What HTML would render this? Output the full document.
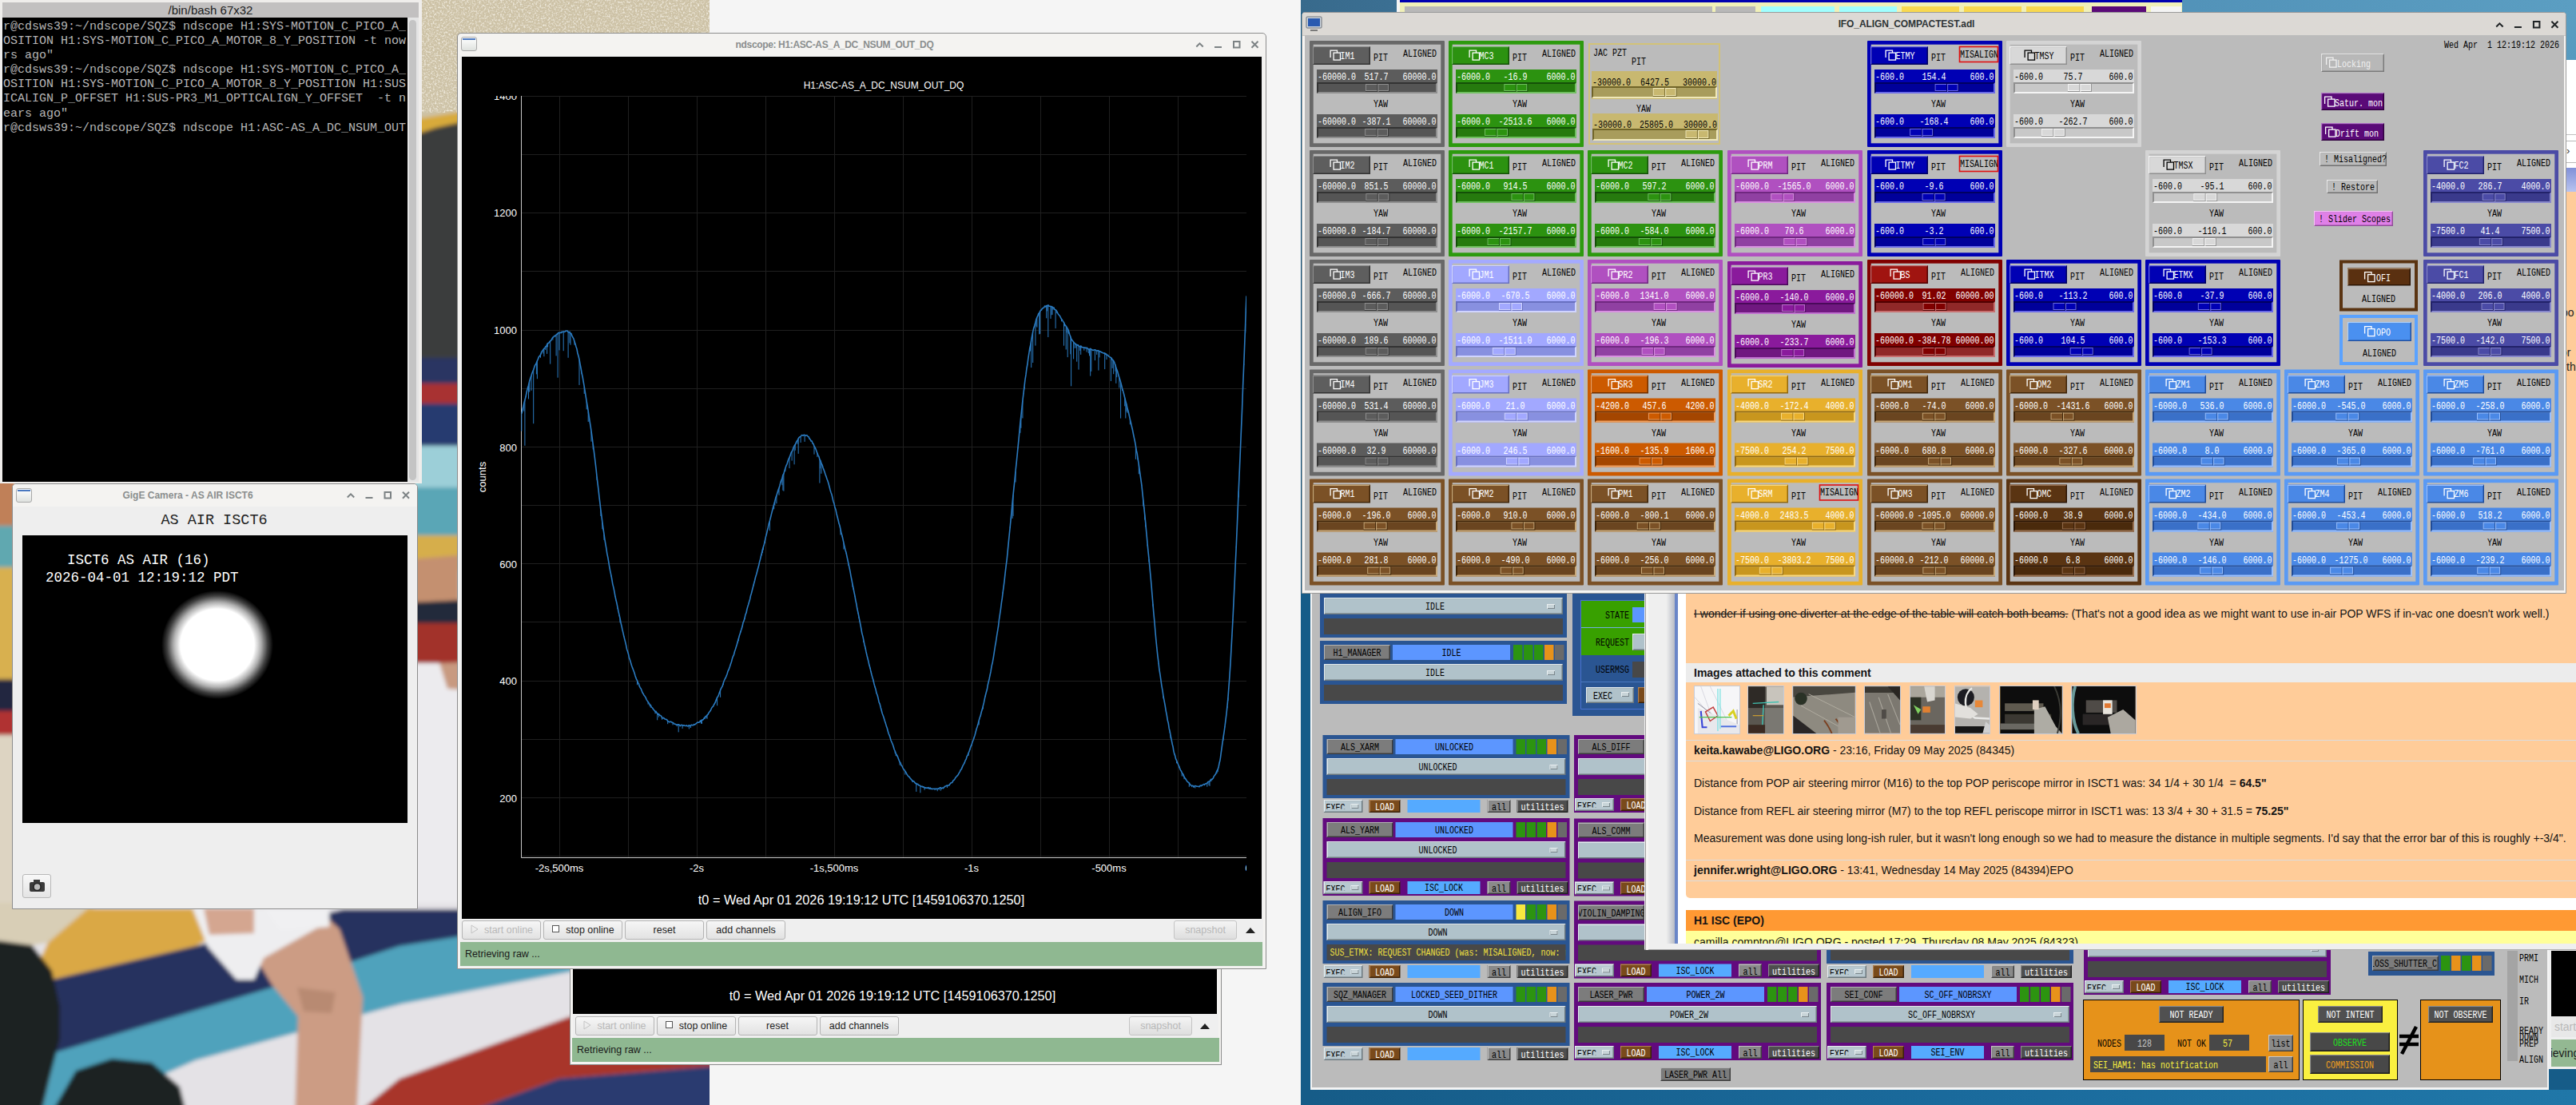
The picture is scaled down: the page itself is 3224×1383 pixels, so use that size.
<!DOCTYPE html><html><head><meta charset="utf-8"><style>html,body{margin:0;padding:0;overflow:hidden}body{width:3224px;height:1383px;position:relative;background:#f5f5f5;font-family:"Liberation Sans",sans-serif}svg{display:block}</style></head><body><div style="position:absolute;left:1628px;top:0;width:1596px;height:1383px;background:#165c88"></div><div style="position:absolute;left:1628px;top:0;width:1596px;height:16px;background:linear-gradient(90deg,#386a8c,#4a88b0 40%,#5b9ec2)"></div><div style="position:absolute;left:3190px;top:16px;width:34px;height:200px;background:linear-gradient(#5b9ec2,#4a90b8)"></div><div style="position:absolute;left:1640px;top:1364px;width:1584px;height:19px;background:linear-gradient(90deg,#165c88,#1a6a9c 50%,#2077a8)"></div><svg style="position:absolute;left:0;top:0" width="888" height="1383" viewBox="0 0 888 1383"><defs><filter id="pb" x="-5%" y="-5%" width="110%" height="110%"><feGaussianBlur stdDeviation="2.5"/></filter><filter id="noise" x="0" y="0" width="100%" height="100%"><feTurbulence type="fractalNoise" baseFrequency="0.45" numOctaves="2" seed="3"/><feColorMatrix type="matrix" values="0 0 0 0 0.95  0 0 0 0 0.92  0 0 0 0 0.85  0 0 0 2.2 -1.0"/></filter></defs><g filter="url(#pb)"><path d="M-20,-20 L900,-20 L900,170 L-20,170 Z" fill="#cdc2a6"/><path d="M515,150 L600,136 L600,150 L540,162 L515,172 Z" fill="#d8aa3a"/><path d="M515,170 L545,160 L600,148 L600,450 L515,448 Z" fill="#3b3e3c"/><path d="M515,448 L600,448 L600,482 L515,482 Z" fill="#2a3462"/><path d="M515,480 L600,480 L600,506 L515,506 Z" fill="#a83232"/><path d="M515,505 L600,505 L600,560 L515,560 Z" fill="#283a70"/><path d="M515,558 L600,558 L600,612 L515,612 Z" fill="#9ccfd8"/><path d="M515,610 L600,610 L600,672 L515,672 Z" fill="#5aa6b6"/><path d="M515,670 L600,670 L600,715 L515,715 Z" fill="#d6ae4c"/><path d="M515,700 L575,695 L575,752 L515,756 Z" fill="#c49070"/><path d="M515,754 L600,750 L600,782 L515,782 Z" fill="#222a3a"/><path d="M515,780 L600,780 L600,832 L515,832 Z" fill="#a2302a"/><path d="M515,830 L600,830 L600,1165 L515,1165 Z" fill="#ecebee"/><path d="M550,830 L600,828 L600,865 L560,862 Z" fill="#c89a80"/><path d="M515,1188 L600,1188 L600,1205 L515,1205 Z" fill="#2a3866"/><path d="M515,1203 L600,1203 L600,1220 L515,1220 Z" fill="#5aaac0"/><path d="M-20,600 L20,600 L20,660 L-20,660 Z" fill="#c08058"/><path d="M-20,658 L20,658 L20,712 L-20,712 Z" fill="#60a8b0"/><path d="M-20,710 L20,710 L20,852 L-20,852 Z" fill="#d8b050"/><path d="M-20,850 L20,850 L20,892 L-20,892 Z" fill="#202840"/><path d="M-20,890 L20,890 L20,922 L-20,922 Z" fill="#b03030"/><path d="M-20,920 L20,920 L20,1140 L-20,1140 Z" fill="#ddd4c2"/><path d="M-20,1130 L900,1130 L900,1400 L-20,1400 Z" fill="#e4e2e6"/><path d="M-20,1130 L120,1130 L105,1160 L70,1178 L30,1185 L-20,1180 Z" fill="#d8ceb6"/><path d="M60,1180 L110,1137 L330,1137 L245,1184 L35,1233 Z" fill="#daa844"/><path d="M35,1233 L245,1184 L430,1138 L720,1138 L720,1170 L560,1200 L500,1257 L350,1296 L70,1317 L40,1300 Z" fill="#27325e"/><path d="M70,1317 L350,1233 L500,1184 L720,1149 L720,1215 L500,1257 L245,1327 L80,1400 L50,1400 Z" fill="#4fa2bc"/><path d="M439,1400 L500,1350 L714,1272 L900,1240 L900,1334 L700,1350 L563,1400 Z" fill="#a8342c"/><path d="M563,1400 L700,1350 L900,1334 L900,1400 L563,1400 Z" fill="#2a3a70"/><path d="M-20,1175 L40,1183 L65,1215 L75,1260 L75,1300 L62,1350 L50,1400 L-20,1400 Z" fill="#1c2420"/><path d="M60,1400 L95,1340 L140,1325 L190,1330 L225,1360 L235,1400 Z" fill="#1c2420"/><path d="M322,1202 L411,1150 L425,1163 L454,1248 L446,1400 L369,1400 L373,1272 L340,1232 Z" fill="#cc9c84"/><path d="M372,1236 L420,1242 L415,1268 L380,1266 Z" fill="#b88a72"/><path d="M241,1137 L410,1137 L412,1153 L330,1199 L318,1226 L296,1226 L260,1185 Z" fill="#eeeef0"/><path d="M255,1137 L318,1137 L318,1168 L262,1170 Z" fill="#d4a690"/><path d="M330,1137 L412,1137 L412,1160 L350,1165 Z" fill="#f0f0f2"/></g><rect x="520" y="0" width="368" height="41" filter="url(#noise)"/><rect x="520" y="41" width="55" height="100" filter="url(#noise)"/></svg><div style="position:absolute;left:888px;top:0;width:740px;height:41px;background:#f5f5f5"></div><div style="position:absolute;left:888px;top:1333px;width:740px;height:50px;background:#f5f5f5"></div><div style="position:absolute;left:1585px;top:0;width:43px;height:1383px;background:#f5f5f5"></div><div style="position:absolute;left:1748px;top:0;width:4px;height:15px;background:#f4f4f4"></div><div style="position:absolute;left:1752px;top:0;width:979px;height:15px;background:#f0f0b8"></div><div style="position:absolute;left:1752px;top:0;width:979px;height:2.5px;background:#0000b0"></div><div style="position:absolute;left:1758px;top:8px;width:385px;height:7px;background:#b8b8b8"></div><div style="position:absolute;left:2147px;top:8px;width:50px;height:7px;background:#b8b8b8"></div><div style="position:absolute;left:2204px;top:8px;width:92px;height:7px;background:#a0ffff"></div><div style="position:absolute;left:2302px;top:8px;width:72px;height:7px;background:#a0ffff"></div><div style="position:absolute;left:2380px;top:8px;width:72px;height:7px;background:#f8d850"></div><div style="position:absolute;left:2458px;top:8px;width:72px;height:7px;background:#f8d850"></div><div style="position:absolute;left:2536px;top:8px;width:72px;height:7px;background:#f8d850"></div><div style="position:absolute;left:2618px;top:8px;width:68px;height:7px;background:#5a0a78"></div><div style="position:absolute;left:2692px;top:8px;width:38px;height:7px;background:#f4f4f4"></div><div style="position:absolute;left:3212px;top:75px;width:12px;height:670px;background:#ffffff"></div><div style="position:absolute;left:3212px;top:168px;width:12px;height:1px;background:#c0c0c0"></div><div style="position:absolute;left:3212px;top:210px;width:12px;height:30px;background:linear-gradient(#8090d8,#b8c4f0)"></div><div style="position:absolute;left:3212px;top:240px;width:12px;height:505px;background:#ffcc99;overflow:hidden;font:14px 'Liberation Sans',sans-serif;color:#222"><div style="position:absolute;left:-6px;top:143px">po</div><div style="position:absolute;left:-7px;top:193px">or</div><div style="position:absolute;left:-3px;top:211px">ith</div></div><div style="position:absolute;left:3212px;top:176px;width:12px;height:26px;border-top:1px solid #b8b8b8;border-bottom:1px solid #b8b8b8;background:#fff;font:13px 'Liberation Sans',sans-serif;color:#333;line-height:24px;overflow:hidden">&#8250;</div><div style="position:absolute;left:3190px;top:1188px;width:34px;height:150px;background:#efefef"></div><div style="position:absolute;left:3193px;top:1190px;width:31px;height:82px;background:#000"></div><div style="position:absolute;left:3193px;top:1272px;width:31px;height:26px;background:#e8e8e8;font:14px 'Liberation Sans',sans-serif;color:#b8b8b8;line-height:26px;white-space:nowrap;overflow:hidden">&nbsp;start</div><div style="position:absolute;left:3193px;top:1301px;width:31px;height:34px;background:#93b892;font:14px 'Liberation Sans',sans-serif;color:#1a1a1a;line-height:34px;white-space:nowrap;overflow:hidden;text-indent:-6px">rieving</div><div style="position:absolute;left:1640px;top:740px;width:1550px;height:624px;background:#f4f4f4"></div><svg style="position:absolute;left:1642px;top:740px" width="1546" height="621" viewBox="1642 740 1546 621"><rect x="1642" y="740" width="1546" height="621" fill="#bbbbbb"/><rect x="1652" y="719" width="309" height="79" fill="#2a5592"/><rect x="1657" y="748" width="299" height="21" fill="#6c787e"/><path d="M1657,769 L1657,748 L1956,748 L1954.5,749.5 L1658.5,749.5 L1658.5,767.5 Z" fill="#e4ecef"/><rect x="1658.5" y="749.5" width="296.0" height="18.0" fill="#b0c2ca"/><text x="1796.0" y="763.0" font-family="Liberation Mono" font-size="12.5" fill="#000" textLength="24.0" lengthAdjust="spacingAndGlyphs" text-anchor="middle">IDLE</text><rect x="1936" y="756" width="10" height="6" fill="#e8eef0"/><rect x="1937" y="757" width="9" height="5" fill="#7a868c"/><rect x="1937" y="757" width="8" height="4" fill="#c8d4d8"/><rect x="1657" y="774" width="299" height="20" fill="#484848"/><rect x="1652" y="802" width="309" height="79" fill="#2a5592"/><rect x="1657" y="807" width="83" height="19" fill="#3c3c3c"/><path d="M1657,826 L1657,807 L1740,807 L1738.5,808.5 L1658.5,808.5 L1658.5,824.5 Z" fill="#b4b4b4"/><rect x="1658.5" y="808.5" width="80.0" height="16.0" fill="#7c7c7c"/><svg x="1658" y="808" width="81" height="17"><text x="40.5" y="13.0" font-family="Liberation Mono" font-size="12.5" fill="#000" textLength="60.0" lengthAdjust="spacingAndGlyphs" text-anchor="middle">H1_MANAGER</text></svg><rect x="1743" y="807" width="147" height="19" fill="#5c96ff"/><text x="1816.5" y="821.0" font-family="Liberation Mono" font-size="12.5" fill="#000" textLength="24.0" lengthAdjust="spacingAndGlyphs" text-anchor="middle">IDLE</text><rect x="1894" y="807" width="11.5" height="19" fill="#2c9410"/><rect x="1907" y="807" width="11.5" height="19" fill="#2c9410"/><rect x="1920" y="807" width="11.5" height="19" fill="#2c9410"/><rect x="1933" y="807" width="11.5" height="19" fill="#e8921a"/><rect x="1946" y="807" width="11.5" height="19" fill="#6a6a6a"/><rect x="1657" y="831" width="299" height="21" fill="#6c787e"/><path d="M1657,852 L1657,831 L1956,831 L1954.5,832.5 L1658.5,832.5 L1658.5,850.5 Z" fill="#e4ecef"/><rect x="1658.5" y="832.5" width="296.0" height="18.0" fill="#b0c2ca"/><text x="1796.0" y="846.0" font-family="Liberation Mono" font-size="12.5" fill="#000" textLength="24.0" lengthAdjust="spacingAndGlyphs" text-anchor="middle">IDLE</text><rect x="1936" y="839" width="10" height="6" fill="#e8eef0"/><rect x="1937" y="840" width="9" height="5" fill="#7a868c"/><rect x="1937" y="840" width="8" height="4" fill="#c8d4d8"/><rect x="1657" y="857" width="299" height="20" fill="#484848"/><rect x="1655.5" y="920" width="309" height="79" fill="#2a5592"/><rect x="1660.5" y="925" width="83" height="19" fill="#3c3c3c"/><path d="M1660.5,944 L1660.5,925 L1743.5,925 L1742.0,926.5 L1662.0,926.5 L1662.0,942.5 Z" fill="#b4b4b4"/><rect x="1662.0" y="926.5" width="80.0" height="16.0" fill="#7c7c7c"/><svg x="1661.5" y="926" width="81" height="17"><text x="40.5" y="13.0" font-family="Liberation Mono" font-size="12.5" fill="#000" textLength="48.0" lengthAdjust="spacingAndGlyphs" text-anchor="middle">ALS_XARM</text></svg><rect x="1746.5" y="925" width="147" height="19" fill="#5c96ff"/><text x="1820.0" y="939.0" font-family="Liberation Mono" font-size="12.5" fill="#000" textLength="48.0" lengthAdjust="spacingAndGlyphs" text-anchor="middle">UNLOCKED</text><rect x="1897.5" y="925" width="11.5" height="19" fill="#2c9410"/><rect x="1910.5" y="925" width="11.5" height="19" fill="#2c9410"/><rect x="1923.5" y="925" width="11.5" height="19" fill="#2c9410"/><rect x="1936.5" y="925" width="11.5" height="19" fill="#e8921a"/><rect x="1949.5" y="925" width="11.5" height="19" fill="#6a6a6a"/><rect x="1660.5" y="949" width="299" height="21" fill="#6c787e"/><path d="M1660.5,970 L1660.5,949 L1959.5,949 L1958.0,950.5 L1662.0,950.5 L1662.0,968.5 Z" fill="#e4ecef"/><rect x="1662.0" y="950.5" width="296.0" height="18.0" fill="#b0c2ca"/><text x="1799.5" y="964.0" font-family="Liberation Mono" font-size="12.5" fill="#000" textLength="48.0" lengthAdjust="spacingAndGlyphs" text-anchor="middle">UNLOCKED</text><rect x="1939.5" y="957" width="10" height="6" fill="#e8eef0"/><rect x="1940.5" y="958" width="9" height="5" fill="#7a868c"/><rect x="1940.5" y="958" width="8" height="4" fill="#c8d4d8"/><rect x="1660.5" y="975" width="299" height="20" fill="#484848"/><rect x="1656.5" y="1001" width="49" height="16" fill="#6c787e"/><path d="M1656.5,1017 L1656.5,1001 L1705.5,1001 L1704.0,1002.5 L1658.0,1002.5 L1658.0,1015.5 Z" fill="#e8eef0"/><rect x="1658.0" y="1002.5" width="46.0" height="13.0" fill="#b8c8d0"/><svg x="1658.5" y="1001" width="30" height="11.5"><text x="1.0" y="13.5" font-family="Liberation Mono" font-size="12.5" fill="#000" textLength="24.0" lengthAdjust="spacingAndGlyphs">EXEC</text></svg><rect x="1690.5" y="1006" width="10" height="6" fill="#e8eef0"/><rect x="1691.5" y="1007" width="9" height="5" fill="#7a868c"/><rect x="1691.5" y="1007" width="8" height="4" fill="#c8d4d8"/><rect x="1713.5" y="1001" width="39" height="16" fill="#3a2008"/><path d="M1713.5,1017 L1713.5,1001 L1752.5,1001 L1751.0,1002.5 L1715.0,1002.5 L1715.0,1015.5 Z" fill="#b08050"/><rect x="1715.0" y="1002.5" width="36.0" height="13.0" fill="#7a4a1a"/><text x="1733.0" y="1014.0" font-family="Liberation Mono" font-size="12.5" fill="#fff" textLength="24.0" lengthAdjust="spacingAndGlyphs" text-anchor="middle">LOAD</text><rect x="1761.5" y="1001" width="91" height="16" fill="#55aaff"/><rect x="1861.5" y="1001" width="29" height="16" fill="#404040"/><path d="M1861.5,1017 L1861.5,1001 L1890.5,1001 L1889.0,1002.5 L1863.0,1002.5 L1863.0,1015.5 Z" fill="#c0c0c0"/><rect x="1863.0" y="1002.5" width="26.0" height="13.0" fill="#8a8a8a"/><text x="1876.0" y="1014.0" font-family="Liberation Mono" font-size="12.5" fill="#000" textLength="18.0" lengthAdjust="spacingAndGlyphs" text-anchor="middle">all</text><rect x="1898.5" y="1001" width="64" height="16" fill="#202020"/><path d="M1898.5,1017 L1898.5,1001 L1962.5,1001 L1961.0,1002.5 L1900.0,1002.5 L1900.0,1015.5 Z" fill="#8a8a8a"/><rect x="1900.0" y="1002.5" width="61.0" height="13.0" fill="#4e4e4e"/><text x="1930.5" y="1014.0" font-family="Liberation Mono" font-size="12.5" fill="#fff" textLength="54.0" lengthAdjust="spacingAndGlyphs" text-anchor="middle">utilities</text><rect x="1655.5" y="1024" width="309" height="97" fill="#620a7e"/><rect x="1660.5" y="1029" width="83" height="19" fill="#3c3c3c"/><path d="M1660.5,1048 L1660.5,1029 L1743.5,1029 L1742.0,1030.5 L1662.0,1030.5 L1662.0,1046.5 Z" fill="#b4b4b4"/><rect x="1662.0" y="1030.5" width="80.0" height="16.0" fill="#7c7c7c"/><svg x="1661.5" y="1030" width="81" height="17"><text x="40.5" y="13.0" font-family="Liberation Mono" font-size="12.5" fill="#000" textLength="48.0" lengthAdjust="spacingAndGlyphs" text-anchor="middle">ALS_YARM</text></svg><rect x="1746.5" y="1029" width="147" height="19" fill="#5c96ff"/><text x="1820.0" y="1043.0" font-family="Liberation Mono" font-size="12.5" fill="#000" textLength="48.0" lengthAdjust="spacingAndGlyphs" text-anchor="middle">UNLOCKED</text><rect x="1897.5" y="1029" width="11.5" height="19" fill="#2c9410"/><rect x="1910.5" y="1029" width="11.5" height="19" fill="#2c9410"/><rect x="1923.5" y="1029" width="11.5" height="19" fill="#2c9410"/><rect x="1936.5" y="1029" width="11.5" height="19" fill="#e8921a"/><rect x="1949.5" y="1029" width="11.5" height="19" fill="#6a6a6a"/><rect x="1660.5" y="1053" width="299" height="21" fill="#6c787e"/><path d="M1660.5,1074 L1660.5,1053 L1959.5,1053 L1958.0,1054.5 L1662.0,1054.5 L1662.0,1072.5 Z" fill="#e4ecef"/><rect x="1662.0" y="1054.5" width="296.0" height="18.0" fill="#b0c2ca"/><text x="1799.5" y="1068.0" font-family="Liberation Mono" font-size="12.5" fill="#000" textLength="48.0" lengthAdjust="spacingAndGlyphs" text-anchor="middle">UNLOCKED</text><rect x="1939.5" y="1061" width="10" height="6" fill="#e8eef0"/><rect x="1940.5" y="1062" width="9" height="5" fill="#7a868c"/><rect x="1940.5" y="1062" width="8" height="4" fill="#c8d4d8"/><rect x="1660.5" y="1079" width="299" height="20" fill="#484848"/><rect x="1656.5" y="1103" width="49" height="16" fill="#6c787e"/><path d="M1656.5,1119 L1656.5,1103 L1705.5,1103 L1704.0,1104.5 L1658.0,1104.5 L1658.0,1117.5 Z" fill="#e8eef0"/><rect x="1658.0" y="1104.5" width="46.0" height="13.0" fill="#b8c8d0"/><svg x="1658.5" y="1103" width="30" height="11.5"><text x="1.0" y="13.5" font-family="Liberation Mono" font-size="12.5" fill="#000" textLength="24.0" lengthAdjust="spacingAndGlyphs">EXEC</text></svg><rect x="1690.5" y="1108" width="10" height="6" fill="#e8eef0"/><rect x="1691.5" y="1109" width="9" height="5" fill="#7a868c"/><rect x="1691.5" y="1109" width="8" height="4" fill="#c8d4d8"/><rect x="1713.5" y="1103" width="39" height="16" fill="#3a2008"/><path d="M1713.5,1119 L1713.5,1103 L1752.5,1103 L1751.0,1104.5 L1715.0,1104.5 L1715.0,1117.5 Z" fill="#b08050"/><rect x="1715.0" y="1104.5" width="36.0" height="13.0" fill="#7a4a1a"/><text x="1733.0" y="1116.0" font-family="Liberation Mono" font-size="12.5" fill="#fff" textLength="24.0" lengthAdjust="spacingAndGlyphs" text-anchor="middle">LOAD</text><rect x="1761.5" y="1103" width="91" height="16" fill="#55aaff"/><text x="1807.0" y="1115.0" font-family="Liberation Mono" font-size="12.5" fill="#000" textLength="48.0" lengthAdjust="spacingAndGlyphs" text-anchor="middle">ISC_LOCK</text><rect x="1861.5" y="1103" width="29" height="16" fill="#404040"/><path d="M1861.5,1119 L1861.5,1103 L1890.5,1103 L1889.0,1104.5 L1863.0,1104.5 L1863.0,1117.5 Z" fill="#c0c0c0"/><rect x="1863.0" y="1104.5" width="26.0" height="13.0" fill="#8a8a8a"/><text x="1876.0" y="1116.0" font-family="Liberation Mono" font-size="12.5" fill="#000" textLength="18.0" lengthAdjust="spacingAndGlyphs" text-anchor="middle">all</text><rect x="1898.5" y="1103" width="64" height="16" fill="#202020"/><path d="M1898.5,1119 L1898.5,1103 L1962.5,1103 L1961.0,1104.5 L1900.0,1104.5 L1900.0,1117.5 Z" fill="#8a8a8a"/><rect x="1900.0" y="1104.5" width="61.0" height="13.0" fill="#4e4e4e"/><text x="1930.5" y="1116.0" font-family="Liberation Mono" font-size="12.5" fill="#fff" textLength="54.0" lengthAdjust="spacingAndGlyphs" text-anchor="middle">utilities</text><rect x="1655.5" y="1127" width="309" height="79" fill="#2a5592"/><rect x="1660.5" y="1132" width="83" height="19" fill="#3c3c3c"/><path d="M1660.5,1151 L1660.5,1132 L1743.5,1132 L1742.0,1133.5 L1662.0,1133.5 L1662.0,1149.5 Z" fill="#b4b4b4"/><rect x="1662.0" y="1133.5" width="80.0" height="16.0" fill="#7c7c7c"/><svg x="1661.5" y="1133" width="81" height="17"><text x="40.5" y="13.0" font-family="Liberation Mono" font-size="12.5" fill="#000" textLength="54.0" lengthAdjust="spacingAndGlyphs" text-anchor="middle">ALIGN_IFO</text></svg><rect x="1746.5" y="1132" width="147" height="19" fill="#5c96ff"/><text x="1820.0" y="1146.0" font-family="Liberation Mono" font-size="12.5" fill="#000" textLength="24.0" lengthAdjust="spacingAndGlyphs" text-anchor="middle">DOWN</text><rect x="1897.5" y="1132" width="11.5" height="19" fill="#f8e840"/><rect x="1910.5" y="1132" width="11.5" height="19" fill="#2c9410"/><rect x="1923.5" y="1132" width="11.5" height="19" fill="#2c9410"/><rect x="1936.5" y="1132" width="11.5" height="19" fill="#e8921a"/><rect x="1949.5" y="1132" width="11.5" height="19" fill="#6a6a6a"/><rect x="1660.5" y="1156" width="299" height="21" fill="#6c787e"/><path d="M1660.5,1177 L1660.5,1156 L1959.5,1156 L1958.0,1157.5 L1662.0,1157.5 L1662.0,1175.5 Z" fill="#e4ecef"/><rect x="1662.0" y="1157.5" width="296.0" height="18.0" fill="#b0c2ca"/><text x="1799.5" y="1171.0" font-family="Liberation Mono" font-size="12.5" fill="#000" textLength="24.0" lengthAdjust="spacingAndGlyphs" text-anchor="middle">DOWN</text><rect x="1939.5" y="1164" width="10" height="6" fill="#e8eef0"/><rect x="1940.5" y="1165" width="9" height="5" fill="#7a868c"/><rect x="1940.5" y="1165" width="8" height="4" fill="#c8d4d8"/><rect x="1660.5" y="1182" width="299" height="20" fill="#484848"/><svg x="1660.5" y="1182" width="299" height="20"><text x="4.0" y="14.0" font-family="Liberation Mono" font-size="12.5" fill="#f0e040" textLength="300.0" lengthAdjust="spacingAndGlyphs">SUS_ETMX: REQUEST CHANGED (was: MISALIGNED, now: r</text></svg><rect x="1656.5" y="1208" width="49" height="16" fill="#6c787e"/><path d="M1656.5,1224 L1656.5,1208 L1705.5,1208 L1704.0,1209.5 L1658.0,1209.5 L1658.0,1222.5 Z" fill="#e8eef0"/><rect x="1658.0" y="1209.5" width="46.0" height="13.0" fill="#b8c8d0"/><svg x="1658.5" y="1208" width="30" height="11.5"><text x="1.0" y="13.5" font-family="Liberation Mono" font-size="12.5" fill="#000" textLength="24.0" lengthAdjust="spacingAndGlyphs">EXEC</text></svg><rect x="1690.5" y="1213" width="10" height="6" fill="#e8eef0"/><rect x="1691.5" y="1214" width="9" height="5" fill="#7a868c"/><rect x="1691.5" y="1214" width="8" height="4" fill="#c8d4d8"/><rect x="1713.5" y="1208" width="39" height="16" fill="#3a2008"/><path d="M1713.5,1224 L1713.5,1208 L1752.5,1208 L1751.0,1209.5 L1715.0,1209.5 L1715.0,1222.5 Z" fill="#b08050"/><rect x="1715.0" y="1209.5" width="36.0" height="13.0" fill="#7a4a1a"/><text x="1733.0" y="1221.0" font-family="Liberation Mono" font-size="12.5" fill="#fff" textLength="24.0" lengthAdjust="spacingAndGlyphs" text-anchor="middle">LOAD</text><rect x="1761.5" y="1208" width="91" height="16" fill="#55aaff"/><rect x="1861.5" y="1208" width="29" height="16" fill="#404040"/><path d="M1861.5,1224 L1861.5,1208 L1890.5,1208 L1889.0,1209.5 L1863.0,1209.5 L1863.0,1222.5 Z" fill="#c0c0c0"/><rect x="1863.0" y="1209.5" width="26.0" height="13.0" fill="#8a8a8a"/><text x="1876.0" y="1221.0" font-family="Liberation Mono" font-size="12.5" fill="#000" textLength="18.0" lengthAdjust="spacingAndGlyphs" text-anchor="middle">all</text><rect x="1898.5" y="1208" width="64" height="16" fill="#202020"/><path d="M1898.5,1224 L1898.5,1208 L1962.5,1208 L1961.0,1209.5 L1900.0,1209.5 L1900.0,1222.5 Z" fill="#8a8a8a"/><rect x="1900.0" y="1209.5" width="61.0" height="13.0" fill="#4e4e4e"/><text x="1930.5" y="1221.0" font-family="Liberation Mono" font-size="12.5" fill="#fff" textLength="54.0" lengthAdjust="spacingAndGlyphs" text-anchor="middle">utilities</text><rect x="1655.5" y="1230" width="309" height="79" fill="#2a5592"/><rect x="1660.5" y="1235" width="83" height="19" fill="#3c3c3c"/><path d="M1660.5,1254 L1660.5,1235 L1743.5,1235 L1742.0,1236.5 L1662.0,1236.5 L1662.0,1252.5 Z" fill="#b4b4b4"/><rect x="1662.0" y="1236.5" width="80.0" height="16.0" fill="#7c7c7c"/><svg x="1661.5" y="1236" width="81" height="17"><text x="40.5" y="13.0" font-family="Liberation Mono" font-size="12.5" fill="#000" textLength="66.0" lengthAdjust="spacingAndGlyphs" text-anchor="middle">SQZ_MANAGER</text></svg><rect x="1746.5" y="1235" width="147" height="19" fill="#5c96ff"/><text x="1820.0" y="1249.0" font-family="Liberation Mono" font-size="12.5" fill="#000" textLength="108.0" lengthAdjust="spacingAndGlyphs" text-anchor="middle">LOCKED_SEED_DITHER</text><rect x="1897.5" y="1235" width="11.5" height="19" fill="#2c9410"/><rect x="1910.5" y="1235" width="11.5" height="19" fill="#2c9410"/><rect x="1923.5" y="1235" width="11.5" height="19" fill="#2c9410"/><rect x="1936.5" y="1235" width="11.5" height="19" fill="#e8921a"/><rect x="1949.5" y="1235" width="11.5" height="19" fill="#6a6a6a"/><rect x="1660.5" y="1259" width="299" height="21" fill="#6c787e"/><path d="M1660.5,1280 L1660.5,1259 L1959.5,1259 L1958.0,1260.5 L1662.0,1260.5 L1662.0,1278.5 Z" fill="#e4ecef"/><rect x="1662.0" y="1260.5" width="296.0" height="18.0" fill="#b0c2ca"/><text x="1799.5" y="1274.0" font-family="Liberation Mono" font-size="12.5" fill="#000" textLength="24.0" lengthAdjust="spacingAndGlyphs" text-anchor="middle">DOWN</text><rect x="1939.5" y="1267" width="10" height="6" fill="#e8eef0"/><rect x="1940.5" y="1268" width="9" height="5" fill="#7a868c"/><rect x="1940.5" y="1268" width="8" height="4" fill="#c8d4d8"/><rect x="1660.5" y="1285" width="299" height="20" fill="#484848"/><rect x="1656.5" y="1311" width="49" height="16" fill="#6c787e"/><path d="M1656.5,1327 L1656.5,1311 L1705.5,1311 L1704.0,1312.5 L1658.0,1312.5 L1658.0,1325.5 Z" fill="#e8eef0"/><rect x="1658.0" y="1312.5" width="46.0" height="13.0" fill="#b8c8d0"/><svg x="1658.5" y="1311" width="30" height="11.5"><text x="1.0" y="13.5" font-family="Liberation Mono" font-size="12.5" fill="#000" textLength="24.0" lengthAdjust="spacingAndGlyphs">EXEC</text></svg><rect x="1690.5" y="1316" width="10" height="6" fill="#e8eef0"/><rect x="1691.5" y="1317" width="9" height="5" fill="#7a868c"/><rect x="1691.5" y="1317" width="8" height="4" fill="#c8d4d8"/><rect x="1713.5" y="1311" width="39" height="16" fill="#3a2008"/><path d="M1713.5,1327 L1713.5,1311 L1752.5,1311 L1751.0,1312.5 L1715.0,1312.5 L1715.0,1325.5 Z" fill="#b08050"/><rect x="1715.0" y="1312.5" width="36.0" height="13.0" fill="#7a4a1a"/><text x="1733.0" y="1324.0" font-family="Liberation Mono" font-size="12.5" fill="#fff" textLength="24.0" lengthAdjust="spacingAndGlyphs" text-anchor="middle">LOAD</text><rect x="1761.5" y="1311" width="91" height="16" fill="#55aaff"/><rect x="1861.5" y="1311" width="29" height="16" fill="#404040"/><path d="M1861.5,1327 L1861.5,1311 L1890.5,1311 L1889.0,1312.5 L1863.0,1312.5 L1863.0,1325.5 Z" fill="#c0c0c0"/><rect x="1863.0" y="1312.5" width="26.0" height="13.0" fill="#8a8a8a"/><text x="1876.0" y="1324.0" font-family="Liberation Mono" font-size="12.5" fill="#000" textLength="18.0" lengthAdjust="spacingAndGlyphs" text-anchor="middle">all</text><rect x="1898.5" y="1311" width="64" height="16" fill="#202020"/><path d="M1898.5,1327 L1898.5,1311 L1962.5,1311 L1961.0,1312.5 L1900.0,1312.5 L1900.0,1325.5 Z" fill="#8a8a8a"/><rect x="1900.0" y="1312.5" width="61.0" height="13.0" fill="#4e4e4e"/><text x="1930.5" y="1324.0" font-family="Liberation Mono" font-size="12.5" fill="#fff" textLength="54.0" lengthAdjust="spacingAndGlyphs" text-anchor="middle">utilities</text><rect x="1968" y="742" width="95" height="154" fill="#2a5592"/><rect x="1978" y="752" width="85" height="68" fill="#38a000"/><path d="M1978,785.5 L2063,785.5" stroke="#70b0e0" stroke-width="1"/><text x="2039.0" y="774.0" font-family="Liberation Mono" font-size="12.5" fill="#000" textLength="30.0" lengthAdjust="spacingAndGlyphs" text-anchor="end">STATE</text><rect x="2043" y="760" width="20" height="19" fill="#5c96ff"/><text x="2039.0" y="808.0" font-family="Liberation Mono" font-size="12.5" fill="#000" textLength="42.0" lengthAdjust="spacingAndGlyphs" text-anchor="end">REQUEST</text><rect x="2043" y="793" width="30" height="21" fill="#6c787e"/><path d="M2043,814 L2043,793 L2073,793 L2071.5,794.5 L2044.5,794.5 L2044.5,812.5 Z" fill="#e4ecef"/><rect x="2044.5" y="794.5" width="27.0" height="18.0" fill="#b0c2ca"/><path d="M1978.5,751 L1978.5,887.5 L2063,887.5 M1978,751.5 L2063,751.5" stroke="#4a72d0" stroke-width="1" fill="none"/><text x="2039.0" y="842.0" font-family="Liberation Mono" font-size="12.5" fill="#000" textLength="42.0" lengthAdjust="spacingAndGlyphs" text-anchor="end">USERMSG</text><rect x="2043" y="828" width="20" height="20" fill="#484848"/><path d="M1978,853.5 L2063,853.5" stroke="#4a7ac0" stroke-width="1"/><rect x="1985" y="860" width="60" height="20" fill="#6c787e"/><path d="M1985,880 L1985,860 L2045,860 L2043.5,861.5 L1986.5,861.5 L1986.5,878.5 Z" fill="#e4ecef"/><rect x="1986.5" y="861.5" width="57.0" height="17.0" fill="#b0c2ca"/><text x="1994.0" y="875.0" font-family="Liberation Mono" font-size="12.5" fill="#000" textLength="24.0" lengthAdjust="spacingAndGlyphs">EXEC</text><rect x="2029" y="866" width="10" height="6" fill="#e8eef0"/><rect x="2030" y="867" width="9" height="5" fill="#7a868c"/><rect x="2030" y="867" width="8" height="4" fill="#c8d4d8"/><rect x="2050" y="860" width="20" height="20" fill="#3a2008"/><path d="M2050,880 L2050,860 L2070,860 L2068.5,861.5 L2051.5,861.5 L2051.5,878.5 Z" fill="#b08050"/><rect x="2051.5" y="861.5" width="17.0" height="17.0" fill="#7a4a1a"/><rect x="1970" y="920" width="309" height="97" fill="#620a7e"/><rect x="1975" y="925" width="83" height="19" fill="#3c3c3c"/><path d="M1975,944 L1975,925 L2058,925 L2056.5,926.5 L1976.5,926.5 L1976.5,942.5 Z" fill="#b4b4b4"/><rect x="1976.5" y="926.5" width="80.0" height="16.0" fill="#7c7c7c"/><svg x="1976" y="926" width="81" height="17"><text x="40.5" y="13.0" font-family="Liberation Mono" font-size="12.5" fill="#000" textLength="48.0" lengthAdjust="spacingAndGlyphs" text-anchor="middle">ALS_DIFF</text></svg><rect x="2061" y="925" width="147" height="19" fill="#5c96ff"/><rect x="2212" y="925" width="11.5" height="19" fill="#2c9410"/><rect x="2225" y="925" width="11.5" height="19" fill="#2c9410"/><rect x="2238" y="925" width="11.5" height="19" fill="#2c9410"/><rect x="2251" y="925" width="11.5" height="19" fill="#e8921a"/><rect x="2264" y="925" width="11.5" height="19" fill="#6a6a6a"/><rect x="1975" y="949" width="299" height="21" fill="#6c787e"/><path d="M1975,970 L1975,949 L2274,949 L2272.5,950.5 L1976.5,950.5 L1976.5,968.5 Z" fill="#e4ecef"/><rect x="1976.5" y="950.5" width="296.0" height="18.0" fill="#b0c2ca"/><rect x="2254" y="957" width="10" height="6" fill="#e8eef0"/><rect x="2255" y="958" width="9" height="5" fill="#7a868c"/><rect x="2255" y="958" width="8" height="4" fill="#c8d4d8"/><rect x="1975" y="975" width="299" height="20" fill="#484848"/><rect x="1971" y="999" width="49" height="16" fill="#6c787e"/><path d="M1971,1015 L1971,999 L2020,999 L2018.5,1000.5 L1972.5,1000.5 L1972.5,1013.5 Z" fill="#e8eef0"/><rect x="1972.5" y="1000.5" width="46.0" height="13.0" fill="#b8c8d0"/><svg x="1973" y="999" width="30" height="11.5"><text x="1.0" y="13.5" font-family="Liberation Mono" font-size="12.5" fill="#000" textLength="24.0" lengthAdjust="spacingAndGlyphs">EXEC</text></svg><rect x="2005" y="1004" width="10" height="6" fill="#e8eef0"/><rect x="2006" y="1005" width="9" height="5" fill="#7a868c"/><rect x="2006" y="1005" width="8" height="4" fill="#c8d4d8"/><rect x="2028" y="999" width="39" height="16" fill="#3a2008"/><path d="M2028,1015 L2028,999 L2067,999 L2065.5,1000.5 L2029.5,1000.5 L2029.5,1013.5 Z" fill="#b08050"/><rect x="2029.5" y="1000.5" width="36.0" height="13.0" fill="#7a4a1a"/><text x="2047.5" y="1012.0" font-family="Liberation Mono" font-size="12.5" fill="#fff" textLength="24.0" lengthAdjust="spacingAndGlyphs" text-anchor="middle">LOAD</text><rect x="2076" y="999" width="91" height="16" fill="#55aaff"/><text x="2121.5" y="1011.0" font-family="Liberation Mono" font-size="12.5" fill="#000" textLength="48.0" lengthAdjust="spacingAndGlyphs" text-anchor="middle">ISC_LOCK</text><rect x="2176" y="999" width="29" height="16" fill="#404040"/><path d="M2176,1015 L2176,999 L2205,999 L2203.5,1000.5 L2177.5,1000.5 L2177.5,1013.5 Z" fill="#c0c0c0"/><rect x="2177.5" y="1000.5" width="26.0" height="13.0" fill="#8a8a8a"/><text x="2190.5" y="1012.0" font-family="Liberation Mono" font-size="12.5" fill="#000" textLength="18.0" lengthAdjust="spacingAndGlyphs" text-anchor="middle">all</text><rect x="2213" y="999" width="64" height="16" fill="#202020"/><path d="M2213,1015 L2213,999 L2277,999 L2275.5,1000.5 L2214.5,1000.5 L2214.5,1013.5 Z" fill="#8a8a8a"/><rect x="2214.5" y="1000.5" width="61.0" height="13.0" fill="#4e4e4e"/><text x="2245.0" y="1012.0" font-family="Liberation Mono" font-size="12.5" fill="#fff" textLength="54.0" lengthAdjust="spacingAndGlyphs" text-anchor="middle">utilities</text><rect x="1970" y="1024.5" width="309" height="97" fill="#620a7e"/><rect x="1975" y="1029.5" width="83" height="19" fill="#3c3c3c"/><path d="M1975,1048.5 L1975,1029.5 L2058,1029.5 L2056.5,1031.0 L1976.5,1031.0 L1976.5,1047.0 Z" fill="#b4b4b4"/><rect x="1976.5" y="1031.0" width="80.0" height="16.0" fill="#7c7c7c"/><svg x="1976" y="1030.5" width="81" height="17"><text x="40.5" y="13.0" font-family="Liberation Mono" font-size="12.5" fill="#000" textLength="48.0" lengthAdjust="spacingAndGlyphs" text-anchor="middle">ALS_COMM</text></svg><rect x="2061" y="1029.5" width="147" height="19" fill="#5c96ff"/><rect x="2212" y="1029.5" width="11.5" height="19" fill="#2c9410"/><rect x="2225" y="1029.5" width="11.5" height="19" fill="#2c9410"/><rect x="2238" y="1029.5" width="11.5" height="19" fill="#2c9410"/><rect x="2251" y="1029.5" width="11.5" height="19" fill="#e8921a"/><rect x="2264" y="1029.5" width="11.5" height="19" fill="#6a6a6a"/><rect x="1975" y="1053.5" width="299" height="21" fill="#6c787e"/><path d="M1975,1074.5 L1975,1053.5 L2274,1053.5 L2272.5,1055.0 L1976.5,1055.0 L1976.5,1073.0 Z" fill="#e4ecef"/><rect x="1976.5" y="1055.0" width="296.0" height="18.0" fill="#b0c2ca"/><rect x="2254" y="1061.5" width="10" height="6" fill="#e8eef0"/><rect x="2255" y="1062.5" width="9" height="5" fill="#7a868c"/><rect x="2255" y="1062.5" width="8" height="4" fill="#c8d4d8"/><rect x="1975" y="1079.5" width="299" height="20" fill="#484848"/><rect x="1971" y="1103.5" width="49" height="16" fill="#6c787e"/><path d="M1971,1119.5 L1971,1103.5 L2020,1103.5 L2018.5,1105.0 L1972.5,1105.0 L1972.5,1118.0 Z" fill="#e8eef0"/><rect x="1972.5" y="1105.0" width="46.0" height="13.0" fill="#b8c8d0"/><svg x="1973" y="1103.5" width="30" height="11.5"><text x="1.0" y="13.5" font-family="Liberation Mono" font-size="12.5" fill="#000" textLength="24.0" lengthAdjust="spacingAndGlyphs">EXEC</text></svg><rect x="2005" y="1108.5" width="10" height="6" fill="#e8eef0"/><rect x="2006" y="1109.5" width="9" height="5" fill="#7a868c"/><rect x="2006" y="1109.5" width="8" height="4" fill="#c8d4d8"/><rect x="2028" y="1103.5" width="39" height="16" fill="#3a2008"/><path d="M2028,1119.5 L2028,1103.5 L2067,1103.5 L2065.5,1105.0 L2029.5,1105.0 L2029.5,1118.0 Z" fill="#b08050"/><rect x="2029.5" y="1105.0" width="36.0" height="13.0" fill="#7a4a1a"/><text x="2047.5" y="1116.5" font-family="Liberation Mono" font-size="12.5" fill="#fff" textLength="24.0" lengthAdjust="spacingAndGlyphs" text-anchor="middle">LOAD</text><rect x="2076" y="1103.5" width="91" height="16" fill="#55aaff"/><text x="2121.5" y="1115.5" font-family="Liberation Mono" font-size="12.5" fill="#000" textLength="48.0" lengthAdjust="spacingAndGlyphs" text-anchor="middle">ISC_LOCK</text><rect x="2176" y="1103.5" width="29" height="16" fill="#404040"/><path d="M2176,1119.5 L2176,1103.5 L2205,1103.5 L2203.5,1105.0 L2177.5,1105.0 L2177.5,1118.0 Z" fill="#c0c0c0"/><rect x="2177.5" y="1105.0" width="26.0" height="13.0" fill="#8a8a8a"/><text x="2190.5" y="1116.5" font-family="Liberation Mono" font-size="12.5" fill="#000" textLength="18.0" lengthAdjust="spacingAndGlyphs" text-anchor="middle">all</text><rect x="2213" y="1103.5" width="64" height="16" fill="#202020"/><path d="M2213,1119.5 L2213,1103.5 L2277,1103.5 L2275.5,1105.0 L2214.5,1105.0 L2214.5,1118.0 Z" fill="#8a8a8a"/><rect x="2214.5" y="1105.0" width="61.0" height="13.0" fill="#4e4e4e"/><text x="2245.0" y="1116.5" font-family="Liberation Mono" font-size="12.5" fill="#fff" textLength="54.0" lengthAdjust="spacingAndGlyphs" text-anchor="middle">utilities</text><rect x="1970" y="1127.5" width="309" height="97" fill="#620a7e"/><rect x="1975" y="1132.5" width="83" height="19" fill="#3c3c3c"/><path d="M1975,1151.5 L1975,1132.5 L2058,1132.5 L2056.5,1134.0 L1976.5,1134.0 L1976.5,1150.0 Z" fill="#b4b4b4"/><rect x="1976.5" y="1134.0" width="80.0" height="16.0" fill="#7c7c7c"/><svg x="1976" y="1133.5" width="81" height="17"><text x="40.5" y="13.0" font-family="Liberation Mono" font-size="12.5" fill="#000" textLength="84.0" lengthAdjust="spacingAndGlyphs" text-anchor="middle">VIOLIN_DAMPING</text></svg><rect x="2061" y="1132.5" width="147" height="19" fill="#5c96ff"/><rect x="2212" y="1132.5" width="11.5" height="19" fill="#2c9410"/><rect x="2225" y="1132.5" width="11.5" height="19" fill="#2c9410"/><rect x="2238" y="1132.5" width="11.5" height="19" fill="#2c9410"/><rect x="2251" y="1132.5" width="11.5" height="19" fill="#e8921a"/><rect x="2264" y="1132.5" width="11.5" height="19" fill="#6a6a6a"/><rect x="1975" y="1156.5" width="299" height="21" fill="#6c787e"/><path d="M1975,1177.5 L1975,1156.5 L2274,1156.5 L2272.5,1158.0 L1976.5,1158.0 L1976.5,1176.0 Z" fill="#e4ecef"/><rect x="1976.5" y="1158.0" width="296.0" height="18.0" fill="#b0c2ca"/><rect x="2254" y="1164.5" width="10" height="6" fill="#e8eef0"/><rect x="2255" y="1165.5" width="9" height="5" fill="#7a868c"/><rect x="2255" y="1165.5" width="8" height="4" fill="#c8d4d8"/><rect x="1975" y="1182.5" width="299" height="20" fill="#484848"/><rect x="1971" y="1206.5" width="49" height="16" fill="#6c787e"/><path d="M1971,1222.5 L1971,1206.5 L2020,1206.5 L2018.5,1208.0 L1972.5,1208.0 L1972.5,1221.0 Z" fill="#e8eef0"/><rect x="1972.5" y="1208.0" width="46.0" height="13.0" fill="#b8c8d0"/><svg x="1973" y="1206.5" width="30" height="11.5"><text x="1.0" y="13.5" font-family="Liberation Mono" font-size="12.5" fill="#000" textLength="24.0" lengthAdjust="spacingAndGlyphs">EXEC</text></svg><rect x="2005" y="1211.5" width="10" height="6" fill="#e8eef0"/><rect x="2006" y="1212.5" width="9" height="5" fill="#7a868c"/><rect x="2006" y="1212.5" width="8" height="4" fill="#c8d4d8"/><rect x="2028" y="1206.5" width="39" height="16" fill="#3a2008"/><path d="M2028,1222.5 L2028,1206.5 L2067,1206.5 L2065.5,1208.0 L2029.5,1208.0 L2029.5,1221.0 Z" fill="#b08050"/><rect x="2029.5" y="1208.0" width="36.0" height="13.0" fill="#7a4a1a"/><text x="2047.5" y="1219.5" font-family="Liberation Mono" font-size="12.5" fill="#fff" textLength="24.0" lengthAdjust="spacingAndGlyphs" text-anchor="middle">LOAD</text><rect x="2076" y="1206.5" width="91" height="16" fill="#55aaff"/><text x="2121.5" y="1218.5" font-family="Liberation Mono" font-size="12.5" fill="#000" textLength="48.0" lengthAdjust="spacingAndGlyphs" text-anchor="middle">ISC_LOCK</text><rect x="2176" y="1206.5" width="29" height="16" fill="#404040"/><path d="M2176,1222.5 L2176,1206.5 L2205,1206.5 L2203.5,1208.0 L2177.5,1208.0 L2177.5,1221.0 Z" fill="#c0c0c0"/><rect x="2177.5" y="1208.0" width="26.0" height="13.0" fill="#8a8a8a"/><text x="2190.5" y="1219.5" font-family="Liberation Mono" font-size="12.5" fill="#000" textLength="18.0" lengthAdjust="spacingAndGlyphs" text-anchor="middle">all</text><rect x="2213" y="1206.5" width="64" height="16" fill="#202020"/><path d="M2213,1222.5 L2213,1206.5 L2277,1206.5 L2275.5,1208.0 L2214.5,1208.0 L2214.5,1221.0 Z" fill="#8a8a8a"/><rect x="2214.5" y="1208.0" width="61.0" height="13.0" fill="#4e4e4e"/><text x="2245.0" y="1219.5" font-family="Liberation Mono" font-size="12.5" fill="#fff" textLength="54.0" lengthAdjust="spacingAndGlyphs" text-anchor="middle">utilities</text><rect x="1970" y="1230" width="309" height="97" fill="#620a7e"/><rect x="1975" y="1235" width="83" height="19" fill="#3c3c3c"/><path d="M1975,1254 L1975,1235 L2058,1235 L2056.5,1236.5 L1976.5,1236.5 L1976.5,1252.5 Z" fill="#b4b4b4"/><rect x="1976.5" y="1236.5" width="80.0" height="16.0" fill="#7c7c7c"/><svg x="1976" y="1236" width="81" height="17"><text x="40.5" y="13.0" font-family="Liberation Mono" font-size="12.5" fill="#000" textLength="54.0" lengthAdjust="spacingAndGlyphs" text-anchor="middle">LASER_PWR</text></svg><rect x="2061" y="1235" width="147" height="19" fill="#5c96ff"/><text x="2134.5" y="1249.0" font-family="Liberation Mono" font-size="12.5" fill="#000" textLength="48.0" lengthAdjust="spacingAndGlyphs" text-anchor="middle">POWER_2W</text><rect x="2212" y="1235" width="11.5" height="19" fill="#2c9410"/><rect x="2225" y="1235" width="11.5" height="19" fill="#2c9410"/><rect x="2238" y="1235" width="11.5" height="19" fill="#2c9410"/><rect x="2251" y="1235" width="11.5" height="19" fill="#e8921a"/><rect x="2264" y="1235" width="11.5" height="19" fill="#6a6a6a"/><rect x="1975" y="1259" width="299" height="21" fill="#6c787e"/><path d="M1975,1280 L1975,1259 L2274,1259 L2272.5,1260.5 L1976.5,1260.5 L1976.5,1278.5 Z" fill="#e4ecef"/><rect x="1976.5" y="1260.5" width="296.0" height="18.0" fill="#b0c2ca"/><text x="2114.0" y="1274.0" font-family="Liberation Mono" font-size="12.5" fill="#000" textLength="48.0" lengthAdjust="spacingAndGlyphs" text-anchor="middle">POWER_2W</text><rect x="2254" y="1267" width="10" height="6" fill="#e8eef0"/><rect x="2255" y="1268" width="9" height="5" fill="#7a868c"/><rect x="2255" y="1268" width="8" height="4" fill="#c8d4d8"/><rect x="1975" y="1285" width="299" height="20" fill="#484848"/><rect x="1971" y="1309" width="49" height="16" fill="#6c787e"/><path d="M1971,1325 L1971,1309 L2020,1309 L2018.5,1310.5 L1972.5,1310.5 L1972.5,1323.5 Z" fill="#e8eef0"/><rect x="1972.5" y="1310.5" width="46.0" height="13.0" fill="#b8c8d0"/><svg x="1973" y="1309" width="30" height="11.5"><text x="1.0" y="13.5" font-family="Liberation Mono" font-size="12.5" fill="#000" textLength="24.0" lengthAdjust="spacingAndGlyphs">EXEC</text></svg><rect x="2005" y="1314" width="10" height="6" fill="#e8eef0"/><rect x="2006" y="1315" width="9" height="5" fill="#7a868c"/><rect x="2006" y="1315" width="8" height="4" fill="#c8d4d8"/><rect x="2028" y="1309" width="39" height="16" fill="#3a2008"/><path d="M2028,1325 L2028,1309 L2067,1309 L2065.5,1310.5 L2029.5,1310.5 L2029.5,1323.5 Z" fill="#b08050"/><rect x="2029.5" y="1310.5" width="36.0" height="13.0" fill="#7a4a1a"/><text x="2047.5" y="1322.0" font-family="Liberation Mono" font-size="12.5" fill="#fff" textLength="24.0" lengthAdjust="spacingAndGlyphs" text-anchor="middle">LOAD</text><rect x="2076" y="1309" width="91" height="16" fill="#55aaff"/><text x="2121.5" y="1321.0" font-family="Liberation Mono" font-size="12.5" fill="#000" textLength="48.0" lengthAdjust="spacingAndGlyphs" text-anchor="middle">ISC_LOCK</text><rect x="2176" y="1309" width="29" height="16" fill="#404040"/><path d="M2176,1325 L2176,1309 L2205,1309 L2203.5,1310.5 L2177.5,1310.5 L2177.5,1323.5 Z" fill="#c0c0c0"/><rect x="2177.5" y="1310.5" width="26.0" height="13.0" fill="#8a8a8a"/><text x="2190.5" y="1322.0" font-family="Liberation Mono" font-size="12.5" fill="#000" textLength="18.0" lengthAdjust="spacingAndGlyphs" text-anchor="middle">all</text><rect x="2213" y="1309" width="64" height="16" fill="#202020"/><path d="M2213,1325 L2213,1309 L2277,1309 L2275.5,1310.5 L2214.5,1310.5 L2214.5,1323.5 Z" fill="#8a8a8a"/><rect x="2214.5" y="1310.5" width="61.0" height="13.0" fill="#4e4e4e"/><text x="2245.0" y="1322.0" font-family="Liberation Mono" font-size="12.5" fill="#fff" textLength="54.0" lengthAdjust="spacingAndGlyphs" text-anchor="middle">utilities</text><rect x="2078" y="1336" width="88" height="17" fill="#3c3c3c"/><path d="M2078,1353 L2078,1336 L2166,1336 L2164.5,1337.5 L2079.5,1337.5 L2079.5,1351.5 Z" fill="#b4b4b4"/><rect x="2079.5" y="1337.5" width="85.0" height="14.0" fill="#7c7c7c"/><text x="2122.0" y="1349.0" font-family="Liberation Mono" font-size="12.5" fill="#000" textLength="78.0" lengthAdjust="spacingAndGlyphs" text-anchor="middle">LASER_PWR All</text><rect x="2286" y="1127" width="309" height="79" fill="#2a5592"/><rect x="2291" y="1132" width="83" height="19" fill="#3c3c3c"/><path d="M2291,1151 L2291,1132 L2374,1132 L2372.5,1133.5 L2292.5,1133.5 L2292.5,1149.5 Z" fill="#b4b4b4"/><rect x="2292.5" y="1133.5" width="80.0" height="16.0" fill="#7c7c7c"/><svg x="2292" y="1133" width="81" height="17"></svg><rect x="2377" y="1132" width="147" height="19" fill="#5c96ff"/><rect x="2528" y="1132" width="11.5" height="19" fill="#2c9410"/><rect x="2541" y="1132" width="11.5" height="19" fill="#2c9410"/><rect x="2554" y="1132" width="11.5" height="19" fill="#2c9410"/><rect x="2567" y="1132" width="11.5" height="19" fill="#e8921a"/><rect x="2580" y="1132" width="11.5" height="19" fill="#6a6a6a"/><rect x="2291" y="1156" width="299" height="21" fill="#6c787e"/><path d="M2291,1177 L2291,1156 L2590,1156 L2588.5,1157.5 L2292.5,1157.5 L2292.5,1175.5 Z" fill="#e4ecef"/><rect x="2292.5" y="1157.5" width="296.0" height="18.0" fill="#b0c2ca"/><rect x="2570" y="1164" width="10" height="6" fill="#e8eef0"/><rect x="2571" y="1165" width="9" height="5" fill="#7a868c"/><rect x="2571" y="1165" width="8" height="4" fill="#c8d4d8"/><rect x="2291" y="1182" width="299" height="20" fill="#484848"/><rect x="2287" y="1208" width="49" height="16" fill="#6c787e"/><path d="M2287,1224 L2287,1208 L2336,1208 L2334.5,1209.5 L2288.5,1209.5 L2288.5,1222.5 Z" fill="#e8eef0"/><rect x="2288.5" y="1209.5" width="46.0" height="13.0" fill="#b8c8d0"/><svg x="2289" y="1208" width="30" height="11.5"><text x="1.0" y="13.5" font-family="Liberation Mono" font-size="12.5" fill="#000" textLength="24.0" lengthAdjust="spacingAndGlyphs">EXEC</text></svg><rect x="2321" y="1213" width="10" height="6" fill="#e8eef0"/><rect x="2322" y="1214" width="9" height="5" fill="#7a868c"/><rect x="2322" y="1214" width="8" height="4" fill="#c8d4d8"/><rect x="2344" y="1208" width="39" height="16" fill="#3a2008"/><path d="M2344,1224 L2344,1208 L2383,1208 L2381.5,1209.5 L2345.5,1209.5 L2345.5,1222.5 Z" fill="#b08050"/><rect x="2345.5" y="1209.5" width="36.0" height="13.0" fill="#7a4a1a"/><text x="2363.5" y="1221.0" font-family="Liberation Mono" font-size="12.5" fill="#fff" textLength="24.0" lengthAdjust="spacingAndGlyphs" text-anchor="middle">LOAD</text><rect x="2392" y="1208" width="91" height="16" fill="#55aaff"/><rect x="2492" y="1208" width="29" height="16" fill="#404040"/><path d="M2492,1224 L2492,1208 L2521,1208 L2519.5,1209.5 L2493.5,1209.5 L2493.5,1222.5 Z" fill="#c0c0c0"/><rect x="2493.5" y="1209.5" width="26.0" height="13.0" fill="#8a8a8a"/><text x="2506.5" y="1221.0" font-family="Liberation Mono" font-size="12.5" fill="#000" textLength="18.0" lengthAdjust="spacingAndGlyphs" text-anchor="middle">all</text><rect x="2529" y="1208" width="64" height="16" fill="#202020"/><path d="M2529,1224 L2529,1208 L2593,1208 L2591.5,1209.5 L2530.5,1209.5 L2530.5,1222.5 Z" fill="#8a8a8a"/><rect x="2530.5" y="1209.5" width="61.0" height="13.0" fill="#4e4e4e"/><text x="2561.0" y="1221.0" font-family="Liberation Mono" font-size="12.5" fill="#fff" textLength="54.0" lengthAdjust="spacingAndGlyphs" text-anchor="middle">utilities</text><rect x="2286" y="1230" width="309" height="97" fill="#620a7e"/><rect x="2291" y="1235" width="83" height="19" fill="#3c3c3c"/><path d="M2291,1254 L2291,1235 L2374,1235 L2372.5,1236.5 L2292.5,1236.5 L2292.5,1252.5 Z" fill="#b4b4b4"/><rect x="2292.5" y="1236.5" width="80.0" height="16.0" fill="#7c7c7c"/><svg x="2292" y="1236" width="81" height="17"><text x="40.5" y="13.0" font-family="Liberation Mono" font-size="12.5" fill="#000" textLength="48.0" lengthAdjust="spacingAndGlyphs" text-anchor="middle">SEI_CONF</text></svg><rect x="2377" y="1235" width="147" height="19" fill="#5c96ff"/><text x="2450.5" y="1249.0" font-family="Liberation Mono" font-size="12.5" fill="#000" textLength="84.0" lengthAdjust="spacingAndGlyphs" text-anchor="middle">SC_OFF_NOBRSXY</text><rect x="2528" y="1235" width="11.5" height="19" fill="#2c9410"/><rect x="2541" y="1235" width="11.5" height="19" fill="#2c9410"/><rect x="2554" y="1235" width="11.5" height="19" fill="#2c9410"/><rect x="2567" y="1235" width="11.5" height="19" fill="#e8921a"/><rect x="2580" y="1235" width="11.5" height="19" fill="#6a6a6a"/><rect x="2291" y="1259" width="299" height="21" fill="#6c787e"/><path d="M2291,1280 L2291,1259 L2590,1259 L2588.5,1260.5 L2292.5,1260.5 L2292.5,1278.5 Z" fill="#e4ecef"/><rect x="2292.5" y="1260.5" width="296.0" height="18.0" fill="#b0c2ca"/><text x="2430.0" y="1274.0" font-family="Liberation Mono" font-size="12.5" fill="#000" textLength="84.0" lengthAdjust="spacingAndGlyphs" text-anchor="middle">SC_OFF_NOBRSXY</text><rect x="2570" y="1267" width="10" height="6" fill="#e8eef0"/><rect x="2571" y="1268" width="9" height="5" fill="#7a868c"/><rect x="2571" y="1268" width="8" height="4" fill="#c8d4d8"/><rect x="2291" y="1285" width="299" height="20" fill="#484848"/><rect x="2287" y="1309" width="49" height="16" fill="#6c787e"/><path d="M2287,1325 L2287,1309 L2336,1309 L2334.5,1310.5 L2288.5,1310.5 L2288.5,1323.5 Z" fill="#e8eef0"/><rect x="2288.5" y="1310.5" width="46.0" height="13.0" fill="#b8c8d0"/><svg x="2289" y="1309" width="30" height="11.5"><text x="1.0" y="13.5" font-family="Liberation Mono" font-size="12.5" fill="#000" textLength="24.0" lengthAdjust="spacingAndGlyphs">EXEC</text></svg><rect x="2321" y="1314" width="10" height="6" fill="#e8eef0"/><rect x="2322" y="1315" width="9" height="5" fill="#7a868c"/><rect x="2322" y="1315" width="8" height="4" fill="#c8d4d8"/><rect x="2344" y="1309" width="39" height="16" fill="#3a2008"/><path d="M2344,1325 L2344,1309 L2383,1309 L2381.5,1310.5 L2345.5,1310.5 L2345.5,1323.5 Z" fill="#b08050"/><rect x="2345.5" y="1310.5" width="36.0" height="13.0" fill="#7a4a1a"/><text x="2363.5" y="1322.0" font-family="Liberation Mono" font-size="12.5" fill="#fff" textLength="24.0" lengthAdjust="spacingAndGlyphs" text-anchor="middle">LOAD</text><rect x="2392" y="1309" width="91" height="16" fill="#55aaff"/><text x="2437.5" y="1321.0" font-family="Liberation Mono" font-size="12.5" fill="#000" textLength="42.0" lengthAdjust="spacingAndGlyphs" text-anchor="middle">SEI_ENV</text><rect x="2492" y="1309" width="29" height="16" fill="#404040"/><path d="M2492,1325 L2492,1309 L2521,1309 L2519.5,1310.5 L2493.5,1310.5 L2493.5,1323.5 Z" fill="#c0c0c0"/><rect x="2493.5" y="1310.5" width="26.0" height="13.0" fill="#8a8a8a"/><text x="2506.5" y="1322.0" font-family="Liberation Mono" font-size="12.5" fill="#000" textLength="18.0" lengthAdjust="spacingAndGlyphs" text-anchor="middle">all</text><rect x="2529" y="1309" width="64" height="16" fill="#202020"/><path d="M2529,1325 L2529,1309 L2593,1309 L2591.5,1310.5 L2530.5,1310.5 L2530.5,1323.5 Z" fill="#8a8a8a"/><rect x="2530.5" y="1310.5" width="61.0" height="13.0" fill="#4e4e4e"/><text x="2561.0" y="1322.0" font-family="Liberation Mono" font-size="12.5" fill="#fff" textLength="54.0" lengthAdjust="spacingAndGlyphs" text-anchor="middle">utilities</text><rect x="2608" y="1148" width="309" height="97" fill="#620a7e"/><rect x="2613" y="1153" width="83" height="19" fill="#3c3c3c"/><path d="M2613,1172 L2613,1153 L2696,1153 L2694.5,1154.5 L2614.5,1154.5 L2614.5,1170.5 Z" fill="#b4b4b4"/><rect x="2614.5" y="1154.5" width="80.0" height="16.0" fill="#7c7c7c"/><svg x="2614" y="1154" width="81" height="17"></svg><rect x="2699" y="1153" width="147" height="19" fill="#5c96ff"/><rect x="2850" y="1153" width="11.5" height="19" fill="#2c9410"/><rect x="2863" y="1153" width="11.5" height="19" fill="#2c9410"/><rect x="2876" y="1153" width="11.5" height="19" fill="#2c9410"/><rect x="2889" y="1153" width="11.5" height="19" fill="#e8921a"/><rect x="2902" y="1153" width="11.5" height="19" fill="#6a6a6a"/><rect x="2613" y="1177" width="299" height="21" fill="#6c787e"/><path d="M2613,1198 L2613,1177 L2912,1177 L2910.5,1178.5 L2614.5,1178.5 L2614.5,1196.5 Z" fill="#e4ecef"/><rect x="2614.5" y="1178.5" width="296.0" height="18.0" fill="#b0c2ca"/><rect x="2892" y="1185" width="10" height="6" fill="#e8eef0"/><rect x="2893" y="1186" width="9" height="5" fill="#7a868c"/><rect x="2893" y="1186" width="8" height="4" fill="#c8d4d8"/><rect x="2613" y="1203" width="299" height="20" fill="#484848"/><rect x="2609" y="1227" width="49" height="16" fill="#6c787e"/><path d="M2609,1243 L2609,1227 L2658,1227 L2656.5,1228.5 L2610.5,1228.5 L2610.5,1241.5 Z" fill="#e8eef0"/><rect x="2610.5" y="1228.5" width="46.0" height="13.0" fill="#b8c8d0"/><svg x="2611" y="1227" width="30" height="11.5"><text x="1.0" y="13.5" font-family="Liberation Mono" font-size="12.5" fill="#000" textLength="24.0" lengthAdjust="spacingAndGlyphs">EXEC</text></svg><rect x="2643" y="1232" width="10" height="6" fill="#e8eef0"/><rect x="2644" y="1233" width="9" height="5" fill="#7a868c"/><rect x="2644" y="1233" width="8" height="4" fill="#c8d4d8"/><rect x="2666" y="1227" width="39" height="16" fill="#3a2008"/><path d="M2666,1243 L2666,1227 L2705,1227 L2703.5,1228.5 L2667.5,1228.5 L2667.5,1241.5 Z" fill="#b08050"/><rect x="2667.5" y="1228.5" width="36.0" height="13.0" fill="#7a4a1a"/><text x="2685.5" y="1240.0" font-family="Liberation Mono" font-size="12.5" fill="#fff" textLength="24.0" lengthAdjust="spacingAndGlyphs" text-anchor="middle">LOAD</text><rect x="2714" y="1227" width="91" height="16" fill="#55aaff"/><text x="2759.5" y="1239.0" font-family="Liberation Mono" font-size="12.5" fill="#000" textLength="48.0" lengthAdjust="spacingAndGlyphs" text-anchor="middle">ISC_LOCK</text><rect x="2814" y="1227" width="29" height="16" fill="#404040"/><path d="M2814,1243 L2814,1227 L2843,1227 L2841.5,1228.5 L2815.5,1228.5 L2815.5,1241.5 Z" fill="#c0c0c0"/><rect x="2815.5" y="1228.5" width="26.0" height="13.0" fill="#8a8a8a"/><text x="2828.5" y="1240.0" font-family="Liberation Mono" font-size="12.5" fill="#000" textLength="18.0" lengthAdjust="spacingAndGlyphs" text-anchor="middle">all</text><rect x="2851" y="1227" width="64" height="16" fill="#202020"/><path d="M2851,1243 L2851,1227 L2915,1227 L2913.5,1228.5 L2852.5,1228.5 L2852.5,1241.5 Z" fill="#8a8a8a"/><rect x="2852.5" y="1228.5" width="61.0" height="13.0" fill="#4e4e4e"/><text x="2883.0" y="1240.0" font-family="Liberation Mono" font-size="12.5" fill="#fff" textLength="54.0" lengthAdjust="spacingAndGlyphs" text-anchor="middle">utilities</text><rect x="2607.5" y="1251.5" width="270" height="100" fill="#e6921a" stroke="#000" stroke-width="1"/><rect x="2702" y="1259" width="81" height="21" fill="#202020"/><path d="M2702,1280 L2702,1259 L2783,1259 L2781.5,1260.5 L2703.5,1260.5 L2703.5,1278.5 Z" fill="#909090"/><rect x="2703.5" y="1260.5" width="78.0" height="18.0" fill="#505050"/><text x="2742.5" y="1274.0" font-family="Liberation Mono" font-size="12.5" fill="#fff" textLength="54.0" lengthAdjust="spacingAndGlyphs" text-anchor="middle">NOT READY</text><text x="2625.0" y="1310.0" font-family="Liberation Mono" font-size="12.5" fill="#000" textLength="30.0" lengthAdjust="spacingAndGlyphs">NODES</text><rect x="2659" y="1295" width="50" height="20" fill="#484848"/><text x="2684.0" y="1310.0" font-family="Liberation Mono" font-size="12.5" fill="#c8c8c8" textLength="18.0" lengthAdjust="spacingAndGlyphs" text-anchor="middle">128</text><text x="2725.0" y="1310.0" font-family="Liberation Mono" font-size="12.5" fill="#000" textLength="36.0" lengthAdjust="spacingAndGlyphs">NOT OK</text><rect x="2765" y="1295" width="50" height="20" fill="#484848"/><text x="2788.0" y="1310.0" font-family="Liberation Mono" font-size="12.5" fill="#f8f040" textLength="12.0" lengthAdjust="spacingAndGlyphs" text-anchor="middle">57</text><rect x="2839" y="1295" width="31" height="21" fill="#404040"/><path d="M2839,1316 L2839,1295 L2870,1295 L2868.5,1296.5 L2840.5,1296.5 L2840.5,1314.5 Z" fill="#c8c8c8"/><rect x="2840.5" y="1296.5" width="28.0" height="18.0" fill="#8a8a8a"/><text x="2854.5" y="1310.0" font-family="Liberation Mono" font-size="12.5" fill="#000" textLength="24.0" lengthAdjust="spacingAndGlyphs" text-anchor="middle">list</text><rect x="2616" y="1322" width="220" height="20" fill="#484848"/><text x="2620.0" y="1337.0" font-family="Liberation Mono" font-size="12.5" fill="#f8f040" textLength="156.0" lengthAdjust="spacingAndGlyphs">SEI_HAM1: has notification</text><rect x="2839" y="1322" width="31" height="20" fill="#404040"/><path d="M2839,1342 L2839,1322 L2870,1322 L2868.5,1323.5 L2840.5,1323.5 L2840.5,1340.5 Z" fill="#c8c8c8"/><rect x="2840.5" y="1323.5" width="28.0" height="17.0" fill="#8a8a8a"/><text x="2854.5" y="1337.0" font-family="Liberation Mono" font-size="12.5" fill="#000" textLength="18.0" lengthAdjust="spacingAndGlyphs" text-anchor="middle">all</text><rect x="2882.5" y="1251.5" width="118" height="100" fill="#faf040" stroke="#000" stroke-width="1"/><rect x="2901" y="1259" width="81" height="21" fill="#202020"/><path d="M2901,1280 L2901,1259 L2982,1259 L2980.5,1260.5 L2902.5,1260.5 L2902.5,1278.5 Z" fill="#909090"/><rect x="2902.5" y="1260.5" width="78.0" height="18.0" fill="#505050"/><text x="2941.5" y="1274.0" font-family="Liberation Mono" font-size="12.5" fill="#fff" textLength="60.0" lengthAdjust="spacingAndGlyphs" text-anchor="middle">NOT INTENT</text><rect x="2891" y="1292" width="100" height="24" fill="#1a1a1a"/><path d="M2891,1316 L2891,1292 L2991,1292 L2989.5,1293.5 L2892.5,1293.5 L2892.5,1314.5 Z" fill="#909090"/><rect x="2892.5" y="1293.5" width="97.0" height="21.0" fill="#484848"/><text x="2941.0" y="1309.0" font-family="Liberation Mono" font-size="12.5" fill="#20e020" textLength="42.0" lengthAdjust="spacingAndGlyphs" text-anchor="middle">OBSERVE</text><rect x="2891" y="1320" width="100" height="24" fill="#1a1a1a"/><path d="M2891,1344 L2891,1320 L2991,1320 L2989.5,1321.5 L2892.5,1321.5 L2892.5,1342.5 Z" fill="#909090"/><rect x="2892.5" y="1321.5" width="97.0" height="21.0" fill="#484848"/><text x="2941.0" y="1337.0" font-family="Liberation Mono" font-size="12.5" fill="#f0a020" textLength="60.0" lengthAdjust="spacingAndGlyphs" text-anchor="middle">COMMISSION</text><path d="M3003,1297 L3027,1297 M3003,1307 L3027,1307 M3006,1319 L3024,1285" stroke="#000" stroke-width="4.5"/><rect x="3029.5" y="1251.5" width="100" height="100" fill="#e6921a" stroke="#000" stroke-width="1"/><rect x="3039" y="1259" width="81" height="21" fill="#202020"/><path d="M3039,1280 L3039,1259 L3120,1259 L3118.5,1260.5 L3040.5,1260.5 L3040.5,1278.5 Z" fill="#909090"/><rect x="3040.5" y="1260.5" width="78.0" height="18.0" fill="#505050"/><text x="3079.5" y="1274.0" font-family="Liberation Mono" font-size="12.5" fill="#fff" textLength="66.0" lengthAdjust="spacingAndGlyphs" text-anchor="middle">NOT OBSERVE</text><rect x="2964" y="1191" width="158" height="30" fill="#2a5592"/><rect x="2969" y="1196" width="83" height="19" fill="#3c3c3c"/><path d="M2969,1215 L2969,1196 L3052,1196 L3050.5,1197.5 L2970.5,1197.5 L2970.5,1213.5 Z" fill="#b4b4b4"/><rect x="2970.5" y="1197.5" width="80.0" height="16.0" fill="#7c7c7c"/><svg x="2970" y="1197" width="81" height="17"><text x="-4.0" y="13.0" font-family="Liberation Mono" font-size="12.5" fill="#000" textLength="84.0" lengthAdjust="spacingAndGlyphs">LOSS_SHUTTER_C</text></svg><rect x="3055" y="1196" width="11.5" height="19" fill="#2c9410"/><rect x="3068" y="1196" width="11.5" height="19" fill="#e8921a"/><rect x="3081" y="1196" width="11.5" height="19" fill="#2c9410"/><rect x="3094" y="1196" width="11.5" height="19" fill="#e8921a"/><rect x="3107" y="1196" width="11.5" height="19" fill="#6a6a6a"/><rect x="3138" y="1190" width="13" height="138" fill="#a4a4a4"/><text x="3153.0" y="1203.0" font-family="Liberation Mono" font-size="12.5" fill="#000" textLength="24.0" lengthAdjust="spacingAndGlyphs">PRMI</text><text x="3153.0" y="1230.0" font-family="Liberation Mono" font-size="12.5" fill="#000" textLength="24.0" lengthAdjust="spacingAndGlyphs">MICH</text><text x="3153.0" y="1257.0" font-family="Liberation Mono" font-size="12.5" fill="#000" textLength="12.0" lengthAdjust="spacingAndGlyphs">IR</text><text x="3153.0" y="1294.0" font-family="Liberation Mono" font-size="12.5" fill="#000" textLength="30.0" lengthAdjust="spacingAndGlyphs">READY</text><text x="3153.0" y="1302.0" font-family="Liberation Mono" font-size="12.5" fill="#000" textLength="24.0" lengthAdjust="spacingAndGlyphs">DOWN</text><text x="3153.0" y="1310.0" font-family="Liberation Mono" font-size="12.5" fill="#000" textLength="24.0" lengthAdjust="spacingAndGlyphs">PREP</text><text x="3153.0" y="1330.0" font-family="Liberation Mono" font-size="12.5" fill="#000" textLength="30.0" lengthAdjust="spacingAndGlyphs">ALIGN</text></svg><div style="position:absolute;left:2058px;top:742px;width:1166px;height:447px;background:#efefef;border-bottom:1px solid #b0b0b0;box-sizing:border-box"></div><div style="position:absolute;left:2059px;top:742px;width:4px;height:447px;background:#f8f6f4;border-left:1px solid #a0a0a0;box-sizing:border-box"></div><div style="position:absolute;left:2086px;top:742px;width:10px;height:439px;background:linear-gradient(90deg,#ececec,#b8bcc6)"></div><div style="position:absolute;left:2096px;top:742px;width:4px;height:439px;background:#6a86c8"></div><div style="position:absolute;left:2100px;top:742px;width:1124px;height:439px;background:#fff"></div><div style="position:absolute;left:2110px;top:742px;width:1114px;height:382px;background:#ffcc99;border-bottom-left-radius:5px"></div><div style="position:absolute;left:2120px;top:758.5px;white-space:nowrap;font-family:'Liberation Sans',sans-serif;font-size:14px;line-height:18px;color:#141414;"><span style="text-decoration:line-through">I wonder if using one diverter at the edge of the table will catch both beams.</span> (That's not a good idea as we might want to use in-air POP WFS if in-vac one doesn't work well.)</div><div style="position:absolute;left:2110px;top:830px;width:1114px;height:24px;background:#ececec"></div><div style="position:absolute;left:2120px;top:832.5px;white-space:nowrap;font-family:'Liberation Sans',sans-serif;font-size:14px;line-height:18px;color:#141414;"><b>Images attached to this comment</b></div><svg style="position:absolute;left:2120px;top:857.5px;border:1px solid #c8ccd8;box-sizing:border-box" width="58" height="61" viewBox="0 0 58 61"><g filter="url(#thb)"><rect width="58" height="61" fill="#f6f6f8"/><path d="M0,14 L40,60 M8,0 L30,61 M20,0 L50,61" stroke="#d8d8e0" stroke-width="1"/><path d="M4,22 L55,61 L55,30" fill="none" stroke="#9090a0" stroke-width="1"/><path d="M4,28 L58,50 L58,61 L4,61 Z" fill="#e8e8ec"/><path d="M8,32 L10,53 L16,53" stroke="#3a46d8" stroke-width="2.2" fill="none"/><path d="M14,33 L24,27 L30,38 L20,45 Z" stroke="#c04040" stroke-width="1.5" fill="none"/><path d="M30,3 L30,58 M33,3 L33,55" stroke="#70e0e0" stroke-width="1.2"/><path d="M6,40 L48,40" stroke="#50c050" stroke-width="1.2"/><path d="M44,38 L50,32 L54,42" stroke="#d8d020" stroke-width="3" fill="none"/><path d="M34,52 L54,52" stroke="#5070e0" stroke-width="2"/></g></svg><svg style="position:absolute;left:2187px;top:857.5px;border:1px solid #c8ccd8;box-sizing:border-box" width="46" height="61" viewBox="0 0 46 61"><g filter="url(#thb)"><rect width="46" height="61" fill="#5a5650"/><rect x="0" y="0" width="22" height="28" fill="#2e2a26"/><rect x="24" y="0" width="22" height="24" fill="#c8c4bc"/><rect x="22" y="28" width="24" height="33" fill="#7a7872"/><path d="M6,22 L40,20 M20,24 L18,61" stroke="#40c0b0" stroke-width="1.5"/><path d="M6,38 L20,38" stroke="#d0a030" stroke-width="1.2"/><rect x="0" y="50" width="22" height="11" fill="#3a2a20"/></g></svg><svg style="position:absolute;left:2243px;top:857.5px;border:1px solid #c8ccd8;box-sizing:border-box" width="80" height="61" viewBox="0 0 80 61"><g filter="url(#thb)"><rect width="80" height="61" fill="#8e8a80"/><path d="M0,0 L80,0 L80,8 L0,14 Z" fill="#4a4640"/><circle cx="10" cy="16" r="8" fill="#2a3028"/><path d="M0,38 L30,61 L0,61 Z" fill="#2a2826"/><path d="M40,44 C45,50 50,61 50,61 M55,42 C62,50 65,61 65,61" stroke="#7a4020" stroke-width="2" fill="none"/><path d="M20,10 L80,40 M10,25 L70,58" stroke="#b0aca0" stroke-width="1"/><rect x="58" y="40" width="22" height="21" fill="#a09a90"/></g></svg><svg style="position:absolute;left:2333px;top:857.5px;border:1px solid #c8ccd8;box-sizing:border-box" width="46" height="61" viewBox="0 0 46 61"><g filter="url(#thb)"><rect width="46" height="61" fill="#7c7870"/><rect x="0" y="0" width="46" height="8" fill="#3a3832"/><path d="M30,0 L46,0 L46,18 Z" fill="#2a2824"/><path d="M6,20 L20,61 M18,14 L34,61 M30,10 L46,50" stroke="#a8a49a" stroke-width="1.2"/><rect x="22" y="30" width="6" height="12" fill="#504c46"/></g></svg><svg style="position:absolute;left:2390px;top:857.5px;border:1px solid #c8ccd8;box-sizing:border-box" width="45" height="61" viewBox="0 0 45 61"><g filter="url(#thb)"><rect width="45" height="61" fill="#6a665e"/><rect x="0" y="0" width="45" height="14" fill="#aaa69c"/><path d="M18,0 L32,0 L32,18 L22,20 Z" fill="#d8d6d0"/><rect x="0" y="14" width="14" height="30" fill="#2e3228"/><path d="M4,24 L14,30 L10,36 Z" fill="#80d060"/><rect x="16" y="26" width="10" height="8" fill="#e08030"/><rect x="0" y="50" width="45" height="11" fill="#4a3a30"/></g></svg><svg style="position:absolute;left:2446px;top:857.5px;border:1px solid #c8ccd8;box-sizing:border-box" width="45" height="61" viewBox="0 0 45 61"><g filter="url(#thb)"><rect width="45" height="61" fill="#b4b2ae"/><circle cx="14" cy="14" r="11" fill="#1e1e20"/><path d="M22,2 C10,10 10,34 26,41 L45,42" stroke="#e8e8e6" stroke-width="2.5" fill="none"/><path d="M0,22 L20,28 L30,36 L20,42 L0,40 Z" fill="#e2e0dc"/><rect x="26" y="18" width="10" height="9" fill="#e88838"/><rect x="0" y="52" width="45" height="9" fill="#121212"/><path d="M36,61 L40,46 L45,50 L45,61 Z" fill="#d0d0d0"/></g></svg><svg style="position:absolute;left:2502px;top:857.5px;border:1px solid #c8ccd8;box-sizing:border-box" width="80" height="61" viewBox="0 0 80 61"><g filter="url(#thb)"><rect width="80" height="61" fill="#0c0c0a"/><rect x="6" y="22" width="50" height="10" fill="#5e5a50"/><rect x="6" y="36" width="60" height="12" fill="#3a3832"/><rect x="0" y="48" width="48" height="8" fill="#6a6862"/><path d="M44,30 L58,26 L72,52 L80,61 L44,61 Z" fill="#aeaca4"/><rect x="42" y="18" width="8" height="12" fill="#e0d0c0"/><path d="M70,0 C80,20 80,40 74,61" stroke="#3a3a36" stroke-width="2" fill="none"/></g></svg><svg style="position:absolute;left:2592px;top:857.5px;border:1px solid #c8ccd8;box-sizing:border-box" width="82" height="61" viewBox="0 0 82 61"><g filter="url(#thb)"><rect width="82" height="61" fill="#101010"/><path d="M4,0 C-2,20 0,45 8,61" stroke="#6a9a9a" stroke-width="4" fill="none"/><rect x="18" y="18" width="40" height="16" fill="#504c46"/><rect x="14" y="36" width="44" height="14" fill="#2a2826"/><rect x="40" y="18" width="12" height="18" fill="#e8e4dc"/><rect x="42" y="22" width="8" height="6" fill="#e07830"/><path d="M46,40 L66,30 L82,44 L82,61 L50,61 Z" fill="#aca8a0"/></g></svg><svg width="0" height="0" style="position:absolute"><defs><filter id="thb"><feGaussianBlur stdDeviation="0.7"/></filter></defs></svg><div style="position:absolute;left:2110px;top:926px;width:1114px;height:1px;background:#dcdcdc"></div><div style="position:absolute;left:2110px;top:952px;width:1114px;height:1px;background:#dcdcdc"></div><div style="position:absolute;left:2110px;top:1076px;width:1114px;height:1px;background:#dcdcdc"></div><div style="position:absolute;left:2110px;top:1102px;width:1114px;height:1px;background:#dcdcdc"></div><div style="position:absolute;left:2120px;top:930px;white-space:nowrap;font-family:'Liberation Sans',sans-serif;font-size:14px;line-height:18px;color:#141414;"><b>keita.kawabe@LIGO.ORG</b> - 23:16, Friday 09 May 2025 (84345)</div><div style="position:absolute;left:2120px;top:970.5px;white-space:nowrap;font-family:'Liberation Sans',sans-serif;font-size:14px;line-height:18px;color:#141414;">Distance from POP air steering mirror (M16) to the top POP periscope mirror in ISCT1 was: 34 1/4 + 30 1/4 &nbsp;= <b>64.5"</b></div><div style="position:absolute;left:2120px;top:1005.5px;white-space:nowrap;font-family:'Liberation Sans',sans-serif;font-size:14px;line-height:18px;color:#141414;">Distance from REFL air steering mirror (M7) to the top REFL periscope mirror in ISCT1 was: 13 3/4 + 30 + 31.5 = <b>75.25"</b></div><div style="position:absolute;left:2120px;top:1040px;white-space:nowrap;font-family:'Liberation Sans',sans-serif;font-size:14px;line-height:18px;color:#141414;">Measurement was done using long-ish ruler, but it wasn't long enough so we had to measure the distance in multiple segments. I'd say that the error bar of this is roughly +-3/4".</div><div style="position:absolute;left:2120px;top:1079.5px;white-space:nowrap;font-family:'Liberation Sans',sans-serif;font-size:14px;line-height:18px;color:#141414;"><b>jennifer.wright@LIGO.ORG</b> - 13:41, Wednesday 14 May 2025 (84394)EPO</div><div style="position:absolute;left:2110px;top:1139px;width:1114px;height:26px;background:#ff9933"></div><div style="position:absolute;left:2120px;top:1142.5px;white-space:nowrap;font-family:'Liberation Sans',sans-serif;font-size:14px;line-height:18px;color:#141414;"><b>H1 ISC (EPO)</b></div><div style="position:absolute;left:2110px;top:1165px;width:1114px;height:16px;background:#ffff99;overflow:hidden"><div style="position:absolute;left:10px;top:4.5px;white-space:nowrap;font-family:'Liberation Sans',sans-serif;font-size:14px;line-height:18px;color:#141414">camilla.compton@LIGO.ORG - posted 17:29, Thursday 08 May 2025 (84323)</div></div><div style="position:absolute;left:1629px;top:15px;width:1583px;height:728px;background:#f6f5f3;border:1px solid #9a9a9a;border-radius:4px 4px 0 0;box-sizing:border-box;overflow:hidden"><div style="height:28px;background:#dcd9d5;border-bottom:1px solid #c8c6c2"></div></div><div style="position:absolute;left:1629px;top:15px;width:1583px;text-align:center;font:bold 12px 'Liberation Sans',sans-serif;color:#2e3436;line-height:30px;letter-spacing:-0.1px"><span style="position:relative;left:-34.5px">IFO_ALIGN_COMPACTEST.adl</span></div><svg style="position:absolute;left:1634px;top:20px" width="22" height="22"><rect x="1" y="1" width="19" height="14" rx="1" fill="#cfd6dc" stroke="#6a7078"/><rect x="3" y="3" width="15" height="10" fill="#2a5ab0"/><path d="M6,18 L15,18" stroke="#7a7a7a" stroke-width="2"/></svg><svg style="position:absolute;left:3100px;top:20px" width="110" height="22" viewBox="3100 20 110 22"><path d="M3124.2000000000003,33.5 L3128.4,29.3 L3132.6,33.5" stroke="#1e2224" stroke-width="2" fill="none"/><path d="M3146.9,34.0 L3155.9,34.0" stroke="#1e2224" stroke-width="2" fill="none"/><rect x="3170.9" y="27.0" width="7.5" height="7.5" stroke="#1e2224" stroke-width="2" fill="none"/><path d="M3193.4,26.7 L3201.4,34.7 M3201.4,26.7 L3193.4,34.7" stroke="#1e2224" stroke-width="2" fill="none"/></svg><svg style="position:absolute;left:1633px;top:44px" width="1576" height="695" viewBox="1633 44 1576 695"><rect x="1633" y="44" width="1576" height="695" fill="#bbbbbb"/><g transform="translate(1639,51)"><rect x="0" y="0" width="169" height="133" fill="#686868" rx="1"/><rect x="4.7" y="4.7" width="159.6" height="123.6" fill="#bbbbbb"/><rect x="4" y="7" width="72" height="23" fill="#333333"/><path d="M4,30 L4,7 L76,7 L74.5,8.5 L5.5,8.5 L5.5,28.5 Z" fill="#8e8e8e"/><rect x="5.5" y="8.5" width="69.0" height="20.0" fill="#5e5e5e"/><path d="M26.1,21.0 V12.1 H34.5 V15.0" stroke="#ffffff" stroke-width="1.3" fill="none"/><rect x="30.1" y="15.1" width="8.4" height="9" stroke="#ffffff" stroke-width="1.3" fill="none"/><text x="38.5" y="22.5" font-family="Liberation Mono" font-size="12.5" fill="#ffffff" textLength="18.0" lengthAdjust="spacingAndGlyphs">IM1</text><text x="80.0" y="25.0" font-family="Liberation Mono" font-size="12.5" fill="#000" textLength="18.0" lengthAdjust="spacingAndGlyphs">PIT</text><text x="159.0" y="20.0" font-family="Liberation Mono" font-size="12.5" fill="#000" textLength="42.0" lengthAdjust="spacingAndGlyphs" text-anchor="end">ALIGNED</text><rect x="9" y="36" width="151" height="30" fill="#5c5c5c"/><text x="10.0" y="49.0" font-family="Liberation Mono" font-size="12.5" fill="#ffffff" textLength="48.0" lengthAdjust="spacingAndGlyphs">-60000.0</text><text x="83.5" y="49.0" font-family="Liberation Mono" font-size="12.5" fill="#ffffff" textLength="30.0" lengthAdjust="spacingAndGlyphs" text-anchor="middle">517.7</text><text x="158.5" y="49.0" font-family="Liberation Mono" font-size="12.5" fill="#ffffff" textLength="42.0" lengthAdjust="spacingAndGlyphs" text-anchor="end">60000.0</text><rect x="9" y="52" width="151" height="14" fill="#8e8e8e"/><path d="M9,66 L9,52 L160,52 L158,54 L11,54 L11,64 Z" fill="#333333"/><rect x="11" y="54" width="147" height="10" fill="#555555"/><rect x="70.0" y="54" width="30" height="10" fill="#333333"/><rect x="70.0" y="54" width="29" height="9" fill="#8e8e8e"/><rect x="71.0" y="55" width="27" height="7" fill="#5c5c5c"/><rect x="84.5" y="54" width="1" height="10" fill="#333333"/><rect x="85.5" y="54" width="1" height="10" fill="#8e8e8e"/><text x="89.0" y="83.0" font-family="Liberation Mono" font-size="12.5" fill="#000" textLength="18.0" lengthAdjust="spacingAndGlyphs" text-anchor="middle">YAW</text><rect x="9" y="92" width="151" height="30" fill="#5c5c5c"/><text x="10.0" y="105.0" font-family="Liberation Mono" font-size="12.5" fill="#ffffff" textLength="48.0" lengthAdjust="spacingAndGlyphs">-60000.0</text><text x="83.5" y="105.0" font-family="Liberation Mono" font-size="12.5" fill="#ffffff" textLength="36.0" lengthAdjust="spacingAndGlyphs" text-anchor="middle">-387.1</text><text x="158.5" y="105.0" font-family="Liberation Mono" font-size="12.5" fill="#ffffff" textLength="42.0" lengthAdjust="spacingAndGlyphs" text-anchor="end">60000.0</text><rect x="9" y="108" width="151" height="14" fill="#8e8e8e"/><path d="M9,122 L9,108 L160,108 L158,110 L11,110 L11,120 Z" fill="#333333"/><rect x="11" y="110" width="147" height="10" fill="#555555"/><rect x="69.1" y="110" width="30" height="10" fill="#333333"/><rect x="69.1" y="110" width="29" height="9" fill="#8e8e8e"/><rect x="70.1" y="111" width="27" height="7" fill="#5c5c5c"/><rect x="83.6" y="110" width="1" height="10" fill="#333333"/><rect x="84.6" y="110" width="1" height="10" fill="#8e8e8e"/></g><g transform="translate(1813,51)"><rect x="0" y="0" width="169" height="133" fill="#2d9a0e" rx="1"/><rect x="4.7" y="4.7" width="159.6" height="123.6" fill="#bbbbbb"/><rect x="4" y="7" width="72" height="23" fill="#145008"/><path d="M4,30 L4,7 L76,7 L74.5,8.5 L5.5,8.5 L5.5,28.5 Z" fill="#70c060"/><rect x="5.5" y="8.5" width="69.0" height="20.0" fill="#2c9210"/><path d="M26.1,21.0 V12.1 H34.5 V15.0" stroke="#ffffff" stroke-width="1.3" fill="none"/><rect x="30.1" y="15.1" width="8.4" height="9" stroke="#ffffff" stroke-width="1.3" fill="none"/><text x="38.5" y="22.5" font-family="Liberation Mono" font-size="12.5" fill="#ffffff" textLength="18.0" lengthAdjust="spacingAndGlyphs">MC3</text><text x="80.0" y="25.0" font-family="Liberation Mono" font-size="12.5" fill="#000" textLength="18.0" lengthAdjust="spacingAndGlyphs">PIT</text><text x="159.0" y="20.0" font-family="Liberation Mono" font-size="12.5" fill="#000" textLength="42.0" lengthAdjust="spacingAndGlyphs" text-anchor="end">ALIGNED</text><rect x="9" y="36" width="151" height="30" fill="#2c9210"/><text x="10.0" y="49.0" font-family="Liberation Mono" font-size="12.5" fill="#ffffff" textLength="42.0" lengthAdjust="spacingAndGlyphs">-6000.0</text><text x="83.5" y="49.0" font-family="Liberation Mono" font-size="12.5" fill="#ffffff" textLength="30.0" lengthAdjust="spacingAndGlyphs" text-anchor="middle">-16.9</text><text x="158.5" y="49.0" font-family="Liberation Mono" font-size="12.5" fill="#ffffff" textLength="36.0" lengthAdjust="spacingAndGlyphs" text-anchor="end">6000.0</text><rect x="9" y="52" width="151" height="14" fill="#70c060"/><path d="M9,66 L9,52 L160,52 L158,54 L11,54 L11,64 Z" fill="#145008"/><rect x="11" y="54" width="147" height="10" fill="#267a0e"/><rect x="69.3" y="54" width="30" height="10" fill="#145008"/><rect x="69.3" y="54" width="29" height="9" fill="#70c060"/><rect x="70.3" y="55" width="27" height="7" fill="#2c9210"/><rect x="83.8" y="54" width="1" height="10" fill="#145008"/><rect x="84.8" y="54" width="1" height="10" fill="#70c060"/><text x="89.0" y="83.0" font-family="Liberation Mono" font-size="12.5" fill="#000" textLength="18.0" lengthAdjust="spacingAndGlyphs" text-anchor="middle">YAW</text><rect x="9" y="92" width="151" height="30" fill="#2c9210"/><text x="10.0" y="105.0" font-family="Liberation Mono" font-size="12.5" fill="#ffffff" textLength="42.0" lengthAdjust="spacingAndGlyphs">-6000.0</text><text x="83.5" y="105.0" font-family="Liberation Mono" font-size="12.5" fill="#ffffff" textLength="42.0" lengthAdjust="spacingAndGlyphs" text-anchor="middle">-2513.6</text><text x="158.5" y="105.0" font-family="Liberation Mono" font-size="12.5" fill="#ffffff" textLength="36.0" lengthAdjust="spacingAndGlyphs" text-anchor="end">6000.0</text><rect x="9" y="108" width="151" height="14" fill="#70c060"/><path d="M9,122 L9,108 L160,108 L158,110 L11,110 L11,120 Z" fill="#145008"/><rect x="11" y="110" width="147" height="10" fill="#267a0e"/><rect x="45.0" y="110" width="30" height="10" fill="#145008"/><rect x="45.0" y="110" width="29" height="9" fill="#70c060"/><rect x="46.0" y="111" width="27" height="7" fill="#2c9210"/><rect x="59.5" y="110" width="1" height="10" fill="#145008"/><rect x="60.5" y="110" width="1" height="10" fill="#70c060"/></g><g transform="translate(2337,51)"><rect x="0" y="0" width="169" height="133" fill="#0000b4" rx="1"/><rect x="4.7" y="4.7" width="159.6" height="123.6" fill="#bbbbbb"/><rect x="4" y="7" width="72" height="23" fill="#000060"/><path d="M4,30 L4,7 L76,7 L74.5,8.5 L5.5,8.5 L5.5,28.5 Z" fill="#6a6ae8"/><rect x="5.5" y="8.5" width="69.0" height="20.0" fill="#0000b4"/><path d="M23.1,21.0 V12.1 H31.5 V15.0" stroke="#ffffff" stroke-width="1.3" fill="none"/><rect x="27.1" y="15.1" width="8.4" height="9" stroke="#ffffff" stroke-width="1.3" fill="none"/><text x="35.5" y="22.5" font-family="Liberation Mono" font-size="12.5" fill="#ffffff" textLength="24.0" lengthAdjust="spacingAndGlyphs">ETMY</text><text x="80.0" y="25.0" font-family="Liberation Mono" font-size="12.5" fill="#000" textLength="18.0" lengthAdjust="spacingAndGlyphs">PIT</text><rect x="115.5" y="7.5" width="48" height="19" fill="none" stroke="#e01010" stroke-width="1.6"/><svg x="116" y="8" width="47" height="18"><text x="0" y="12.5" font-family="Liberation Mono" font-size="12.5" textLength="48" lengthAdjust="spacingAndGlyphs">MISALIGN</text></svg><rect x="9" y="36" width="151" height="30" fill="#0000b4"/><text x="10.0" y="49.0" font-family="Liberation Mono" font-size="12.5" fill="#ffffff" textLength="36.0" lengthAdjust="spacingAndGlyphs">-600.0</text><text x="83.5" y="49.0" font-family="Liberation Mono" font-size="12.5" fill="#ffffff" textLength="30.0" lengthAdjust="spacingAndGlyphs" text-anchor="middle">154.4</text><text x="158.5" y="49.0" font-family="Liberation Mono" font-size="12.5" fill="#ffffff" textLength="30.0" lengthAdjust="spacingAndGlyphs" text-anchor="end">600.0</text><rect x="9" y="52" width="151" height="14" fill="#6a6ae8"/><path d="M9,66 L9,52 L160,52 L158,54 L11,54 L11,64 Z" fill="#000060"/><rect x="11" y="54" width="147" height="10" fill="#00009a"/><rect x="84.6" y="54" width="30" height="10" fill="#000060"/><rect x="84.6" y="54" width="29" height="9" fill="#6a6ae8"/><rect x="85.6" y="55" width="27" height="7" fill="#0000b4"/><rect x="99.1" y="54" width="1" height="10" fill="#000060"/><rect x="100.1" y="54" width="1" height="10" fill="#6a6ae8"/><text x="89.0" y="83.0" font-family="Liberation Mono" font-size="12.5" fill="#000" textLength="18.0" lengthAdjust="spacingAndGlyphs" text-anchor="middle">YAW</text><rect x="9" y="92" width="151" height="30" fill="#0000b4"/><text x="10.0" y="105.0" font-family="Liberation Mono" font-size="12.5" fill="#ffffff" textLength="36.0" lengthAdjust="spacingAndGlyphs">-600.0</text><text x="83.5" y="105.0" font-family="Liberation Mono" font-size="12.5" fill="#ffffff" textLength="36.0" lengthAdjust="spacingAndGlyphs" text-anchor="middle">-168.4</text><text x="158.5" y="105.0" font-family="Liberation Mono" font-size="12.5" fill="#ffffff" textLength="30.0" lengthAdjust="spacingAndGlyphs" text-anchor="end">600.0</text><rect x="9" y="108" width="151" height="14" fill="#6a6ae8"/><path d="M9,122 L9,108 L160,108 L158,110 L11,110 L11,120 Z" fill="#000060"/><rect x="11" y="110" width="147" height="10" fill="#00009a"/><rect x="53.1" y="110" width="30" height="10" fill="#000060"/><rect x="53.1" y="110" width="29" height="9" fill="#6a6ae8"/><rect x="54.1" y="111" width="27" height="7" fill="#0000b4"/><rect x="67.6" y="110" width="1" height="10" fill="#000060"/><rect x="68.6" y="110" width="1" height="10" fill="#6a6ae8"/></g><g transform="translate(2511,51)"><rect x="0" y="0" width="169" height="133" fill="#d4d4d4" rx="1"/><rect x="4.7" y="4.7" width="159.6" height="123.6" fill="#bbbbbb"/><rect x="4" y="7" width="72" height="23" fill="#909090"/><path d="M4,30 L4,7 L76,7 L74.5,8.5 L5.5,8.5 L5.5,28.5 Z" fill="#f4f4f4"/><rect x="5.5" y="8.5" width="69.0" height="20.0" fill="#d8d8d8"/><path d="M23.1,21.0 V12.1 H31.5 V15.0" stroke="#000000" stroke-width="1.3" fill="none"/><rect x="27.1" y="15.1" width="8.4" height="9" stroke="#000000" stroke-width="1.3" fill="none"/><text x="35.5" y="22.5" font-family="Liberation Mono" font-size="12.5" fill="#000000" textLength="24.0" lengthAdjust="spacingAndGlyphs">TMSY</text><text x="80.0" y="25.0" font-family="Liberation Mono" font-size="12.5" fill="#000" textLength="18.0" lengthAdjust="spacingAndGlyphs">PIT</text><text x="159.0" y="20.0" font-family="Liberation Mono" font-size="12.5" fill="#000" textLength="42.0" lengthAdjust="spacingAndGlyphs" text-anchor="end">ALIGNED</text><rect x="9" y="36" width="151" height="30" fill="#d8d8d8"/><text x="10.0" y="49.0" font-family="Liberation Mono" font-size="12.5" fill="#000000" textLength="36.0" lengthAdjust="spacingAndGlyphs">-600.0</text><text x="83.5" y="49.0" font-family="Liberation Mono" font-size="12.5" fill="#000000" textLength="24.0" lengthAdjust="spacingAndGlyphs" text-anchor="middle">75.7</text><text x="158.5" y="49.0" font-family="Liberation Mono" font-size="12.5" fill="#000000" textLength="30.0" lengthAdjust="spacingAndGlyphs" text-anchor="end">600.0</text><rect x="9" y="52" width="151" height="14" fill="#f4f4f4"/><path d="M9,66 L9,52 L160,52 L158,54 L11,54 L11,64 Z" fill="#909090"/><rect x="11" y="54" width="147" height="10" fill="#c8c8c8"/><rect x="76.9" y="54" width="30" height="10" fill="#909090"/><rect x="76.9" y="54" width="29" height="9" fill="#f4f4f4"/><rect x="77.9" y="55" width="27" height="7" fill="#d8d8d8"/><rect x="91.4" y="54" width="1" height="10" fill="#909090"/><rect x="92.4" y="54" width="1" height="10" fill="#f4f4f4"/><text x="89.0" y="83.0" font-family="Liberation Mono" font-size="12.5" fill="#000" textLength="18.0" lengthAdjust="spacingAndGlyphs" text-anchor="middle">YAW</text><rect x="9" y="92" width="151" height="30" fill="#d8d8d8"/><text x="10.0" y="105.0" font-family="Liberation Mono" font-size="12.5" fill="#000000" textLength="36.0" lengthAdjust="spacingAndGlyphs">-600.0</text><text x="83.5" y="105.0" font-family="Liberation Mono" font-size="12.5" fill="#000000" textLength="36.0" lengthAdjust="spacingAndGlyphs" text-anchor="middle">-262.7</text><text x="158.5" y="105.0" font-family="Liberation Mono" font-size="12.5" fill="#000000" textLength="30.0" lengthAdjust="spacingAndGlyphs" text-anchor="end">600.0</text><rect x="9" y="108" width="151" height="14" fill="#f4f4f4"/><path d="M9,122 L9,108 L160,108 L158,110 L11,110 L11,120 Z" fill="#909090"/><rect x="11" y="110" width="147" height="10" fill="#c8c8c8"/><rect x="43.9" y="110" width="30" height="10" fill="#909090"/><rect x="43.9" y="110" width="29" height="9" fill="#f4f4f4"/><rect x="44.9" y="111" width="27" height="7" fill="#d8d8d8"/><rect x="58.4" y="110" width="1" height="10" fill="#909090"/><rect x="59.4" y="110" width="1" height="10" fill="#f4f4f4"/></g><g transform="translate(1639,188)"><rect x="0" y="0" width="169" height="133" fill="#686868" rx="1"/><rect x="4.7" y="4.7" width="159.6" height="123.6" fill="#bbbbbb"/><rect x="4" y="7" width="72" height="23" fill="#333333"/><path d="M4,30 L4,7 L76,7 L74.5,8.5 L5.5,8.5 L5.5,28.5 Z" fill="#8e8e8e"/><rect x="5.5" y="8.5" width="69.0" height="20.0" fill="#5e5e5e"/><path d="M26.1,21.0 V12.1 H34.5 V15.0" stroke="#ffffff" stroke-width="1.3" fill="none"/><rect x="30.1" y="15.1" width="8.4" height="9" stroke="#ffffff" stroke-width="1.3" fill="none"/><text x="38.5" y="22.5" font-family="Liberation Mono" font-size="12.5" fill="#ffffff" textLength="18.0" lengthAdjust="spacingAndGlyphs">IM2</text><text x="80.0" y="25.0" font-family="Liberation Mono" font-size="12.5" fill="#000" textLength="18.0" lengthAdjust="spacingAndGlyphs">PIT</text><text x="159.0" y="20.0" font-family="Liberation Mono" font-size="12.5" fill="#000" textLength="42.0" lengthAdjust="spacingAndGlyphs" text-anchor="end">ALIGNED</text><rect x="9" y="36" width="151" height="30" fill="#5c5c5c"/><text x="10.0" y="49.0" font-family="Liberation Mono" font-size="12.5" fill="#ffffff" textLength="48.0" lengthAdjust="spacingAndGlyphs">-60000.0</text><text x="83.5" y="49.0" font-family="Liberation Mono" font-size="12.5" fill="#ffffff" textLength="30.0" lengthAdjust="spacingAndGlyphs" text-anchor="middle">851.5</text><text x="158.5" y="49.0" font-family="Liberation Mono" font-size="12.5" fill="#ffffff" textLength="42.0" lengthAdjust="spacingAndGlyphs" text-anchor="end">60000.0</text><rect x="9" y="52" width="151" height="14" fill="#8e8e8e"/><path d="M9,66 L9,52 L160,52 L158,54 L11,54 L11,64 Z" fill="#333333"/><rect x="11" y="54" width="147" height="10" fill="#555555"/><rect x="70.3" y="54" width="30" height="10" fill="#333333"/><rect x="70.3" y="54" width="29" height="9" fill="#8e8e8e"/><rect x="71.3" y="55" width="27" height="7" fill="#5c5c5c"/><rect x="84.8" y="54" width="1" height="10" fill="#333333"/><rect x="85.8" y="54" width="1" height="10" fill="#8e8e8e"/><text x="89.0" y="83.0" font-family="Liberation Mono" font-size="12.5" fill="#000" textLength="18.0" lengthAdjust="spacingAndGlyphs" text-anchor="middle">YAW</text><rect x="9" y="92" width="151" height="30" fill="#5c5c5c"/><text x="10.0" y="105.0" font-family="Liberation Mono" font-size="12.5" fill="#ffffff" textLength="48.0" lengthAdjust="spacingAndGlyphs">-60000.0</text><text x="83.5" y="105.0" font-family="Liberation Mono" font-size="12.5" fill="#ffffff" textLength="36.0" lengthAdjust="spacingAndGlyphs" text-anchor="middle">-184.7</text><text x="158.5" y="105.0" font-family="Liberation Mono" font-size="12.5" fill="#ffffff" textLength="42.0" lengthAdjust="spacingAndGlyphs" text-anchor="end">60000.0</text><rect x="9" y="108" width="151" height="14" fill="#8e8e8e"/><path d="M9,122 L9,108 L160,108 L158,110 L11,110 L11,120 Z" fill="#333333"/><rect x="11" y="110" width="147" height="10" fill="#555555"/><rect x="69.3" y="110" width="30" height="10" fill="#333333"/><rect x="69.3" y="110" width="29" height="9" fill="#8e8e8e"/><rect x="70.3" y="111" width="27" height="7" fill="#5c5c5c"/><rect x="83.8" y="110" width="1" height="10" fill="#333333"/><rect x="84.8" y="110" width="1" height="10" fill="#8e8e8e"/></g><g transform="translate(1813,188)"><rect x="0" y="0" width="169" height="133" fill="#2d9a0e" rx="1"/><rect x="4.7" y="4.7" width="159.6" height="123.6" fill="#bbbbbb"/><rect x="4" y="7" width="72" height="23" fill="#145008"/><path d="M4,30 L4,7 L76,7 L74.5,8.5 L5.5,8.5 L5.5,28.5 Z" fill="#70c060"/><rect x="5.5" y="8.5" width="69.0" height="20.0" fill="#2c9210"/><path d="M26.1,21.0 V12.1 H34.5 V15.0" stroke="#ffffff" stroke-width="1.3" fill="none"/><rect x="30.1" y="15.1" width="8.4" height="9" stroke="#ffffff" stroke-width="1.3" fill="none"/><text x="38.5" y="22.5" font-family="Liberation Mono" font-size="12.5" fill="#ffffff" textLength="18.0" lengthAdjust="spacingAndGlyphs">MC1</text><text x="80.0" y="25.0" font-family="Liberation Mono" font-size="12.5" fill="#000" textLength="18.0" lengthAdjust="spacingAndGlyphs">PIT</text><text x="159.0" y="20.0" font-family="Liberation Mono" font-size="12.5" fill="#000" textLength="42.0" lengthAdjust="spacingAndGlyphs" text-anchor="end">ALIGNED</text><rect x="9" y="36" width="151" height="30" fill="#2c9210"/><text x="10.0" y="49.0" font-family="Liberation Mono" font-size="12.5" fill="#ffffff" textLength="42.0" lengthAdjust="spacingAndGlyphs">-6000.0</text><text x="83.5" y="49.0" font-family="Liberation Mono" font-size="12.5" fill="#ffffff" textLength="30.0" lengthAdjust="spacingAndGlyphs" text-anchor="middle">914.5</text><text x="158.5" y="49.0" font-family="Liberation Mono" font-size="12.5" fill="#ffffff" textLength="36.0" lengthAdjust="spacingAndGlyphs" text-anchor="end">6000.0</text><rect x="9" y="52" width="151" height="14" fill="#70c060"/><path d="M9,66 L9,52 L160,52 L158,54 L11,54 L11,64 Z" fill="#145008"/><rect x="11" y="54" width="147" height="10" fill="#267a0e"/><rect x="78.4" y="54" width="30" height="10" fill="#145008"/><rect x="78.4" y="54" width="29" height="9" fill="#70c060"/><rect x="79.4" y="55" width="27" height="7" fill="#2c9210"/><rect x="92.9" y="54" width="1" height="10" fill="#145008"/><rect x="93.9" y="54" width="1" height="10" fill="#70c060"/><text x="89.0" y="83.0" font-family="Liberation Mono" font-size="12.5" fill="#000" textLength="18.0" lengthAdjust="spacingAndGlyphs" text-anchor="middle">YAW</text><rect x="9" y="92" width="151" height="30" fill="#2c9210"/><text x="10.0" y="105.0" font-family="Liberation Mono" font-size="12.5" fill="#ffffff" textLength="42.0" lengthAdjust="spacingAndGlyphs">-6000.0</text><text x="83.5" y="105.0" font-family="Liberation Mono" font-size="12.5" fill="#ffffff" textLength="42.0" lengthAdjust="spacingAndGlyphs" text-anchor="middle">-2157.7</text><text x="158.5" y="105.0" font-family="Liberation Mono" font-size="12.5" fill="#ffffff" textLength="36.0" lengthAdjust="spacingAndGlyphs" text-anchor="end">6000.0</text><rect x="9" y="108" width="151" height="14" fill="#70c060"/><path d="M9,122 L9,108 L160,108 L158,110 L11,110 L11,120 Z" fill="#145008"/><rect x="11" y="110" width="147" height="10" fill="#267a0e"/><rect x="48.5" y="110" width="30" height="10" fill="#145008"/><rect x="48.5" y="110" width="29" height="9" fill="#70c060"/><rect x="49.5" y="111" width="27" height="7" fill="#2c9210"/><rect x="63.0" y="110" width="1" height="10" fill="#145008"/><rect x="64.0" y="110" width="1" height="10" fill="#70c060"/></g><g transform="translate(1987,188)"><rect x="0" y="0" width="169" height="133" fill="#2d9a0e" rx="1"/><rect x="4.7" y="4.7" width="159.6" height="123.6" fill="#bbbbbb"/><rect x="4" y="7" width="72" height="23" fill="#145008"/><path d="M4,30 L4,7 L76,7 L74.5,8.5 L5.5,8.5 L5.5,28.5 Z" fill="#70c060"/><rect x="5.5" y="8.5" width="69.0" height="20.0" fill="#2c9210"/><path d="M26.1,21.0 V12.1 H34.5 V15.0" stroke="#ffffff" stroke-width="1.3" fill="none"/><rect x="30.1" y="15.1" width="8.4" height="9" stroke="#ffffff" stroke-width="1.3" fill="none"/><text x="38.5" y="22.5" font-family="Liberation Mono" font-size="12.5" fill="#ffffff" textLength="18.0" lengthAdjust="spacingAndGlyphs">MC2</text><text x="80.0" y="25.0" font-family="Liberation Mono" font-size="12.5" fill="#000" textLength="18.0" lengthAdjust="spacingAndGlyphs">PIT</text><text x="159.0" y="20.0" font-family="Liberation Mono" font-size="12.5" fill="#000" textLength="42.0" lengthAdjust="spacingAndGlyphs" text-anchor="end">ALIGNED</text><rect x="9" y="36" width="151" height="30" fill="#2c9210"/><text x="10.0" y="49.0" font-family="Liberation Mono" font-size="12.5" fill="#ffffff" textLength="42.0" lengthAdjust="spacingAndGlyphs">-6000.0</text><text x="83.5" y="49.0" font-family="Liberation Mono" font-size="12.5" fill="#ffffff" textLength="30.0" lengthAdjust="spacingAndGlyphs" text-anchor="middle">597.2</text><text x="158.5" y="49.0" font-family="Liberation Mono" font-size="12.5" fill="#ffffff" textLength="36.0" lengthAdjust="spacingAndGlyphs" text-anchor="end">6000.0</text><rect x="9" y="52" width="151" height="14" fill="#70c060"/><path d="M9,66 L9,52 L160,52 L158,54 L11,54 L11,64 Z" fill="#145008"/><rect x="11" y="54" width="147" height="10" fill="#267a0e"/><rect x="75.3" y="54" width="30" height="10" fill="#145008"/><rect x="75.3" y="54" width="29" height="9" fill="#70c060"/><rect x="76.3" y="55" width="27" height="7" fill="#2c9210"/><rect x="89.8" y="54" width="1" height="10" fill="#145008"/><rect x="90.8" y="54" width="1" height="10" fill="#70c060"/><text x="89.0" y="83.0" font-family="Liberation Mono" font-size="12.5" fill="#000" textLength="18.0" lengthAdjust="spacingAndGlyphs" text-anchor="middle">YAW</text><rect x="9" y="92" width="151" height="30" fill="#2c9210"/><text x="10.0" y="105.0" font-family="Liberation Mono" font-size="12.5" fill="#ffffff" textLength="42.0" lengthAdjust="spacingAndGlyphs">-6000.0</text><text x="83.5" y="105.0" font-family="Liberation Mono" font-size="12.5" fill="#ffffff" textLength="36.0" lengthAdjust="spacingAndGlyphs" text-anchor="middle">-584.0</text><text x="158.5" y="105.0" font-family="Liberation Mono" font-size="12.5" fill="#ffffff" textLength="36.0" lengthAdjust="spacingAndGlyphs" text-anchor="end">6000.0</text><rect x="9" y="108" width="151" height="14" fill="#70c060"/><path d="M9,122 L9,108 L160,108 L158,110 L11,110 L11,120 Z" fill="#145008"/><rect x="11" y="110" width="147" height="10" fill="#267a0e"/><rect x="63.8" y="110" width="30" height="10" fill="#145008"/><rect x="63.8" y="110" width="29" height="9" fill="#70c060"/><rect x="64.8" y="111" width="27" height="7" fill="#2c9210"/><rect x="78.3" y="110" width="1" height="10" fill="#145008"/><rect x="79.3" y="110" width="1" height="10" fill="#70c060"/></g><g transform="translate(2162,188)"><rect x="0" y="0" width="169" height="133" fill="#b050c0" rx="1"/><rect x="4.7" y="4.7" width="159.6" height="123.6" fill="#bbbbbb"/><rect x="4" y="7" width="72" height="23" fill="#702880"/><path d="M4,30 L4,7 L76,7 L74.5,8.5 L5.5,8.5 L5.5,28.5 Z" fill="#d890e0"/><rect x="5.5" y="8.5" width="69.0" height="20.0" fill="#b050c0"/><path d="M26.1,21.0 V12.1 H34.5 V15.0" stroke="#ffffff" stroke-width="1.3" fill="none"/><rect x="30.1" y="15.1" width="8.4" height="9" stroke="#ffffff" stroke-width="1.3" fill="none"/><text x="38.5" y="22.5" font-family="Liberation Mono" font-size="12.5" fill="#ffffff" textLength="18.0" lengthAdjust="spacingAndGlyphs">PRM</text><text x="80.0" y="25.0" font-family="Liberation Mono" font-size="12.5" fill="#000" textLength="18.0" lengthAdjust="spacingAndGlyphs">PIT</text><text x="159.0" y="20.0" font-family="Liberation Mono" font-size="12.5" fill="#000" textLength="42.0" lengthAdjust="spacingAndGlyphs" text-anchor="end">ALIGNED</text><rect x="9" y="36" width="151" height="30" fill="#b050c0"/><text x="10.0" y="49.0" font-family="Liberation Mono" font-size="12.5" fill="#ffffff" textLength="42.0" lengthAdjust="spacingAndGlyphs">-6000.0</text><text x="83.5" y="49.0" font-family="Liberation Mono" font-size="12.5" fill="#ffffff" textLength="42.0" lengthAdjust="spacingAndGlyphs" text-anchor="middle">-1565.0</text><text x="158.5" y="49.0" font-family="Liberation Mono" font-size="12.5" fill="#ffffff" textLength="36.0" lengthAdjust="spacingAndGlyphs" text-anchor="end">6000.0</text><rect x="9" y="52" width="151" height="14" fill="#d890e0"/><path d="M9,66 L9,52 L160,52 L158,54 L11,54 L11,64 Z" fill="#702880"/><rect x="11" y="54" width="147" height="10" fill="#9040a2"/><rect x="54.2" y="54" width="30" height="10" fill="#702880"/><rect x="54.2" y="54" width="29" height="9" fill="#d890e0"/><rect x="55.2" y="55" width="27" height="7" fill="#b050c0"/><rect x="68.7" y="54" width="1" height="10" fill="#702880"/><rect x="69.7" y="54" width="1" height="10" fill="#d890e0"/><text x="89.0" y="83.0" font-family="Liberation Mono" font-size="12.5" fill="#000" textLength="18.0" lengthAdjust="spacingAndGlyphs" text-anchor="middle">YAW</text><rect x="9" y="92" width="151" height="30" fill="#b050c0"/><text x="10.0" y="105.0" font-family="Liberation Mono" font-size="12.5" fill="#ffffff" textLength="42.0" lengthAdjust="spacingAndGlyphs">-6000.0</text><text x="83.5" y="105.0" font-family="Liberation Mono" font-size="12.5" fill="#ffffff" textLength="24.0" lengthAdjust="spacingAndGlyphs" text-anchor="middle">70.6</text><text x="158.5" y="105.0" font-family="Liberation Mono" font-size="12.5" fill="#ffffff" textLength="36.0" lengthAdjust="spacingAndGlyphs" text-anchor="end">6000.0</text><rect x="9" y="108" width="151" height="14" fill="#d890e0"/><path d="M9,122 L9,108 L160,108 L158,110 L11,110 L11,120 Z" fill="#702880"/><rect x="11" y="110" width="147" height="10" fill="#9040a2"/><rect x="70.2" y="110" width="30" height="10" fill="#702880"/><rect x="70.2" y="110" width="29" height="9" fill="#d890e0"/><rect x="71.2" y="111" width="27" height="7" fill="#b050c0"/><rect x="84.7" y="110" width="1" height="10" fill="#702880"/><rect x="85.7" y="110" width="1" height="10" fill="#d890e0"/></g><g transform="translate(2337,188)"><rect x="0" y="0" width="169" height="133" fill="#0000b4" rx="1"/><rect x="4.7" y="4.7" width="159.6" height="123.6" fill="#bbbbbb"/><rect x="4" y="7" width="72" height="23" fill="#000060"/><path d="M4,30 L4,7 L76,7 L74.5,8.5 L5.5,8.5 L5.5,28.5 Z" fill="#6a6ae8"/><rect x="5.5" y="8.5" width="69.0" height="20.0" fill="#0000b4"/><path d="M23.1,21.0 V12.1 H31.5 V15.0" stroke="#ffffff" stroke-width="1.3" fill="none"/><rect x="27.1" y="15.1" width="8.4" height="9" stroke="#ffffff" stroke-width="1.3" fill="none"/><text x="35.5" y="22.5" font-family="Liberation Mono" font-size="12.5" fill="#ffffff" textLength="24.0" lengthAdjust="spacingAndGlyphs">ITMY</text><text x="80.0" y="25.0" font-family="Liberation Mono" font-size="12.5" fill="#000" textLength="18.0" lengthAdjust="spacingAndGlyphs">PIT</text><rect x="115.5" y="7.5" width="48" height="19" fill="none" stroke="#e01010" stroke-width="1.6"/><svg x="116" y="8" width="47" height="18"><text x="0" y="12.5" font-family="Liberation Mono" font-size="12.5" textLength="48" lengthAdjust="spacingAndGlyphs">MISALIGN</text></svg><rect x="9" y="36" width="151" height="30" fill="#0000b4"/><text x="10.0" y="49.0" font-family="Liberation Mono" font-size="12.5" fill="#ffffff" textLength="36.0" lengthAdjust="spacingAndGlyphs">-600.0</text><text x="83.5" y="49.0" font-family="Liberation Mono" font-size="12.5" fill="#ffffff" textLength="24.0" lengthAdjust="spacingAndGlyphs" text-anchor="middle">-9.6</text><text x="158.5" y="49.0" font-family="Liberation Mono" font-size="12.5" fill="#ffffff" textLength="30.0" lengthAdjust="spacingAndGlyphs" text-anchor="end">600.0</text><rect x="9" y="52" width="151" height="14" fill="#6a6ae8"/><path d="M9,66 L9,52 L160,52 L158,54 L11,54 L11,64 Z" fill="#000060"/><rect x="11" y="54" width="147" height="10" fill="#00009a"/><rect x="68.6" y="54" width="30" height="10" fill="#000060"/><rect x="68.6" y="54" width="29" height="9" fill="#6a6ae8"/><rect x="69.6" y="55" width="27" height="7" fill="#0000b4"/><rect x="83.1" y="54" width="1" height="10" fill="#000060"/><rect x="84.1" y="54" width="1" height="10" fill="#6a6ae8"/><text x="89.0" y="83.0" font-family="Liberation Mono" font-size="12.5" fill="#000" textLength="18.0" lengthAdjust="spacingAndGlyphs" text-anchor="middle">YAW</text><rect x="9" y="92" width="151" height="30" fill="#0000b4"/><text x="10.0" y="105.0" font-family="Liberation Mono" font-size="12.5" fill="#ffffff" textLength="36.0" lengthAdjust="spacingAndGlyphs">-600.0</text><text x="83.5" y="105.0" font-family="Liberation Mono" font-size="12.5" fill="#ffffff" textLength="24.0" lengthAdjust="spacingAndGlyphs" text-anchor="middle">-3.2</text><text x="158.5" y="105.0" font-family="Liberation Mono" font-size="12.5" fill="#ffffff" textLength="30.0" lengthAdjust="spacingAndGlyphs" text-anchor="end">600.0</text><rect x="9" y="108" width="151" height="14" fill="#6a6ae8"/><path d="M9,122 L9,108 L160,108 L158,110 L11,110 L11,120 Z" fill="#000060"/><rect x="11" y="110" width="147" height="10" fill="#00009a"/><rect x="69.2" y="110" width="30" height="10" fill="#000060"/><rect x="69.2" y="110" width="29" height="9" fill="#6a6ae8"/><rect x="70.2" y="111" width="27" height="7" fill="#0000b4"/><rect x="83.7" y="110" width="1" height="10" fill="#000060"/><rect x="84.7" y="110" width="1" height="10" fill="#6a6ae8"/></g><g transform="translate(2685,188)"><rect x="0" y="0" width="169" height="133" fill="#d4d4d4" rx="1"/><rect x="4.7" y="4.7" width="159.6" height="123.6" fill="#bbbbbb"/><rect x="4" y="7" width="72" height="23" fill="#909090"/><path d="M4,30 L4,7 L76,7 L74.5,8.5 L5.5,8.5 L5.5,28.5 Z" fill="#f4f4f4"/><rect x="5.5" y="8.5" width="69.0" height="20.0" fill="#d8d8d8"/><path d="M23.1,21.0 V12.1 H31.5 V15.0" stroke="#000000" stroke-width="1.3" fill="none"/><rect x="27.1" y="15.1" width="8.4" height="9" stroke="#000000" stroke-width="1.3" fill="none"/><text x="35.5" y="22.5" font-family="Liberation Mono" font-size="12.5" fill="#000000" textLength="24.0" lengthAdjust="spacingAndGlyphs">TMSX</text><text x="80.0" y="25.0" font-family="Liberation Mono" font-size="12.5" fill="#000" textLength="18.0" lengthAdjust="spacingAndGlyphs">PIT</text><text x="159.0" y="20.0" font-family="Liberation Mono" font-size="12.5" fill="#000" textLength="42.0" lengthAdjust="spacingAndGlyphs" text-anchor="end">ALIGNED</text><rect x="9" y="36" width="151" height="30" fill="#d8d8d8"/><text x="10.0" y="49.0" font-family="Liberation Mono" font-size="12.5" fill="#000000" textLength="36.0" lengthAdjust="spacingAndGlyphs">-600.0</text><text x="83.5" y="49.0" font-family="Liberation Mono" font-size="12.5" fill="#000000" textLength="30.0" lengthAdjust="spacingAndGlyphs" text-anchor="middle">-95.1</text><text x="158.5" y="49.0" font-family="Liberation Mono" font-size="12.5" fill="#000000" textLength="30.0" lengthAdjust="spacingAndGlyphs" text-anchor="end">600.0</text><rect x="9" y="52" width="151" height="14" fill="#f4f4f4"/><path d="M9,66 L9,52 L160,52 L158,54 L11,54 L11,64 Z" fill="#909090"/><rect x="11" y="54" width="147" height="10" fill="#c8c8c8"/><rect x="60.2" y="54" width="30" height="10" fill="#909090"/><rect x="60.2" y="54" width="29" height="9" fill="#f4f4f4"/><rect x="61.2" y="55" width="27" height="7" fill="#d8d8d8"/><rect x="74.7" y="54" width="1" height="10" fill="#909090"/><rect x="75.7" y="54" width="1" height="10" fill="#f4f4f4"/><text x="89.0" y="83.0" font-family="Liberation Mono" font-size="12.5" fill="#000" textLength="18.0" lengthAdjust="spacingAndGlyphs" text-anchor="middle">YAW</text><rect x="9" y="92" width="151" height="30" fill="#d8d8d8"/><text x="10.0" y="105.0" font-family="Liberation Mono" font-size="12.5" fill="#000000" textLength="36.0" lengthAdjust="spacingAndGlyphs">-600.0</text><text x="83.5" y="105.0" font-family="Liberation Mono" font-size="12.5" fill="#000000" textLength="36.0" lengthAdjust="spacingAndGlyphs" text-anchor="middle">-110.1</text><text x="158.5" y="105.0" font-family="Liberation Mono" font-size="12.5" fill="#000000" textLength="30.0" lengthAdjust="spacingAndGlyphs" text-anchor="end">600.0</text><rect x="9" y="108" width="151" height="14" fill="#f4f4f4"/><path d="M9,122 L9,108 L160,108 L158,110 L11,110 L11,120 Z" fill="#909090"/><rect x="11" y="110" width="147" height="10" fill="#c8c8c8"/><rect x="58.8" y="110" width="30" height="10" fill="#909090"/><rect x="58.8" y="110" width="29" height="9" fill="#f4f4f4"/><rect x="59.8" y="111" width="27" height="7" fill="#d8d8d8"/><rect x="73.3" y="110" width="1" height="10" fill="#909090"/><rect x="74.3" y="110" width="1" height="10" fill="#f4f4f4"/></g><g transform="translate(3033,188)"><rect x="0" y="0" width="169" height="133" fill="#4b4ba6" rx="1"/><rect x="4.7" y="4.7" width="159.6" height="123.6" fill="#bbbbbb"/><rect x="4" y="7" width="72" height="23" fill="#22226a"/><path d="M4,30 L4,7 L76,7 L74.5,8.5 L5.5,8.5 L5.5,28.5 Z" fill="#8888cc"/><rect x="5.5" y="8.5" width="69.0" height="20.0" fill="#4b4ba6"/><path d="M26.1,21.0 V12.1 H34.5 V15.0" stroke="#ffffff" stroke-width="1.3" fill="none"/><rect x="30.1" y="15.1" width="8.4" height="9" stroke="#ffffff" stroke-width="1.3" fill="none"/><text x="38.5" y="22.5" font-family="Liberation Mono" font-size="12.5" fill="#ffffff" textLength="18.0" lengthAdjust="spacingAndGlyphs">FC2</text><text x="80.0" y="25.0" font-family="Liberation Mono" font-size="12.5" fill="#000" textLength="18.0" lengthAdjust="spacingAndGlyphs">PIT</text><text x="159.0" y="20.0" font-family="Liberation Mono" font-size="12.5" fill="#000" textLength="42.0" lengthAdjust="spacingAndGlyphs" text-anchor="end">ALIGNED</text><rect x="9" y="36" width="151" height="30" fill="#4b4ba6"/><text x="10.0" y="49.0" font-family="Liberation Mono" font-size="12.5" fill="#ffffff" textLength="42.0" lengthAdjust="spacingAndGlyphs">-4000.0</text><text x="83.5" y="49.0" font-family="Liberation Mono" font-size="12.5" fill="#ffffff" textLength="30.0" lengthAdjust="spacingAndGlyphs" text-anchor="middle">286.7</text><text x="158.5" y="49.0" font-family="Liberation Mono" font-size="12.5" fill="#ffffff" textLength="36.0" lengthAdjust="spacingAndGlyphs" text-anchor="end">4000.0</text><rect x="9" y="52" width="151" height="14" fill="#8888cc"/><path d="M9,66 L9,52 L160,52 L158,54 L11,54 L11,64 Z" fill="#22226a"/><rect x="11" y="54" width="147" height="10" fill="#3a3a8c"/><rect x="73.7" y="54" width="30" height="10" fill="#22226a"/><rect x="73.7" y="54" width="29" height="9" fill="#8888cc"/><rect x="74.7" y="55" width="27" height="7" fill="#4b4ba6"/><rect x="88.2" y="54" width="1" height="10" fill="#22226a"/><rect x="89.2" y="54" width="1" height="10" fill="#8888cc"/><text x="89.0" y="83.0" font-family="Liberation Mono" font-size="12.5" fill="#000" textLength="18.0" lengthAdjust="spacingAndGlyphs" text-anchor="middle">YAW</text><rect x="9" y="92" width="151" height="30" fill="#4b4ba6"/><text x="10.0" y="105.0" font-family="Liberation Mono" font-size="12.5" fill="#ffffff" textLength="42.0" lengthAdjust="spacingAndGlyphs">-7500.0</text><text x="83.5" y="105.0" font-family="Liberation Mono" font-size="12.5" fill="#ffffff" textLength="24.0" lengthAdjust="spacingAndGlyphs" text-anchor="middle">41.4</text><text x="158.5" y="105.0" font-family="Liberation Mono" font-size="12.5" fill="#ffffff" textLength="36.0" lengthAdjust="spacingAndGlyphs" text-anchor="end">7500.0</text><rect x="9" y="108" width="151" height="14" fill="#8888cc"/><path d="M9,122 L9,108 L160,108 L158,110 L11,110 L11,120 Z" fill="#22226a"/><rect x="11" y="110" width="147" height="10" fill="#3a3a8c"/><rect x="69.8" y="110" width="30" height="10" fill="#22226a"/><rect x="69.8" y="110" width="29" height="9" fill="#8888cc"/><rect x="70.8" y="111" width="27" height="7" fill="#4b4ba6"/><rect x="84.3" y="110" width="1" height="10" fill="#22226a"/><rect x="85.3" y="110" width="1" height="10" fill="#8888cc"/></g><g transform="translate(1639,325)"><rect x="0" y="0" width="169" height="133" fill="#686868" rx="1"/><rect x="4.7" y="4.7" width="159.6" height="123.6" fill="#bbbbbb"/><rect x="4" y="7" width="72" height="23" fill="#333333"/><path d="M4,30 L4,7 L76,7 L74.5,8.5 L5.5,8.5 L5.5,28.5 Z" fill="#8e8e8e"/><rect x="5.5" y="8.5" width="69.0" height="20.0" fill="#5e5e5e"/><path d="M26.1,21.0 V12.1 H34.5 V15.0" stroke="#ffffff" stroke-width="1.3" fill="none"/><rect x="30.1" y="15.1" width="8.4" height="9" stroke="#ffffff" stroke-width="1.3" fill="none"/><text x="38.5" y="22.5" font-family="Liberation Mono" font-size="12.5" fill="#ffffff" textLength="18.0" lengthAdjust="spacingAndGlyphs">IM3</text><text x="80.0" y="25.0" font-family="Liberation Mono" font-size="12.5" fill="#000" textLength="18.0" lengthAdjust="spacingAndGlyphs">PIT</text><text x="159.0" y="20.0" font-family="Liberation Mono" font-size="12.5" fill="#000" textLength="42.0" lengthAdjust="spacingAndGlyphs" text-anchor="end">ALIGNED</text><rect x="9" y="36" width="151" height="30" fill="#5c5c5c"/><text x="10.0" y="49.0" font-family="Liberation Mono" font-size="12.5" fill="#ffffff" textLength="48.0" lengthAdjust="spacingAndGlyphs">-60000.0</text><text x="83.5" y="49.0" font-family="Liberation Mono" font-size="12.5" fill="#ffffff" textLength="36.0" lengthAdjust="spacingAndGlyphs" text-anchor="middle">-666.7</text><text x="158.5" y="49.0" font-family="Liberation Mono" font-size="12.5" fill="#ffffff" textLength="42.0" lengthAdjust="spacingAndGlyphs" text-anchor="end">60000.0</text><rect x="9" y="52" width="151" height="14" fill="#8e8e8e"/><path d="M9,66 L9,52 L160,52 L158,54 L11,54 L11,64 Z" fill="#333333"/><rect x="11" y="54" width="147" height="10" fill="#555555"/><rect x="68.8" y="54" width="30" height="10" fill="#333333"/><rect x="68.8" y="54" width="29" height="9" fill="#8e8e8e"/><rect x="69.8" y="55" width="27" height="7" fill="#5c5c5c"/><rect x="83.3" y="54" width="1" height="10" fill="#333333"/><rect x="84.3" y="54" width="1" height="10" fill="#8e8e8e"/><text x="89.0" y="83.0" font-family="Liberation Mono" font-size="12.5" fill="#000" textLength="18.0" lengthAdjust="spacingAndGlyphs" text-anchor="middle">YAW</text><rect x="9" y="92" width="151" height="30" fill="#5c5c5c"/><text x="10.0" y="105.0" font-family="Liberation Mono" font-size="12.5" fill="#ffffff" textLength="48.0" lengthAdjust="spacingAndGlyphs">-60000.0</text><text x="83.5" y="105.0" font-family="Liberation Mono" font-size="12.5" fill="#ffffff" textLength="30.0" lengthAdjust="spacingAndGlyphs" text-anchor="middle">189.6</text><text x="158.5" y="105.0" font-family="Liberation Mono" font-size="12.5" fill="#ffffff" textLength="42.0" lengthAdjust="spacingAndGlyphs" text-anchor="end">60000.0</text><rect x="9" y="108" width="151" height="14" fill="#8e8e8e"/><path d="M9,122 L9,108 L160,108 L158,110 L11,110 L11,120 Z" fill="#333333"/><rect x="11" y="110" width="147" height="10" fill="#555555"/><rect x="69.7" y="110" width="30" height="10" fill="#333333"/><rect x="69.7" y="110" width="29" height="9" fill="#8e8e8e"/><rect x="70.7" y="111" width="27" height="7" fill="#5c5c5c"/><rect x="84.2" y="110" width="1" height="10" fill="#333333"/><rect x="85.2" y="110" width="1" height="10" fill="#8e8e8e"/></g><g transform="translate(1813,325)"><rect x="0" y="0" width="169" height="133" fill="#a4aaff" rx="1"/><rect x="4.7" y="4.7" width="159.6" height="123.6" fill="#bbbbbb"/><rect x="4" y="7" width="72" height="23" fill="#6870c0"/><path d="M4,30 L4,7 L76,7 L74.5,8.5 L5.5,8.5 L5.5,28.5 Z" fill="#d0d4ff"/><rect x="5.5" y="8.5" width="69.0" height="20.0" fill="#a2a8ff"/><path d="M26.1,21.0 V12.1 H34.5 V15.0" stroke="#ffffff" stroke-width="1.3" fill="none"/><rect x="30.1" y="15.1" width="8.4" height="9" stroke="#ffffff" stroke-width="1.3" fill="none"/><text x="38.5" y="22.5" font-family="Liberation Mono" font-size="12.5" fill="#ffffff" textLength="18.0" lengthAdjust="spacingAndGlyphs">JM1</text><text x="80.0" y="25.0" font-family="Liberation Mono" font-size="12.5" fill="#000" textLength="18.0" lengthAdjust="spacingAndGlyphs">PIT</text><text x="159.0" y="20.0" font-family="Liberation Mono" font-size="12.5" fill="#000" textLength="42.0" lengthAdjust="spacingAndGlyphs" text-anchor="end">ALIGNED</text><rect x="9" y="36" width="151" height="30" fill="#a2a8ff"/><text x="10.0" y="49.0" font-family="Liberation Mono" font-size="12.5" fill="#ffffff" textLength="42.0" lengthAdjust="spacingAndGlyphs">-6000.0</text><text x="83.5" y="49.0" font-family="Liberation Mono" font-size="12.5" fill="#ffffff" textLength="36.0" lengthAdjust="spacingAndGlyphs" text-anchor="middle">-670.5</text><text x="158.5" y="49.0" font-family="Liberation Mono" font-size="12.5" fill="#ffffff" textLength="36.0" lengthAdjust="spacingAndGlyphs" text-anchor="end">6000.0</text><rect x="9" y="52" width="151" height="14" fill="#d0d4ff"/><path d="M9,66 L9,52 L160,52 L158,54 L11,54 L11,64 Z" fill="#6870c0"/><rect x="11" y="54" width="147" height="10" fill="#8890e0"/><rect x="63.0" y="54" width="30" height="10" fill="#6870c0"/><rect x="63.0" y="54" width="29" height="9" fill="#d0d4ff"/><rect x="64.0" y="55" width="27" height="7" fill="#a2a8ff"/><rect x="77.5" y="54" width="1" height="10" fill="#6870c0"/><rect x="78.5" y="54" width="1" height="10" fill="#d0d4ff"/><text x="89.0" y="83.0" font-family="Liberation Mono" font-size="12.5" fill="#000" textLength="18.0" lengthAdjust="spacingAndGlyphs" text-anchor="middle">YAW</text><rect x="9" y="92" width="151" height="30" fill="#a2a8ff"/><text x="10.0" y="105.0" font-family="Liberation Mono" font-size="12.5" fill="#ffffff" textLength="42.0" lengthAdjust="spacingAndGlyphs">-6000.0</text><text x="83.5" y="105.0" font-family="Liberation Mono" font-size="12.5" fill="#ffffff" textLength="42.0" lengthAdjust="spacingAndGlyphs" text-anchor="middle">-1511.0</text><text x="158.5" y="105.0" font-family="Liberation Mono" font-size="12.5" fill="#ffffff" textLength="36.0" lengthAdjust="spacingAndGlyphs" text-anchor="end">6000.0</text><rect x="9" y="108" width="151" height="14" fill="#d0d4ff"/><path d="M9,122 L9,108 L160,108 L158,110 L11,110 L11,120 Z" fill="#6870c0"/><rect x="11" y="110" width="147" height="10" fill="#8890e0"/><rect x="54.8" y="110" width="30" height="10" fill="#6870c0"/><rect x="54.8" y="110" width="29" height="9" fill="#d0d4ff"/><rect x="55.8" y="111" width="27" height="7" fill="#a2a8ff"/><rect x="69.3" y="110" width="1" height="10" fill="#6870c0"/><rect x="70.3" y="110" width="1" height="10" fill="#d0d4ff"/></g><g transform="translate(1987,325)"><rect x="0" y="0" width="169" height="133" fill="#b050c0" rx="1"/><rect x="4.7" y="4.7" width="159.6" height="123.6" fill="#bbbbbb"/><rect x="4" y="7" width="72" height="23" fill="#702880"/><path d="M4,30 L4,7 L76,7 L74.5,8.5 L5.5,8.5 L5.5,28.5 Z" fill="#d890e0"/><rect x="5.5" y="8.5" width="69.0" height="20.0" fill="#b050c0"/><path d="M26.1,21.0 V12.1 H34.5 V15.0" stroke="#ffffff" stroke-width="1.3" fill="none"/><rect x="30.1" y="15.1" width="8.4" height="9" stroke="#ffffff" stroke-width="1.3" fill="none"/><text x="38.5" y="22.5" font-family="Liberation Mono" font-size="12.5" fill="#ffffff" textLength="18.0" lengthAdjust="spacingAndGlyphs">PR2</text><text x="80.0" y="25.0" font-family="Liberation Mono" font-size="12.5" fill="#000" textLength="18.0" lengthAdjust="spacingAndGlyphs">PIT</text><text x="159.0" y="20.0" font-family="Liberation Mono" font-size="12.5" fill="#000" textLength="42.0" lengthAdjust="spacingAndGlyphs" text-anchor="end">ALIGNED</text><rect x="9" y="36" width="151" height="30" fill="#b050c0"/><text x="10.0" y="49.0" font-family="Liberation Mono" font-size="12.5" fill="#ffffff" textLength="42.0" lengthAdjust="spacingAndGlyphs">-6000.0</text><text x="83.5" y="49.0" font-family="Liberation Mono" font-size="12.5" fill="#ffffff" textLength="36.0" lengthAdjust="spacingAndGlyphs" text-anchor="middle">1341.0</text><text x="158.5" y="49.0" font-family="Liberation Mono" font-size="12.5" fill="#ffffff" textLength="36.0" lengthAdjust="spacingAndGlyphs" text-anchor="end">6000.0</text><rect x="9" y="52" width="151" height="14" fill="#d890e0"/><path d="M9,66 L9,52 L160,52 L158,54 L11,54 L11,64 Z" fill="#702880"/><rect x="11" y="54" width="147" height="10" fill="#9040a2"/><rect x="82.6" y="54" width="30" height="10" fill="#702880"/><rect x="82.6" y="54" width="29" height="9" fill="#d890e0"/><rect x="83.6" y="55" width="27" height="7" fill="#b050c0"/><rect x="97.1" y="54" width="1" height="10" fill="#702880"/><rect x="98.1" y="54" width="1" height="10" fill="#d890e0"/><text x="89.0" y="83.0" font-family="Liberation Mono" font-size="12.5" fill="#000" textLength="18.0" lengthAdjust="spacingAndGlyphs" text-anchor="middle">YAW</text><rect x="9" y="92" width="151" height="30" fill="#b050c0"/><text x="10.0" y="105.0" font-family="Liberation Mono" font-size="12.5" fill="#ffffff" textLength="42.0" lengthAdjust="spacingAndGlyphs">-6000.0</text><text x="83.5" y="105.0" font-family="Liberation Mono" font-size="12.5" fill="#ffffff" textLength="36.0" lengthAdjust="spacingAndGlyphs" text-anchor="middle">-196.3</text><text x="158.5" y="105.0" font-family="Liberation Mono" font-size="12.5" fill="#ffffff" textLength="36.0" lengthAdjust="spacingAndGlyphs" text-anchor="end">6000.0</text><rect x="9" y="108" width="151" height="14" fill="#d890e0"/><path d="M9,122 L9,108 L160,108 L158,110 L11,110 L11,120 Z" fill="#702880"/><rect x="11" y="110" width="147" height="10" fill="#9040a2"/><rect x="67.6" y="110" width="30" height="10" fill="#702880"/><rect x="67.6" y="110" width="29" height="9" fill="#d890e0"/><rect x="68.6" y="111" width="27" height="7" fill="#b050c0"/><rect x="82.1" y="110" width="1" height="10" fill="#702880"/><rect x="83.1" y="110" width="1" height="10" fill="#d890e0"/></g><g transform="translate(2162,327)"><rect x="0" y="0" width="169" height="133" fill="#8a1a9c" rx="1"/><rect x="4.7" y="4.7" width="159.6" height="123.6" fill="#bbbbbb"/><rect x="4" y="7" width="72" height="23" fill="#4a0a5a"/><path d="M4,30 L4,7 L76,7 L74.5,8.5 L5.5,8.5 L5.5,28.5 Z" fill="#c070d0"/><rect x="5.5" y="8.5" width="69.0" height="20.0" fill="#8a1a9c"/><path d="M26.1,21.0 V12.1 H34.5 V15.0" stroke="#ffffff" stroke-width="1.3" fill="none"/><rect x="30.1" y="15.1" width="8.4" height="9" stroke="#ffffff" stroke-width="1.3" fill="none"/><text x="38.5" y="22.5" font-family="Liberation Mono" font-size="12.5" fill="#ffffff" textLength="18.0" lengthAdjust="spacingAndGlyphs">PR3</text><text x="80.0" y="25.0" font-family="Liberation Mono" font-size="12.5" fill="#000" textLength="18.0" lengthAdjust="spacingAndGlyphs">PIT</text><text x="159.0" y="20.0" font-family="Liberation Mono" font-size="12.5" fill="#000" textLength="42.0" lengthAdjust="spacingAndGlyphs" text-anchor="end">ALIGNED</text><rect x="9" y="36" width="151" height="30" fill="#8a1a9c"/><text x="10.0" y="49.0" font-family="Liberation Mono" font-size="12.5" fill="#ffffff" textLength="42.0" lengthAdjust="spacingAndGlyphs">-6000.0</text><text x="83.5" y="49.0" font-family="Liberation Mono" font-size="12.5" fill="#ffffff" textLength="36.0" lengthAdjust="spacingAndGlyphs" text-anchor="middle">-140.0</text><text x="158.5" y="49.0" font-family="Liberation Mono" font-size="12.5" fill="#ffffff" textLength="36.0" lengthAdjust="spacingAndGlyphs" text-anchor="end">6000.0</text><rect x="9" y="52" width="151" height="14" fill="#c070d0"/><path d="M9,66 L9,52 L160,52 L158,54 L11,54 L11,64 Z" fill="#4a0a5a"/><rect x="11" y="54" width="147" height="10" fill="#701880"/><rect x="68.1" y="54" width="30" height="10" fill="#4a0a5a"/><rect x="68.1" y="54" width="29" height="9" fill="#c070d0"/><rect x="69.1" y="55" width="27" height="7" fill="#8a1a9c"/><rect x="82.6" y="54" width="1" height="10" fill="#4a0a5a"/><rect x="83.6" y="54" width="1" height="10" fill="#c070d0"/><text x="89.0" y="83.0" font-family="Liberation Mono" font-size="12.5" fill="#000" textLength="18.0" lengthAdjust="spacingAndGlyphs" text-anchor="middle">YAW</text><rect x="9" y="92" width="151" height="30" fill="#8a1a9c"/><text x="10.0" y="105.0" font-family="Liberation Mono" font-size="12.5" fill="#ffffff" textLength="42.0" lengthAdjust="spacingAndGlyphs">-6000.0</text><text x="83.5" y="105.0" font-family="Liberation Mono" font-size="12.5" fill="#ffffff" textLength="36.0" lengthAdjust="spacingAndGlyphs" text-anchor="middle">-233.7</text><text x="158.5" y="105.0" font-family="Liberation Mono" font-size="12.5" fill="#ffffff" textLength="36.0" lengthAdjust="spacingAndGlyphs" text-anchor="end">6000.0</text><rect x="9" y="108" width="151" height="14" fill="#c070d0"/><path d="M9,122 L9,108 L160,108 L158,110 L11,110 L11,120 Z" fill="#4a0a5a"/><rect x="11" y="110" width="147" height="10" fill="#701880"/><rect x="67.2" y="110" width="30" height="10" fill="#4a0a5a"/><rect x="67.2" y="110" width="29" height="9" fill="#c070d0"/><rect x="68.2" y="111" width="27" height="7" fill="#8a1a9c"/><rect x="81.7" y="110" width="1" height="10" fill="#4a0a5a"/><rect x="82.7" y="110" width="1" height="10" fill="#c070d0"/></g><g transform="translate(2337,325)"><rect x="0" y="0" width="169" height="133" fill="#800000" rx="1"/><rect x="4.7" y="4.7" width="159.6" height="123.6" fill="#bbbbbb"/><rect x="4" y="7" width="72" height="23" fill="#500000"/><path d="M4,30 L4,7 L76,7 L74.5,8.5 L5.5,8.5 L5.5,28.5 Z" fill="#c87070"/><rect x="5.5" y="8.5" width="69.0" height="20.0" fill="#a01410"/><path d="M29.1,21.0 V12.1 H37.5 V15.0" stroke="#ffffff" stroke-width="1.3" fill="none"/><rect x="33.1" y="15.1" width="8.4" height="9" stroke="#ffffff" stroke-width="1.3" fill="none"/><text x="41.5" y="22.5" font-family="Liberation Mono" font-size="12.5" fill="#ffffff" textLength="12.0" lengthAdjust="spacingAndGlyphs">BS</text><text x="80.0" y="25.0" font-family="Liberation Mono" font-size="12.5" fill="#000" textLength="18.0" lengthAdjust="spacingAndGlyphs">PIT</text><text x="159.0" y="20.0" font-family="Liberation Mono" font-size="12.5" fill="#000" textLength="42.0" lengthAdjust="spacingAndGlyphs" text-anchor="end">ALIGNED</text><rect x="9" y="36" width="151" height="30" fill="#800000"/><text x="10.0" y="49.0" font-family="Liberation Mono" font-size="12.5" fill="#ffffff" textLength="48.0" lengthAdjust="spacingAndGlyphs">-60000.0</text><text x="83.5" y="49.0" font-family="Liberation Mono" font-size="12.5" fill="#ffffff" textLength="30.0" lengthAdjust="spacingAndGlyphs" text-anchor="middle">91.02</text><text x="158.5" y="49.0" font-family="Liberation Mono" font-size="12.5" fill="#ffffff" textLength="48.0" lengthAdjust="spacingAndGlyphs" text-anchor="end">60000.00</text><rect x="9" y="52" width="151" height="14" fill="#c87070"/><path d="M9,66 L9,52 L160,52 L158,54 L11,54 L11,64 Z" fill="#500000"/><rect x="11" y="54" width="147" height="10" fill="#902828"/><rect x="69.6" y="54" width="30" height="10" fill="#500000"/><rect x="69.6" y="54" width="29" height="9" fill="#c87070"/><rect x="70.6" y="55" width="27" height="7" fill="#800000"/><rect x="84.1" y="54" width="1" height="10" fill="#500000"/><rect x="85.1" y="54" width="1" height="10" fill="#c87070"/><text x="89.0" y="83.0" font-family="Liberation Mono" font-size="12.5" fill="#000" textLength="18.0" lengthAdjust="spacingAndGlyphs" text-anchor="middle">YAW</text><rect x="9" y="92" width="151" height="30" fill="#800000"/><text x="10.0" y="105.0" font-family="Liberation Mono" font-size="12.5" fill="#ffffff" textLength="48.0" lengthAdjust="spacingAndGlyphs">-60000.0</text><text x="83.5" y="105.0" font-family="Liberation Mono" font-size="12.5" fill="#ffffff" textLength="42.0" lengthAdjust="spacingAndGlyphs" text-anchor="middle">-384.78</text><text x="158.5" y="105.0" font-family="Liberation Mono" font-size="12.5" fill="#ffffff" textLength="48.0" lengthAdjust="spacingAndGlyphs" text-anchor="end">60000.00</text><rect x="9" y="108" width="151" height="14" fill="#c87070"/><path d="M9,122 L9,108 L160,108 L158,110 L11,110 L11,120 Z" fill="#500000"/><rect x="11" y="110" width="147" height="10" fill="#902828"/><rect x="69.1" y="110" width="30" height="10" fill="#500000"/><rect x="69.1" y="110" width="29" height="9" fill="#c87070"/><rect x="70.1" y="111" width="27" height="7" fill="#800000"/><rect x="83.6" y="110" width="1" height="10" fill="#500000"/><rect x="84.6" y="110" width="1" height="10" fill="#c87070"/></g><g transform="translate(2511,325)"><rect x="0" y="0" width="169" height="133" fill="#0000b4" rx="1"/><rect x="4.7" y="4.7" width="159.6" height="123.6" fill="#bbbbbb"/><rect x="4" y="7" width="72" height="23" fill="#000060"/><path d="M4,30 L4,7 L76,7 L74.5,8.5 L5.5,8.5 L5.5,28.5 Z" fill="#6a6ae8"/><rect x="5.5" y="8.5" width="69.0" height="20.0" fill="#0000b4"/><path d="M23.1,21.0 V12.1 H31.5 V15.0" stroke="#ffffff" stroke-width="1.3" fill="none"/><rect x="27.1" y="15.1" width="8.4" height="9" stroke="#ffffff" stroke-width="1.3" fill="none"/><text x="35.5" y="22.5" font-family="Liberation Mono" font-size="12.5" fill="#ffffff" textLength="24.0" lengthAdjust="spacingAndGlyphs">ITMX</text><text x="80.0" y="25.0" font-family="Liberation Mono" font-size="12.5" fill="#000" textLength="18.0" lengthAdjust="spacingAndGlyphs">PIT</text><text x="159.0" y="20.0" font-family="Liberation Mono" font-size="12.5" fill="#000" textLength="42.0" lengthAdjust="spacingAndGlyphs" text-anchor="end">ALIGNED</text><rect x="9" y="36" width="151" height="30" fill="#0000b4"/><text x="10.0" y="49.0" font-family="Liberation Mono" font-size="12.5" fill="#ffffff" textLength="36.0" lengthAdjust="spacingAndGlyphs">-600.0</text><text x="83.5" y="49.0" font-family="Liberation Mono" font-size="12.5" fill="#ffffff" textLength="36.0" lengthAdjust="spacingAndGlyphs" text-anchor="middle">-113.2</text><text x="158.5" y="49.0" font-family="Liberation Mono" font-size="12.5" fill="#ffffff" textLength="30.0" lengthAdjust="spacingAndGlyphs" text-anchor="end">600.0</text><rect x="9" y="52" width="151" height="14" fill="#6a6ae8"/><path d="M9,66 L9,52 L160,52 L158,54 L11,54 L11,64 Z" fill="#000060"/><rect x="11" y="54" width="147" height="10" fill="#00009a"/><rect x="58.5" y="54" width="30" height="10" fill="#000060"/><rect x="58.5" y="54" width="29" height="9" fill="#6a6ae8"/><rect x="59.5" y="55" width="27" height="7" fill="#0000b4"/><rect x="73.0" y="54" width="1" height="10" fill="#000060"/><rect x="74.0" y="54" width="1" height="10" fill="#6a6ae8"/><text x="89.0" y="83.0" font-family="Liberation Mono" font-size="12.5" fill="#000" textLength="18.0" lengthAdjust="spacingAndGlyphs" text-anchor="middle">YAW</text><rect x="9" y="92" width="151" height="30" fill="#0000b4"/><text x="10.0" y="105.0" font-family="Liberation Mono" font-size="12.5" fill="#ffffff" textLength="36.0" lengthAdjust="spacingAndGlyphs">-600.0</text><text x="83.5" y="105.0" font-family="Liberation Mono" font-size="12.5" fill="#ffffff" textLength="30.0" lengthAdjust="spacingAndGlyphs" text-anchor="middle">104.5</text><text x="158.5" y="105.0" font-family="Liberation Mono" font-size="12.5" fill="#ffffff" textLength="30.0" lengthAdjust="spacingAndGlyphs" text-anchor="end">600.0</text><rect x="9" y="108" width="151" height="14" fill="#6a6ae8"/><path d="M9,122 L9,108 L160,108 L158,110 L11,110 L11,120 Z" fill="#000060"/><rect x="11" y="110" width="147" height="10" fill="#00009a"/><rect x="79.7" y="110" width="30" height="10" fill="#000060"/><rect x="79.7" y="110" width="29" height="9" fill="#6a6ae8"/><rect x="80.7" y="111" width="27" height="7" fill="#0000b4"/><rect x="94.2" y="110" width="1" height="10" fill="#000060"/><rect x="95.2" y="110" width="1" height="10" fill="#6a6ae8"/></g><g transform="translate(2685,325)"><rect x="0" y="0" width="169" height="133" fill="#0000b4" rx="1"/><rect x="4.7" y="4.7" width="159.6" height="123.6" fill="#bbbbbb"/><rect x="4" y="7" width="72" height="23" fill="#000060"/><path d="M4,30 L4,7 L76,7 L74.5,8.5 L5.5,8.5 L5.5,28.5 Z" fill="#6a6ae8"/><rect x="5.5" y="8.5" width="69.0" height="20.0" fill="#0000b4"/><path d="M23.1,21.0 V12.1 H31.5 V15.0" stroke="#ffffff" stroke-width="1.3" fill="none"/><rect x="27.1" y="15.1" width="8.4" height="9" stroke="#ffffff" stroke-width="1.3" fill="none"/><text x="35.5" y="22.5" font-family="Liberation Mono" font-size="12.5" fill="#ffffff" textLength="24.0" lengthAdjust="spacingAndGlyphs">ETMX</text><text x="80.0" y="25.0" font-family="Liberation Mono" font-size="12.5" fill="#000" textLength="18.0" lengthAdjust="spacingAndGlyphs">PIT</text><text x="159.0" y="20.0" font-family="Liberation Mono" font-size="12.5" fill="#000" textLength="42.0" lengthAdjust="spacingAndGlyphs" text-anchor="end">ALIGNED</text><rect x="9" y="36" width="151" height="30" fill="#0000b4"/><text x="10.0" y="49.0" font-family="Liberation Mono" font-size="12.5" fill="#ffffff" textLength="36.0" lengthAdjust="spacingAndGlyphs">-600.0</text><text x="83.5" y="49.0" font-family="Liberation Mono" font-size="12.5" fill="#ffffff" textLength="30.0" lengthAdjust="spacingAndGlyphs" text-anchor="middle">-37.9</text><text x="158.5" y="49.0" font-family="Liberation Mono" font-size="12.5" fill="#ffffff" textLength="30.0" lengthAdjust="spacingAndGlyphs" text-anchor="end">600.0</text><rect x="9" y="52" width="151" height="14" fill="#6a6ae8"/><path d="M9,66 L9,52 L160,52 L158,54 L11,54 L11,64 Z" fill="#000060"/><rect x="11" y="54" width="147" height="10" fill="#00009a"/><rect x="65.8" y="54" width="30" height="10" fill="#000060"/><rect x="65.8" y="54" width="29" height="9" fill="#6a6ae8"/><rect x="66.8" y="55" width="27" height="7" fill="#0000b4"/><rect x="80.3" y="54" width="1" height="10" fill="#000060"/><rect x="81.3" y="54" width="1" height="10" fill="#6a6ae8"/><text x="89.0" y="83.0" font-family="Liberation Mono" font-size="12.5" fill="#000" textLength="18.0" lengthAdjust="spacingAndGlyphs" text-anchor="middle">YAW</text><rect x="9" y="92" width="151" height="30" fill="#0000b4"/><text x="10.0" y="105.0" font-family="Liberation Mono" font-size="12.5" fill="#ffffff" textLength="36.0" lengthAdjust="spacingAndGlyphs">-600.0</text><text x="83.5" y="105.0" font-family="Liberation Mono" font-size="12.5" fill="#ffffff" textLength="36.0" lengthAdjust="spacingAndGlyphs" text-anchor="middle">-153.3</text><text x="158.5" y="105.0" font-family="Liberation Mono" font-size="12.5" fill="#ffffff" textLength="30.0" lengthAdjust="spacingAndGlyphs" text-anchor="end">600.0</text><rect x="9" y="108" width="151" height="14" fill="#6a6ae8"/><path d="M9,122 L9,108 L160,108 L158,110 L11,110 L11,120 Z" fill="#000060"/><rect x="11" y="110" width="147" height="10" fill="#00009a"/><rect x="54.6" y="110" width="30" height="10" fill="#000060"/><rect x="54.6" y="110" width="29" height="9" fill="#6a6ae8"/><rect x="55.6" y="111" width="27" height="7" fill="#0000b4"/><rect x="69.1" y="110" width="1" height="10" fill="#000060"/><rect x="70.1" y="110" width="1" height="10" fill="#6a6ae8"/></g><g transform="translate(3033,325)"><rect x="0" y="0" width="169" height="133" fill="#4b4ba6" rx="1"/><rect x="4.7" y="4.7" width="159.6" height="123.6" fill="#bbbbbb"/><rect x="4" y="7" width="72" height="23" fill="#22226a"/><path d="M4,30 L4,7 L76,7 L74.5,8.5 L5.5,8.5 L5.5,28.5 Z" fill="#8888cc"/><rect x="5.5" y="8.5" width="69.0" height="20.0" fill="#4b4ba6"/><path d="M26.1,21.0 V12.1 H34.5 V15.0" stroke="#ffffff" stroke-width="1.3" fill="none"/><rect x="30.1" y="15.1" width="8.4" height="9" stroke="#ffffff" stroke-width="1.3" fill="none"/><text x="38.5" y="22.5" font-family="Liberation Mono" font-size="12.5" fill="#ffffff" textLength="18.0" lengthAdjust="spacingAndGlyphs">FC1</text><text x="80.0" y="25.0" font-family="Liberation Mono" font-size="12.5" fill="#000" textLength="18.0" lengthAdjust="spacingAndGlyphs">PIT</text><text x="159.0" y="20.0" font-family="Liberation Mono" font-size="12.5" fill="#000" textLength="42.0" lengthAdjust="spacingAndGlyphs" text-anchor="end">ALIGNED</text><rect x="9" y="36" width="151" height="30" fill="#4b4ba6"/><text x="10.0" y="49.0" font-family="Liberation Mono" font-size="12.5" fill="#ffffff" textLength="42.0" lengthAdjust="spacingAndGlyphs">-4000.0</text><text x="83.5" y="49.0" font-family="Liberation Mono" font-size="12.5" fill="#ffffff" textLength="30.0" lengthAdjust="spacingAndGlyphs" text-anchor="middle">206.0</text><text x="158.5" y="49.0" font-family="Liberation Mono" font-size="12.5" fill="#ffffff" textLength="36.0" lengthAdjust="spacingAndGlyphs" text-anchor="end">4000.0</text><rect x="9" y="52" width="151" height="14" fill="#8888cc"/><path d="M9,66 L9,52 L160,52 L158,54 L11,54 L11,64 Z" fill="#22226a"/><rect x="11" y="54" width="147" height="10" fill="#3a3a8c"/><rect x="72.5" y="54" width="30" height="10" fill="#22226a"/><rect x="72.5" y="54" width="29" height="9" fill="#8888cc"/><rect x="73.5" y="55" width="27" height="7" fill="#4b4ba6"/><rect x="87.0" y="54" width="1" height="10" fill="#22226a"/><rect x="88.0" y="54" width="1" height="10" fill="#8888cc"/><text x="89.0" y="83.0" font-family="Liberation Mono" font-size="12.5" fill="#000" textLength="18.0" lengthAdjust="spacingAndGlyphs" text-anchor="middle">YAW</text><rect x="9" y="92" width="151" height="30" fill="#4b4ba6"/><text x="10.0" y="105.0" font-family="Liberation Mono" font-size="12.5" fill="#ffffff" textLength="42.0" lengthAdjust="spacingAndGlyphs">-7500.0</text><text x="83.5" y="105.0" font-family="Liberation Mono" font-size="12.5" fill="#ffffff" textLength="36.0" lengthAdjust="spacingAndGlyphs" text-anchor="middle">-142.0</text><text x="158.5" y="105.0" font-family="Liberation Mono" font-size="12.5" fill="#ffffff" textLength="36.0" lengthAdjust="spacingAndGlyphs" text-anchor="end">7500.0</text><rect x="9" y="108" width="151" height="14" fill="#8888cc"/><path d="M9,122 L9,108 L160,108 L158,110 L11,110 L11,120 Z" fill="#22226a"/><rect x="11" y="110" width="147" height="10" fill="#3a3a8c"/><rect x="68.4" y="110" width="30" height="10" fill="#22226a"/><rect x="68.4" y="110" width="29" height="9" fill="#8888cc"/><rect x="69.4" y="111" width="27" height="7" fill="#4b4ba6"/><rect x="82.9" y="110" width="1" height="10" fill="#22226a"/><rect x="83.9" y="110" width="1" height="10" fill="#8888cc"/></g><g transform="translate(1639,462.5)"><rect x="0" y="0" width="169" height="133" fill="#686868" rx="1"/><rect x="4.7" y="4.7" width="159.6" height="123.6" fill="#bbbbbb"/><rect x="4" y="7" width="72" height="23" fill="#333333"/><path d="M4,30 L4,7 L76,7 L74.5,8.5 L5.5,8.5 L5.5,28.5 Z" fill="#8e8e8e"/><rect x="5.5" y="8.5" width="69.0" height="20.0" fill="#5e5e5e"/><path d="M26.1,21.0 V12.1 H34.5 V15.0" stroke="#ffffff" stroke-width="1.3" fill="none"/><rect x="30.1" y="15.1" width="8.4" height="9" stroke="#ffffff" stroke-width="1.3" fill="none"/><text x="38.5" y="22.5" font-family="Liberation Mono" font-size="12.5" fill="#ffffff" textLength="18.0" lengthAdjust="spacingAndGlyphs">IM4</text><text x="80.0" y="25.0" font-family="Liberation Mono" font-size="12.5" fill="#000" textLength="18.0" lengthAdjust="spacingAndGlyphs">PIT</text><text x="159.0" y="20.0" font-family="Liberation Mono" font-size="12.5" fill="#000" textLength="42.0" lengthAdjust="spacingAndGlyphs" text-anchor="end">ALIGNED</text><rect x="9" y="36" width="151" height="30" fill="#5c5c5c"/><text x="10.0" y="49.0" font-family="Liberation Mono" font-size="12.5" fill="#ffffff" textLength="48.0" lengthAdjust="spacingAndGlyphs">-60000.0</text><text x="83.5" y="49.0" font-family="Liberation Mono" font-size="12.5" fill="#ffffff" textLength="30.0" lengthAdjust="spacingAndGlyphs" text-anchor="middle">531.4</text><text x="158.5" y="49.0" font-family="Liberation Mono" font-size="12.5" fill="#ffffff" textLength="42.0" lengthAdjust="spacingAndGlyphs" text-anchor="end">60000.0</text><rect x="9" y="52" width="151" height="14" fill="#8e8e8e"/><path d="M9,66 L9,52 L160,52 L158,54 L11,54 L11,64 Z" fill="#333333"/><rect x="11" y="54" width="147" height="10" fill="#555555"/><rect x="70.0" y="54" width="30" height="10" fill="#333333"/><rect x="70.0" y="54" width="29" height="9" fill="#8e8e8e"/><rect x="71.0" y="55" width="27" height="7" fill="#5c5c5c"/><rect x="84.5" y="54" width="1" height="10" fill="#333333"/><rect x="85.5" y="54" width="1" height="10" fill="#8e8e8e"/><text x="89.0" y="83.0" font-family="Liberation Mono" font-size="12.5" fill="#000" textLength="18.0" lengthAdjust="spacingAndGlyphs" text-anchor="middle">YAW</text><rect x="9" y="92" width="151" height="30" fill="#5c5c5c"/><text x="10.0" y="105.0" font-family="Liberation Mono" font-size="12.5" fill="#ffffff" textLength="48.0" lengthAdjust="spacingAndGlyphs">-60000.0</text><text x="83.5" y="105.0" font-family="Liberation Mono" font-size="12.5" fill="#ffffff" textLength="24.0" lengthAdjust="spacingAndGlyphs" text-anchor="middle">32.9</text><text x="158.5" y="105.0" font-family="Liberation Mono" font-size="12.5" fill="#ffffff" textLength="42.0" lengthAdjust="spacingAndGlyphs" text-anchor="end">60000.0</text><rect x="9" y="108" width="151" height="14" fill="#8e8e8e"/><path d="M9,122 L9,108 L160,108 L158,110 L11,110 L11,120 Z" fill="#333333"/><rect x="11" y="110" width="147" height="10" fill="#555555"/><rect x="69.5" y="110" width="30" height="10" fill="#333333"/><rect x="69.5" y="110" width="29" height="9" fill="#8e8e8e"/><rect x="70.5" y="111" width="27" height="7" fill="#5c5c5c"/><rect x="84.0" y="110" width="1" height="10" fill="#333333"/><rect x="85.0" y="110" width="1" height="10" fill="#8e8e8e"/></g><g transform="translate(1813,462.5)"><rect x="0" y="0" width="169" height="133" fill="#a4aaff" rx="1"/><rect x="4.7" y="4.7" width="159.6" height="123.6" fill="#bbbbbb"/><rect x="4" y="7" width="72" height="23" fill="#6870c0"/><path d="M4,30 L4,7 L76,7 L74.5,8.5 L5.5,8.5 L5.5,28.5 Z" fill="#d0d4ff"/><rect x="5.5" y="8.5" width="69.0" height="20.0" fill="#a2a8ff"/><path d="M26.1,21.0 V12.1 H34.5 V15.0" stroke="#ffffff" stroke-width="1.3" fill="none"/><rect x="30.1" y="15.1" width="8.4" height="9" stroke="#ffffff" stroke-width="1.3" fill="none"/><text x="38.5" y="22.5" font-family="Liberation Mono" font-size="12.5" fill="#ffffff" textLength="18.0" lengthAdjust="spacingAndGlyphs">JM3</text><text x="80.0" y="25.0" font-family="Liberation Mono" font-size="12.5" fill="#000" textLength="18.0" lengthAdjust="spacingAndGlyphs">PIT</text><text x="159.0" y="20.0" font-family="Liberation Mono" font-size="12.5" fill="#000" textLength="42.0" lengthAdjust="spacingAndGlyphs" text-anchor="end">ALIGNED</text><rect x="9" y="36" width="151" height="30" fill="#a2a8ff"/><text x="10.0" y="49.0" font-family="Liberation Mono" font-size="12.5" fill="#ffffff" textLength="42.0" lengthAdjust="spacingAndGlyphs">-6000.0</text><text x="83.5" y="49.0" font-family="Liberation Mono" font-size="12.5" fill="#ffffff" textLength="24.0" lengthAdjust="spacingAndGlyphs" text-anchor="middle">21.0</text><text x="158.5" y="49.0" font-family="Liberation Mono" font-size="12.5" fill="#ffffff" textLength="36.0" lengthAdjust="spacingAndGlyphs" text-anchor="end">6000.0</text><rect x="9" y="52" width="151" height="14" fill="#d0d4ff"/><path d="M9,66 L9,52 L160,52 L158,54 L11,54 L11,64 Z" fill="#6870c0"/><rect x="11" y="54" width="147" height="10" fill="#8890e0"/><rect x="69.7" y="54" width="30" height="10" fill="#6870c0"/><rect x="69.7" y="54" width="29" height="9" fill="#d0d4ff"/><rect x="70.7" y="55" width="27" height="7" fill="#a2a8ff"/><rect x="84.2" y="54" width="1" height="10" fill="#6870c0"/><rect x="85.2" y="54" width="1" height="10" fill="#d0d4ff"/><text x="89.0" y="83.0" font-family="Liberation Mono" font-size="12.5" fill="#000" textLength="18.0" lengthAdjust="spacingAndGlyphs" text-anchor="middle">YAW</text><rect x="9" y="92" width="151" height="30" fill="#a2a8ff"/><text x="10.0" y="105.0" font-family="Liberation Mono" font-size="12.5" fill="#ffffff" textLength="42.0" lengthAdjust="spacingAndGlyphs">-6000.0</text><text x="83.5" y="105.0" font-family="Liberation Mono" font-size="12.5" fill="#ffffff" textLength="30.0" lengthAdjust="spacingAndGlyphs" text-anchor="middle">246.5</text><text x="158.5" y="105.0" font-family="Liberation Mono" font-size="12.5" fill="#ffffff" textLength="36.0" lengthAdjust="spacingAndGlyphs" text-anchor="end">6000.0</text><rect x="9" y="108" width="151" height="14" fill="#d0d4ff"/><path d="M9,122 L9,108 L160,108 L158,110 L11,110 L11,120 Z" fill="#6870c0"/><rect x="11" y="110" width="147" height="10" fill="#8890e0"/><rect x="71.9" y="110" width="30" height="10" fill="#6870c0"/><rect x="71.9" y="110" width="29" height="9" fill="#d0d4ff"/><rect x="72.9" y="111" width="27" height="7" fill="#a2a8ff"/><rect x="86.4" y="110" width="1" height="10" fill="#6870c0"/><rect x="87.4" y="110" width="1" height="10" fill="#d0d4ff"/></g><g transform="translate(1987,462.5)"><rect x="0" y="0" width="169" height="133" fill="#cc5a00" rx="1"/><rect x="4.7" y="4.7" width="159.6" height="123.6" fill="#bbbbbb"/><rect x="4" y="7" width="72" height="23" fill="#703000"/><path d="M4,30 L4,7 L76,7 L74.5,8.5 L5.5,8.5 L5.5,28.5 Z" fill="#f0a060"/><rect x="5.5" y="8.5" width="69.0" height="20.0" fill="#cc5a00"/><path d="M26.1,21.0 V12.1 H34.5 V15.0" stroke="#ffffff" stroke-width="1.3" fill="none"/><rect x="30.1" y="15.1" width="8.4" height="9" stroke="#ffffff" stroke-width="1.3" fill="none"/><text x="38.5" y="22.5" font-family="Liberation Mono" font-size="12.5" fill="#ffffff" textLength="18.0" lengthAdjust="spacingAndGlyphs">SR3</text><text x="80.0" y="25.0" font-family="Liberation Mono" font-size="12.5" fill="#000" textLength="18.0" lengthAdjust="spacingAndGlyphs">PIT</text><text x="159.0" y="20.0" font-family="Liberation Mono" font-size="12.5" fill="#000" textLength="42.0" lengthAdjust="spacingAndGlyphs" text-anchor="end">ALIGNED</text><rect x="9" y="36" width="151" height="30" fill="#cc5a00"/><text x="10.0" y="49.0" font-family="Liberation Mono" font-size="12.5" fill="#ffffff" textLength="42.0" lengthAdjust="spacingAndGlyphs">-4200.0</text><text x="83.5" y="49.0" font-family="Liberation Mono" font-size="12.5" fill="#ffffff" textLength="30.0" lengthAdjust="spacingAndGlyphs" text-anchor="middle">457.6</text><text x="158.5" y="49.0" font-family="Liberation Mono" font-size="12.5" fill="#ffffff" textLength="36.0" lengthAdjust="spacingAndGlyphs" text-anchor="end">4200.0</text><rect x="9" y="52" width="151" height="14" fill="#f0a060"/><path d="M9,66 L9,52 L160,52 L158,54 L11,54 L11,64 Z" fill="#703000"/><rect x="11" y="54" width="147" height="10" fill="#a44600"/><rect x="75.9" y="54" width="30" height="10" fill="#703000"/><rect x="75.9" y="54" width="29" height="9" fill="#f0a060"/><rect x="76.9" y="55" width="27" height="7" fill="#cc5a00"/><rect x="90.4" y="54" width="1" height="10" fill="#703000"/><rect x="91.4" y="54" width="1" height="10" fill="#f0a060"/><text x="89.0" y="83.0" font-family="Liberation Mono" font-size="12.5" fill="#000" textLength="18.0" lengthAdjust="spacingAndGlyphs" text-anchor="middle">YAW</text><rect x="9" y="92" width="151" height="30" fill="#cc5a00"/><text x="10.0" y="105.0" font-family="Liberation Mono" font-size="12.5" fill="#ffffff" textLength="42.0" lengthAdjust="spacingAndGlyphs">-1600.0</text><text x="83.5" y="105.0" font-family="Liberation Mono" font-size="12.5" fill="#ffffff" textLength="36.0" lengthAdjust="spacingAndGlyphs" text-anchor="middle">-135.9</text><text x="158.5" y="105.0" font-family="Liberation Mono" font-size="12.5" fill="#ffffff" textLength="36.0" lengthAdjust="spacingAndGlyphs" text-anchor="end">1600.0</text><rect x="9" y="108" width="151" height="14" fill="#f0a060"/><path d="M9,122 L9,108 L160,108 L158,110 L11,110 L11,120 Z" fill="#703000"/><rect x="11" y="110" width="147" height="10" fill="#a44600"/><rect x="64.5" y="110" width="30" height="10" fill="#703000"/><rect x="64.5" y="110" width="29" height="9" fill="#f0a060"/><rect x="65.5" y="111" width="27" height="7" fill="#cc5a00"/><rect x="79.0" y="110" width="1" height="10" fill="#703000"/><rect x="80.0" y="110" width="1" height="10" fill="#f0a060"/></g><g transform="translate(2162,462.5)"><rect x="0" y="0" width="169" height="133" fill="#e8b02c" rx="1"/><rect x="4.7" y="4.7" width="159.6" height="123.6" fill="#bbbbbb"/><rect x="4" y="7" width="72" height="23" fill="#906810"/><path d="M4,30 L4,7 L76,7 L74.5,8.5 L5.5,8.5 L5.5,28.5 Z" fill="#f8d880"/><rect x="5.5" y="8.5" width="69.0" height="20.0" fill="#e8b02c"/><path d="M26.1,21.0 V12.1 H34.5 V15.0" stroke="#ffffff" stroke-width="1.3" fill="none"/><rect x="30.1" y="15.1" width="8.4" height="9" stroke="#ffffff" stroke-width="1.3" fill="none"/><text x="38.5" y="22.5" font-family="Liberation Mono" font-size="12.5" fill="#ffffff" textLength="18.0" lengthAdjust="spacingAndGlyphs">SR2</text><text x="80.0" y="25.0" font-family="Liberation Mono" font-size="12.5" fill="#000" textLength="18.0" lengthAdjust="spacingAndGlyphs">PIT</text><text x="159.0" y="20.0" font-family="Liberation Mono" font-size="12.5" fill="#000" textLength="42.0" lengthAdjust="spacingAndGlyphs" text-anchor="end">ALIGNED</text><rect x="9" y="36" width="151" height="30" fill="#e8b02c"/><text x="10.0" y="49.0" font-family="Liberation Mono" font-size="12.5" fill="#ffffff" textLength="42.0" lengthAdjust="spacingAndGlyphs">-4000.0</text><text x="83.5" y="49.0" font-family="Liberation Mono" font-size="12.5" fill="#ffffff" textLength="36.0" lengthAdjust="spacingAndGlyphs" text-anchor="middle">-172.4</text><text x="158.5" y="49.0" font-family="Liberation Mono" font-size="12.5" fill="#ffffff" textLength="36.0" lengthAdjust="spacingAndGlyphs" text-anchor="end">4000.0</text><rect x="9" y="52" width="151" height="14" fill="#f8d880"/><path d="M9,66 L9,52 L160,52 L158,54 L11,54 L11,64 Z" fill="#906810"/><rect x="11" y="54" width="147" height="10" fill="#c8961e"/><rect x="67.0" y="54" width="30" height="10" fill="#906810"/><rect x="67.0" y="54" width="29" height="9" fill="#f8d880"/><rect x="68.0" y="55" width="27" height="7" fill="#e8b02c"/><rect x="81.5" y="54" width="1" height="10" fill="#906810"/><rect x="82.5" y="54" width="1" height="10" fill="#f8d880"/><text x="89.0" y="83.0" font-family="Liberation Mono" font-size="12.5" fill="#000" textLength="18.0" lengthAdjust="spacingAndGlyphs" text-anchor="middle">YAW</text><rect x="9" y="92" width="151" height="30" fill="#e8b02c"/><text x="10.0" y="105.0" font-family="Liberation Mono" font-size="12.5" fill="#ffffff" textLength="42.0" lengthAdjust="spacingAndGlyphs">-7500.0</text><text x="83.5" y="105.0" font-family="Liberation Mono" font-size="12.5" fill="#ffffff" textLength="30.0" lengthAdjust="spacingAndGlyphs" text-anchor="middle">254.2</text><text x="158.5" y="105.0" font-family="Liberation Mono" font-size="12.5" fill="#ffffff" textLength="36.0" lengthAdjust="spacingAndGlyphs" text-anchor="end">7500.0</text><rect x="9" y="108" width="151" height="14" fill="#f8d880"/><path d="M9,122 L9,108 L160,108 L158,110 L11,110 L11,120 Z" fill="#906810"/><rect x="11" y="110" width="147" height="10" fill="#c8961e"/><rect x="71.5" y="110" width="30" height="10" fill="#906810"/><rect x="71.5" y="110" width="29" height="9" fill="#f8d880"/><rect x="72.5" y="111" width="27" height="7" fill="#e8b02c"/><rect x="86.0" y="110" width="1" height="10" fill="#906810"/><rect x="87.0" y="110" width="1" height="10" fill="#f8d880"/></g><g transform="translate(2337,462.5)"><rect x="0" y="0" width="169" height="133" fill="#7b5126" rx="1"/><rect x="4.7" y="4.7" width="159.6" height="123.6" fill="#bbbbbb"/><rect x="4" y="7" width="72" height="23" fill="#3e2408"/><path d="M4,30 L4,7 L76,7 L74.5,8.5 L5.5,8.5 L5.5,28.5 Z" fill="#c8a878"/><rect x="5.5" y="8.5" width="69.0" height="20.0" fill="#7b5126"/><path d="M26.1,21.0 V12.1 H34.5 V15.0" stroke="#ffffff" stroke-width="1.3" fill="none"/><rect x="30.1" y="15.1" width="8.4" height="9" stroke="#ffffff" stroke-width="1.3" fill="none"/><text x="38.5" y="22.5" font-family="Liberation Mono" font-size="12.5" fill="#ffffff" textLength="18.0" lengthAdjust="spacingAndGlyphs">OM1</text><text x="80.0" y="25.0" font-family="Liberation Mono" font-size="12.5" fill="#000" textLength="18.0" lengthAdjust="spacingAndGlyphs">PIT</text><text x="159.0" y="20.0" font-family="Liberation Mono" font-size="12.5" fill="#000" textLength="42.0" lengthAdjust="spacingAndGlyphs" text-anchor="end">ALIGNED</text><rect x="9" y="36" width="151" height="30" fill="#7b5126"/><text x="10.0" y="49.0" font-family="Liberation Mono" font-size="12.5" fill="#ffffff" textLength="42.0" lengthAdjust="spacingAndGlyphs">-6000.0</text><text x="83.5" y="49.0" font-family="Liberation Mono" font-size="12.5" fill="#ffffff" textLength="30.0" lengthAdjust="spacingAndGlyphs" text-anchor="middle">-74.0</text><text x="158.5" y="49.0" font-family="Liberation Mono" font-size="12.5" fill="#ffffff" textLength="36.0" lengthAdjust="spacingAndGlyphs" text-anchor="end">6000.0</text><rect x="9" y="52" width="151" height="14" fill="#c8a878"/><path d="M9,66 L9,52 L160,52 L158,54 L11,54 L11,64 Z" fill="#3e2408"/><rect x="11" y="54" width="147" height="10" fill="#6a4520"/><rect x="68.8" y="54" width="30" height="10" fill="#3e2408"/><rect x="68.8" y="54" width="29" height="9" fill="#c8a878"/><rect x="69.8" y="55" width="27" height="7" fill="#7b5126"/><rect x="83.3" y="54" width="1" height="10" fill="#3e2408"/><rect x="84.3" y="54" width="1" height="10" fill="#c8a878"/><text x="89.0" y="83.0" font-family="Liberation Mono" font-size="12.5" fill="#000" textLength="18.0" lengthAdjust="spacingAndGlyphs" text-anchor="middle">YAW</text><rect x="9" y="92" width="151" height="30" fill="#7b5126"/><text x="10.0" y="105.0" font-family="Liberation Mono" font-size="12.5" fill="#ffffff" textLength="42.0" lengthAdjust="spacingAndGlyphs">-6000.0</text><text x="83.5" y="105.0" font-family="Liberation Mono" font-size="12.5" fill="#ffffff" textLength="30.0" lengthAdjust="spacingAndGlyphs" text-anchor="middle">680.8</text><text x="158.5" y="105.0" font-family="Liberation Mono" font-size="12.5" fill="#ffffff" textLength="36.0" lengthAdjust="spacingAndGlyphs" text-anchor="end">6000.0</text><rect x="9" y="108" width="151" height="14" fill="#c8a878"/><path d="M9,122 L9,108 L160,108 L158,110 L11,110 L11,120 Z" fill="#3e2408"/><rect x="11" y="110" width="147" height="10" fill="#6a4520"/><rect x="76.1" y="110" width="30" height="10" fill="#3e2408"/><rect x="76.1" y="110" width="29" height="9" fill="#c8a878"/><rect x="77.1" y="111" width="27" height="7" fill="#7b5126"/><rect x="90.6" y="110" width="1" height="10" fill="#3e2408"/><rect x="91.6" y="110" width="1" height="10" fill="#c8a878"/></g><g transform="translate(2511,462.5)"><rect x="0" y="0" width="169" height="133" fill="#7b5126" rx="1"/><rect x="4.7" y="4.7" width="159.6" height="123.6" fill="#bbbbbb"/><rect x="4" y="7" width="72" height="23" fill="#3e2408"/><path d="M4,30 L4,7 L76,7 L74.5,8.5 L5.5,8.5 L5.5,28.5 Z" fill="#c8a878"/><rect x="5.5" y="8.5" width="69.0" height="20.0" fill="#7b5126"/><path d="M26.1,21.0 V12.1 H34.5 V15.0" stroke="#ffffff" stroke-width="1.3" fill="none"/><rect x="30.1" y="15.1" width="8.4" height="9" stroke="#ffffff" stroke-width="1.3" fill="none"/><text x="38.5" y="22.5" font-family="Liberation Mono" font-size="12.5" fill="#ffffff" textLength="18.0" lengthAdjust="spacingAndGlyphs">OM2</text><text x="80.0" y="25.0" font-family="Liberation Mono" font-size="12.5" fill="#000" textLength="18.0" lengthAdjust="spacingAndGlyphs">PIT</text><text x="159.0" y="20.0" font-family="Liberation Mono" font-size="12.5" fill="#000" textLength="42.0" lengthAdjust="spacingAndGlyphs" text-anchor="end">ALIGNED</text><rect x="9" y="36" width="151" height="30" fill="#7b5126"/><text x="10.0" y="49.0" font-family="Liberation Mono" font-size="12.5" fill="#ffffff" textLength="42.0" lengthAdjust="spacingAndGlyphs">-6000.0</text><text x="83.5" y="49.0" font-family="Liberation Mono" font-size="12.5" fill="#ffffff" textLength="42.0" lengthAdjust="spacingAndGlyphs" text-anchor="middle">-1431.6</text><text x="158.5" y="49.0" font-family="Liberation Mono" font-size="12.5" fill="#ffffff" textLength="36.0" lengthAdjust="spacingAndGlyphs" text-anchor="end">6000.0</text><rect x="9" y="52" width="151" height="14" fill="#c8a878"/><path d="M9,66 L9,52 L160,52 L158,54 L11,54 L11,64 Z" fill="#3e2408"/><rect x="11" y="54" width="147" height="10" fill="#6a4520"/><rect x="55.5" y="54" width="30" height="10" fill="#3e2408"/><rect x="55.5" y="54" width="29" height="9" fill="#c8a878"/><rect x="56.5" y="55" width="27" height="7" fill="#7b5126"/><rect x="70.0" y="54" width="1" height="10" fill="#3e2408"/><rect x="71.0" y="54" width="1" height="10" fill="#c8a878"/><text x="89.0" y="83.0" font-family="Liberation Mono" font-size="12.5" fill="#000" textLength="18.0" lengthAdjust="spacingAndGlyphs" text-anchor="middle">YAW</text><rect x="9" y="92" width="151" height="30" fill="#7b5126"/><text x="10.0" y="105.0" font-family="Liberation Mono" font-size="12.5" fill="#ffffff" textLength="42.0" lengthAdjust="spacingAndGlyphs">-6000.0</text><text x="83.5" y="105.0" font-family="Liberation Mono" font-size="12.5" fill="#ffffff" textLength="36.0" lengthAdjust="spacingAndGlyphs" text-anchor="middle">-327.6</text><text x="158.5" y="105.0" font-family="Liberation Mono" font-size="12.5" fill="#ffffff" textLength="36.0" lengthAdjust="spacingAndGlyphs" text-anchor="end">6000.0</text><rect x="9" y="108" width="151" height="14" fill="#c8a878"/><path d="M9,122 L9,108 L160,108 L158,110 L11,110 L11,120 Z" fill="#3e2408"/><rect x="11" y="110" width="147" height="10" fill="#6a4520"/><rect x="66.3" y="110" width="30" height="10" fill="#3e2408"/><rect x="66.3" y="110" width="29" height="9" fill="#c8a878"/><rect x="67.3" y="111" width="27" height="7" fill="#7b5126"/><rect x="80.8" y="110" width="1" height="10" fill="#3e2408"/><rect x="81.8" y="110" width="1" height="10" fill="#c8a878"/></g><g transform="translate(2685,462.5)"><rect x="0" y="0" width="169" height="133" fill="#5a9af4" rx="1"/><rect x="4.7" y="4.7" width="159.6" height="123.6" fill="#bbbbbb"/><rect x="4" y="7" width="72" height="23" fill="#204c98"/><path d="M4,30 L4,7 L76,7 L74.5,8.5 L5.5,8.5 L5.5,28.5 Z" fill="#9ac0ff"/><rect x="5.5" y="8.5" width="69.0" height="20.0" fill="#4a88e6"/><path d="M26.1,21.0 V12.1 H34.5 V15.0" stroke="#ffffff" stroke-width="1.3" fill="none"/><rect x="30.1" y="15.1" width="8.4" height="9" stroke="#ffffff" stroke-width="1.3" fill="none"/><text x="38.5" y="22.5" font-family="Liberation Mono" font-size="12.5" fill="#ffffff" textLength="18.0" lengthAdjust="spacingAndGlyphs">ZM1</text><text x="80.0" y="25.0" font-family="Liberation Mono" font-size="12.5" fill="#000" textLength="18.0" lengthAdjust="spacingAndGlyphs">PIT</text><text x="159.0" y="20.0" font-family="Liberation Mono" font-size="12.5" fill="#000" textLength="42.0" lengthAdjust="spacingAndGlyphs" text-anchor="end">ALIGNED</text><rect x="9" y="36" width="151" height="30" fill="#4a88e6"/><text x="10.0" y="49.0" font-family="Liberation Mono" font-size="12.5" fill="#ffffff" textLength="42.0" lengthAdjust="spacingAndGlyphs">-6000.0</text><text x="83.5" y="49.0" font-family="Liberation Mono" font-size="12.5" fill="#ffffff" textLength="30.0" lengthAdjust="spacingAndGlyphs" text-anchor="middle">536.0</text><text x="158.5" y="49.0" font-family="Liberation Mono" font-size="12.5" fill="#ffffff" textLength="36.0" lengthAdjust="spacingAndGlyphs" text-anchor="end">6000.0</text><rect x="9" y="52" width="151" height="14" fill="#9ac0ff"/><path d="M9,66 L9,52 L160,52 L158,54 L11,54 L11,64 Z" fill="#204c98"/><rect x="11" y="54" width="147" height="10" fill="#3a70c8"/><rect x="74.7" y="54" width="30" height="10" fill="#204c98"/><rect x="74.7" y="54" width="29" height="9" fill="#9ac0ff"/><rect x="75.7" y="55" width="27" height="7" fill="#4a88e6"/><rect x="89.2" y="54" width="1" height="10" fill="#204c98"/><rect x="90.2" y="54" width="1" height="10" fill="#9ac0ff"/><text x="89.0" y="83.0" font-family="Liberation Mono" font-size="12.5" fill="#000" textLength="18.0" lengthAdjust="spacingAndGlyphs" text-anchor="middle">YAW</text><rect x="9" y="92" width="151" height="30" fill="#4a88e6"/><text x="10.0" y="105.0" font-family="Liberation Mono" font-size="12.5" fill="#ffffff" textLength="42.0" lengthAdjust="spacingAndGlyphs">-6000.0</text><text x="83.5" y="105.0" font-family="Liberation Mono" font-size="12.5" fill="#ffffff" textLength="18.0" lengthAdjust="spacingAndGlyphs" text-anchor="middle">8.0</text><text x="158.5" y="105.0" font-family="Liberation Mono" font-size="12.5" fill="#ffffff" textLength="36.0" lengthAdjust="spacingAndGlyphs" text-anchor="end">6000.0</text><rect x="9" y="108" width="151" height="14" fill="#9ac0ff"/><path d="M9,122 L9,108 L160,108 L158,110 L11,110 L11,120 Z" fill="#204c98"/><rect x="11" y="110" width="147" height="10" fill="#3a70c8"/><rect x="69.6" y="110" width="30" height="10" fill="#204c98"/><rect x="69.6" y="110" width="29" height="9" fill="#9ac0ff"/><rect x="70.6" y="111" width="27" height="7" fill="#4a88e6"/><rect x="84.1" y="110" width="1" height="10" fill="#204c98"/><rect x="85.1" y="110" width="1" height="10" fill="#9ac0ff"/></g><g transform="translate(2859,462.5)"><rect x="0" y="0" width="169" height="133" fill="#5a9af4" rx="1"/><rect x="4.7" y="4.7" width="159.6" height="123.6" fill="#bbbbbb"/><rect x="4" y="7" width="72" height="23" fill="#204c98"/><path d="M4,30 L4,7 L76,7 L74.5,8.5 L5.5,8.5 L5.5,28.5 Z" fill="#9ac0ff"/><rect x="5.5" y="8.5" width="69.0" height="20.0" fill="#4a88e6"/><path d="M26.1,21.0 V12.1 H34.5 V15.0" stroke="#ffffff" stroke-width="1.3" fill="none"/><rect x="30.1" y="15.1" width="8.4" height="9" stroke="#ffffff" stroke-width="1.3" fill="none"/><text x="38.5" y="22.5" font-family="Liberation Mono" font-size="12.5" fill="#ffffff" textLength="18.0" lengthAdjust="spacingAndGlyphs">ZM3</text><text x="80.0" y="25.0" font-family="Liberation Mono" font-size="12.5" fill="#000" textLength="18.0" lengthAdjust="spacingAndGlyphs">PIT</text><text x="159.0" y="20.0" font-family="Liberation Mono" font-size="12.5" fill="#000" textLength="42.0" lengthAdjust="spacingAndGlyphs" text-anchor="end">ALIGNED</text><rect x="9" y="36" width="151" height="30" fill="#4a88e6"/><text x="10.0" y="49.0" font-family="Liberation Mono" font-size="12.5" fill="#ffffff" textLength="42.0" lengthAdjust="spacingAndGlyphs">-6000.0</text><text x="83.5" y="49.0" font-family="Liberation Mono" font-size="12.5" fill="#ffffff" textLength="36.0" lengthAdjust="spacingAndGlyphs" text-anchor="middle">-545.0</text><text x="158.5" y="49.0" font-family="Liberation Mono" font-size="12.5" fill="#ffffff" textLength="36.0" lengthAdjust="spacingAndGlyphs" text-anchor="end">6000.0</text><rect x="9" y="52" width="151" height="14" fill="#9ac0ff"/><path d="M9,66 L9,52 L160,52 L158,54 L11,54 L11,64 Z" fill="#204c98"/><rect x="11" y="54" width="147" height="10" fill="#3a70c8"/><rect x="64.2" y="54" width="30" height="10" fill="#204c98"/><rect x="64.2" y="54" width="29" height="9" fill="#9ac0ff"/><rect x="65.2" y="55" width="27" height="7" fill="#4a88e6"/><rect x="78.7" y="54" width="1" height="10" fill="#204c98"/><rect x="79.7" y="54" width="1" height="10" fill="#9ac0ff"/><text x="89.0" y="83.0" font-family="Liberation Mono" font-size="12.5" fill="#000" textLength="18.0" lengthAdjust="spacingAndGlyphs" text-anchor="middle">YAW</text><rect x="9" y="92" width="151" height="30" fill="#4a88e6"/><text x="10.0" y="105.0" font-family="Liberation Mono" font-size="12.5" fill="#ffffff" textLength="42.0" lengthAdjust="spacingAndGlyphs">-6000.0</text><text x="83.5" y="105.0" font-family="Liberation Mono" font-size="12.5" fill="#ffffff" textLength="36.0" lengthAdjust="spacingAndGlyphs" text-anchor="middle">-365.0</text><text x="158.5" y="105.0" font-family="Liberation Mono" font-size="12.5" fill="#ffffff" textLength="36.0" lengthAdjust="spacingAndGlyphs" text-anchor="end">6000.0</text><rect x="9" y="108" width="151" height="14" fill="#9ac0ff"/><path d="M9,122 L9,108 L160,108 L158,110 L11,110 L11,120 Z" fill="#204c98"/><rect x="11" y="110" width="147" height="10" fill="#3a70c8"/><rect x="65.9" y="110" width="30" height="10" fill="#204c98"/><rect x="65.9" y="110" width="29" height="9" fill="#9ac0ff"/><rect x="66.9" y="111" width="27" height="7" fill="#4a88e6"/><rect x="80.4" y="110" width="1" height="10" fill="#204c98"/><rect x="81.4" y="110" width="1" height="10" fill="#9ac0ff"/></g><g transform="translate(3033,462.5)"><rect x="0" y="0" width="169" height="133" fill="#5a9af4" rx="1"/><rect x="4.7" y="4.7" width="159.6" height="123.6" fill="#bbbbbb"/><rect x="4" y="7" width="72" height="23" fill="#204c98"/><path d="M4,30 L4,7 L76,7 L74.5,8.5 L5.5,8.5 L5.5,28.5 Z" fill="#9ac0ff"/><rect x="5.5" y="8.5" width="69.0" height="20.0" fill="#4a88e6"/><path d="M26.1,21.0 V12.1 H34.5 V15.0" stroke="#ffffff" stroke-width="1.3" fill="none"/><rect x="30.1" y="15.1" width="8.4" height="9" stroke="#ffffff" stroke-width="1.3" fill="none"/><text x="38.5" y="22.5" font-family="Liberation Mono" font-size="12.5" fill="#ffffff" textLength="18.0" lengthAdjust="spacingAndGlyphs">ZM5</text><text x="80.0" y="25.0" font-family="Liberation Mono" font-size="12.5" fill="#000" textLength="18.0" lengthAdjust="spacingAndGlyphs">PIT</text><text x="159.0" y="20.0" font-family="Liberation Mono" font-size="12.5" fill="#000" textLength="42.0" lengthAdjust="spacingAndGlyphs" text-anchor="end">ALIGNED</text><rect x="9" y="36" width="151" height="30" fill="#4a88e6"/><text x="10.0" y="49.0" font-family="Liberation Mono" font-size="12.5" fill="#ffffff" textLength="42.0" lengthAdjust="spacingAndGlyphs">-6000.0</text><text x="83.5" y="49.0" font-family="Liberation Mono" font-size="12.5" fill="#ffffff" textLength="36.0" lengthAdjust="spacingAndGlyphs" text-anchor="middle">-258.0</text><text x="158.5" y="49.0" font-family="Liberation Mono" font-size="12.5" fill="#ffffff" textLength="36.0" lengthAdjust="spacingAndGlyphs" text-anchor="end">6000.0</text><rect x="9" y="52" width="151" height="14" fill="#9ac0ff"/><path d="M9,66 L9,52 L160,52 L158,54 L11,54 L11,64 Z" fill="#204c98"/><rect x="11" y="54" width="147" height="10" fill="#3a70c8"/><rect x="67.0" y="54" width="30" height="10" fill="#204c98"/><rect x="67.0" y="54" width="29" height="9" fill="#9ac0ff"/><rect x="68.0" y="55" width="27" height="7" fill="#4a88e6"/><rect x="81.5" y="54" width="1" height="10" fill="#204c98"/><rect x="82.5" y="54" width="1" height="10" fill="#9ac0ff"/><text x="89.0" y="83.0" font-family="Liberation Mono" font-size="12.5" fill="#000" textLength="18.0" lengthAdjust="spacingAndGlyphs" text-anchor="middle">YAW</text><rect x="9" y="92" width="151" height="30" fill="#4a88e6"/><text x="10.0" y="105.0" font-family="Liberation Mono" font-size="12.5" fill="#ffffff" textLength="42.0" lengthAdjust="spacingAndGlyphs">-6000.0</text><text x="83.5" y="105.0" font-family="Liberation Mono" font-size="12.5" fill="#ffffff" textLength="36.0" lengthAdjust="spacingAndGlyphs" text-anchor="middle">-761.0</text><text x="158.5" y="105.0" font-family="Liberation Mono" font-size="12.5" fill="#ffffff" textLength="36.0" lengthAdjust="spacingAndGlyphs" text-anchor="end">6000.0</text><rect x="9" y="108" width="151" height="14" fill="#9ac0ff"/><path d="M9,122 L9,108 L160,108 L158,110 L11,110 L11,120 Z" fill="#204c98"/><rect x="11" y="110" width="147" height="10" fill="#3a70c8"/><rect x="62.1" y="110" width="30" height="10" fill="#204c98"/><rect x="62.1" y="110" width="29" height="9" fill="#9ac0ff"/><rect x="63.1" y="111" width="27" height="7" fill="#4a88e6"/><rect x="76.6" y="110" width="1" height="10" fill="#204c98"/><rect x="77.6" y="110" width="1" height="10" fill="#9ac0ff"/></g><g transform="translate(1639,599.5)"><rect x="0" y="0" width="169" height="133" fill="#7b5126" rx="1"/><rect x="4.7" y="4.7" width="159.6" height="123.6" fill="#bbbbbb"/><rect x="4" y="7" width="72" height="23" fill="#3e2408"/><path d="M4,30 L4,7 L76,7 L74.5,8.5 L5.5,8.5 L5.5,28.5 Z" fill="#c8a878"/><rect x="5.5" y="8.5" width="69.0" height="20.0" fill="#7b5126"/><path d="M26.1,21.0 V12.1 H34.5 V15.0" stroke="#ffffff" stroke-width="1.3" fill="none"/><rect x="30.1" y="15.1" width="8.4" height="9" stroke="#ffffff" stroke-width="1.3" fill="none"/><text x="38.5" y="22.5" font-family="Liberation Mono" font-size="12.5" fill="#ffffff" textLength="18.0" lengthAdjust="spacingAndGlyphs">RM1</text><text x="80.0" y="25.0" font-family="Liberation Mono" font-size="12.5" fill="#000" textLength="18.0" lengthAdjust="spacingAndGlyphs">PIT</text><text x="159.0" y="20.0" font-family="Liberation Mono" font-size="12.5" fill="#000" textLength="42.0" lengthAdjust="spacingAndGlyphs" text-anchor="end">ALIGNED</text><rect x="9" y="36" width="151" height="30" fill="#7b5126"/><text x="10.0" y="49.0" font-family="Liberation Mono" font-size="12.5" fill="#ffffff" textLength="42.0" lengthAdjust="spacingAndGlyphs">-6000.0</text><text x="83.5" y="49.0" font-family="Liberation Mono" font-size="12.5" fill="#ffffff" textLength="36.0" lengthAdjust="spacingAndGlyphs" text-anchor="middle">-196.0</text><text x="158.5" y="49.0" font-family="Liberation Mono" font-size="12.5" fill="#ffffff" textLength="36.0" lengthAdjust="spacingAndGlyphs" text-anchor="end">6000.0</text><rect x="9" y="52" width="151" height="14" fill="#c8a878"/><path d="M9,66 L9,52 L160,52 L158,54 L11,54 L11,64 Z" fill="#3e2408"/><rect x="11" y="54" width="147" height="10" fill="#6a4520"/><rect x="67.6" y="54" width="30" height="10" fill="#3e2408"/><rect x="67.6" y="54" width="29" height="9" fill="#c8a878"/><rect x="68.6" y="55" width="27" height="7" fill="#7b5126"/><rect x="82.1" y="54" width="1" height="10" fill="#3e2408"/><rect x="83.1" y="54" width="1" height="10" fill="#c8a878"/><text x="89.0" y="83.0" font-family="Liberation Mono" font-size="12.5" fill="#000" textLength="18.0" lengthAdjust="spacingAndGlyphs" text-anchor="middle">YAW</text><rect x="9" y="92" width="151" height="30" fill="#7b5126"/><text x="10.0" y="105.0" font-family="Liberation Mono" font-size="12.5" fill="#ffffff" textLength="42.0" lengthAdjust="spacingAndGlyphs">-6000.0</text><text x="83.5" y="105.0" font-family="Liberation Mono" font-size="12.5" fill="#ffffff" textLength="30.0" lengthAdjust="spacingAndGlyphs" text-anchor="middle">281.8</text><text x="158.5" y="105.0" font-family="Liberation Mono" font-size="12.5" fill="#ffffff" textLength="36.0" lengthAdjust="spacingAndGlyphs" text-anchor="end">6000.0</text><rect x="9" y="108" width="151" height="14" fill="#c8a878"/><path d="M9,122 L9,108 L160,108 L158,110 L11,110 L11,120 Z" fill="#3e2408"/><rect x="11" y="110" width="147" height="10" fill="#6a4520"/><rect x="72.2" y="110" width="30" height="10" fill="#3e2408"/><rect x="72.2" y="110" width="29" height="9" fill="#c8a878"/><rect x="73.2" y="111" width="27" height="7" fill="#7b5126"/><rect x="86.7" y="110" width="1" height="10" fill="#3e2408"/><rect x="87.7" y="110" width="1" height="10" fill="#c8a878"/></g><g transform="translate(1813,599.5)"><rect x="0" y="0" width="169" height="133" fill="#7b5126" rx="1"/><rect x="4.7" y="4.7" width="159.6" height="123.6" fill="#bbbbbb"/><rect x="4" y="7" width="72" height="23" fill="#3e2408"/><path d="M4,30 L4,7 L76,7 L74.5,8.5 L5.5,8.5 L5.5,28.5 Z" fill="#c8a878"/><rect x="5.5" y="8.5" width="69.0" height="20.0" fill="#7b5126"/><path d="M26.1,21.0 V12.1 H34.5 V15.0" stroke="#ffffff" stroke-width="1.3" fill="none"/><rect x="30.1" y="15.1" width="8.4" height="9" stroke="#ffffff" stroke-width="1.3" fill="none"/><text x="38.5" y="22.5" font-family="Liberation Mono" font-size="12.5" fill="#ffffff" textLength="18.0" lengthAdjust="spacingAndGlyphs">RM2</text><text x="80.0" y="25.0" font-family="Liberation Mono" font-size="12.5" fill="#000" textLength="18.0" lengthAdjust="spacingAndGlyphs">PIT</text><text x="159.0" y="20.0" font-family="Liberation Mono" font-size="12.5" fill="#000" textLength="42.0" lengthAdjust="spacingAndGlyphs" text-anchor="end">ALIGNED</text><rect x="9" y="36" width="151" height="30" fill="#7b5126"/><text x="10.0" y="49.0" font-family="Liberation Mono" font-size="12.5" fill="#ffffff" textLength="42.0" lengthAdjust="spacingAndGlyphs">-6000.0</text><text x="83.5" y="49.0" font-family="Liberation Mono" font-size="12.5" fill="#ffffff" textLength="30.0" lengthAdjust="spacingAndGlyphs" text-anchor="middle">910.0</text><text x="158.5" y="49.0" font-family="Liberation Mono" font-size="12.5" fill="#ffffff" textLength="36.0" lengthAdjust="spacingAndGlyphs" text-anchor="end">6000.0</text><rect x="9" y="52" width="151" height="14" fill="#c8a878"/><path d="M9,66 L9,52 L160,52 L158,54 L11,54 L11,64 Z" fill="#3e2408"/><rect x="11" y="54" width="147" height="10" fill="#6a4520"/><rect x="78.4" y="54" width="30" height="10" fill="#3e2408"/><rect x="78.4" y="54" width="29" height="9" fill="#c8a878"/><rect x="79.4" y="55" width="27" height="7" fill="#7b5126"/><rect x="92.9" y="54" width="1" height="10" fill="#3e2408"/><rect x="93.9" y="54" width="1" height="10" fill="#c8a878"/><text x="89.0" y="83.0" font-family="Liberation Mono" font-size="12.5" fill="#000" textLength="18.0" lengthAdjust="spacingAndGlyphs" text-anchor="middle">YAW</text><rect x="9" y="92" width="151" height="30" fill="#7b5126"/><text x="10.0" y="105.0" font-family="Liberation Mono" font-size="12.5" fill="#ffffff" textLength="42.0" lengthAdjust="spacingAndGlyphs">-6000.0</text><text x="83.5" y="105.0" font-family="Liberation Mono" font-size="12.5" fill="#ffffff" textLength="36.0" lengthAdjust="spacingAndGlyphs" text-anchor="middle">-490.0</text><text x="158.5" y="105.0" font-family="Liberation Mono" font-size="12.5" fill="#ffffff" textLength="36.0" lengthAdjust="spacingAndGlyphs" text-anchor="end">6000.0</text><rect x="9" y="108" width="151" height="14" fill="#c8a878"/><path d="M9,122 L9,108 L160,108 L158,110 L11,110 L11,120 Z" fill="#3e2408"/><rect x="11" y="110" width="147" height="10" fill="#6a4520"/><rect x="64.7" y="110" width="30" height="10" fill="#3e2408"/><rect x="64.7" y="110" width="29" height="9" fill="#c8a878"/><rect x="65.7" y="111" width="27" height="7" fill="#7b5126"/><rect x="79.2" y="110" width="1" height="10" fill="#3e2408"/><rect x="80.2" y="110" width="1" height="10" fill="#c8a878"/></g><g transform="translate(1987,599.5)"><rect x="0" y="0" width="169" height="133" fill="#7b5126" rx="1"/><rect x="4.7" y="4.7" width="159.6" height="123.6" fill="#bbbbbb"/><rect x="4" y="7" width="72" height="23" fill="#3e2408"/><path d="M4,30 L4,7 L76,7 L74.5,8.5 L5.5,8.5 L5.5,28.5 Z" fill="#c8a878"/><rect x="5.5" y="8.5" width="69.0" height="20.0" fill="#7b5126"/><path d="M26.1,21.0 V12.1 H34.5 V15.0" stroke="#ffffff" stroke-width="1.3" fill="none"/><rect x="30.1" y="15.1" width="8.4" height="9" stroke="#ffffff" stroke-width="1.3" fill="none"/><text x="38.5" y="22.5" font-family="Liberation Mono" font-size="12.5" fill="#ffffff" textLength="18.0" lengthAdjust="spacingAndGlyphs">PM1</text><text x="80.0" y="25.0" font-family="Liberation Mono" font-size="12.5" fill="#000" textLength="18.0" lengthAdjust="spacingAndGlyphs">PIT</text><text x="159.0" y="20.0" font-family="Liberation Mono" font-size="12.5" fill="#000" textLength="42.0" lengthAdjust="spacingAndGlyphs" text-anchor="end">ALIGNED</text><rect x="9" y="36" width="151" height="30" fill="#7b5126"/><text x="10.0" y="49.0" font-family="Liberation Mono" font-size="12.5" fill="#ffffff" textLength="42.0" lengthAdjust="spacingAndGlyphs">-6000.0</text><text x="83.5" y="49.0" font-family="Liberation Mono" font-size="12.5" fill="#ffffff" textLength="36.0" lengthAdjust="spacingAndGlyphs" text-anchor="middle">-800.1</text><text x="158.5" y="49.0" font-family="Liberation Mono" font-size="12.5" fill="#ffffff" textLength="36.0" lengthAdjust="spacingAndGlyphs" text-anchor="end">6000.0</text><rect x="9" y="52" width="151" height="14" fill="#c8a878"/><path d="M9,66 L9,52 L160,52 L158,54 L11,54 L11,64 Z" fill="#3e2408"/><rect x="11" y="54" width="147" height="10" fill="#6a4520"/><rect x="61.7" y="54" width="30" height="10" fill="#3e2408"/><rect x="61.7" y="54" width="29" height="9" fill="#c8a878"/><rect x="62.7" y="55" width="27" height="7" fill="#7b5126"/><rect x="76.2" y="54" width="1" height="10" fill="#3e2408"/><rect x="77.2" y="54" width="1" height="10" fill="#c8a878"/><text x="89.0" y="83.0" font-family="Liberation Mono" font-size="12.5" fill="#000" textLength="18.0" lengthAdjust="spacingAndGlyphs" text-anchor="middle">YAW</text><rect x="9" y="92" width="151" height="30" fill="#7b5126"/><text x="10.0" y="105.0" font-family="Liberation Mono" font-size="12.5" fill="#ffffff" textLength="42.0" lengthAdjust="spacingAndGlyphs">-6000.0</text><text x="83.5" y="105.0" font-family="Liberation Mono" font-size="12.5" fill="#ffffff" textLength="36.0" lengthAdjust="spacingAndGlyphs" text-anchor="middle">-256.0</text><text x="158.5" y="105.0" font-family="Liberation Mono" font-size="12.5" fill="#ffffff" textLength="36.0" lengthAdjust="spacingAndGlyphs" text-anchor="end">6000.0</text><rect x="9" y="108" width="151" height="14" fill="#c8a878"/><path d="M9,122 L9,108 L160,108 L158,110 L11,110 L11,120 Z" fill="#3e2408"/><rect x="11" y="110" width="147" height="10" fill="#6a4520"/><rect x="67.0" y="110" width="30" height="10" fill="#3e2408"/><rect x="67.0" y="110" width="29" height="9" fill="#c8a878"/><rect x="68.0" y="111" width="27" height="7" fill="#7b5126"/><rect x="81.5" y="110" width="1" height="10" fill="#3e2408"/><rect x="82.5" y="110" width="1" height="10" fill="#c8a878"/></g><g transform="translate(2162,599.5)"><rect x="0" y="0" width="169" height="133" fill="#e8b02c" rx="1"/><rect x="4.7" y="4.7" width="159.6" height="123.6" fill="#bbbbbb"/><rect x="4" y="7" width="72" height="23" fill="#906810"/><path d="M4,30 L4,7 L76,7 L74.5,8.5 L5.5,8.5 L5.5,28.5 Z" fill="#f8d880"/><rect x="5.5" y="8.5" width="69.0" height="20.0" fill="#e8b02c"/><path d="M26.1,21.0 V12.1 H34.5 V15.0" stroke="#ffffff" stroke-width="1.3" fill="none"/><rect x="30.1" y="15.1" width="8.4" height="9" stroke="#ffffff" stroke-width="1.3" fill="none"/><text x="38.5" y="22.5" font-family="Liberation Mono" font-size="12.5" fill="#ffffff" textLength="18.0" lengthAdjust="spacingAndGlyphs">SRM</text><text x="80.0" y="25.0" font-family="Liberation Mono" font-size="12.5" fill="#000" textLength="18.0" lengthAdjust="spacingAndGlyphs">PIT</text><rect x="115.5" y="7.5" width="48" height="19" fill="none" stroke="#e01010" stroke-width="1.6"/><svg x="116" y="8" width="47" height="18"><text x="0" y="12.5" font-family="Liberation Mono" font-size="12.5" textLength="48" lengthAdjust="spacingAndGlyphs">MISALIGN</text></svg><rect x="9" y="36" width="151" height="30" fill="#e8b02c"/><text x="10.0" y="49.0" font-family="Liberation Mono" font-size="12.5" fill="#ffffff" textLength="42.0" lengthAdjust="spacingAndGlyphs">-4000.0</text><text x="83.5" y="49.0" font-family="Liberation Mono" font-size="12.5" fill="#ffffff" textLength="36.0" lengthAdjust="spacingAndGlyphs" text-anchor="middle">2483.5</text><text x="158.5" y="49.0" font-family="Liberation Mono" font-size="12.5" fill="#ffffff" textLength="36.0" lengthAdjust="spacingAndGlyphs" text-anchor="end">4000.0</text><rect x="9" y="52" width="151" height="14" fill="#f8d880"/><path d="M9,66 L9,52 L160,52 L158,54 L11,54 L11,64 Z" fill="#906810"/><rect x="11" y="54" width="147" height="10" fill="#c8961e"/><rect x="105.8" y="54" width="30" height="10" fill="#906810"/><rect x="105.8" y="54" width="29" height="9" fill="#f8d880"/><rect x="106.8" y="55" width="27" height="7" fill="#e8b02c"/><rect x="120.3" y="54" width="1" height="10" fill="#906810"/><rect x="121.3" y="54" width="1" height="10" fill="#f8d880"/><text x="89.0" y="83.0" font-family="Liberation Mono" font-size="12.5" fill="#000" textLength="18.0" lengthAdjust="spacingAndGlyphs" text-anchor="middle">YAW</text><rect x="9" y="92" width="151" height="30" fill="#e8b02c"/><text x="10.0" y="105.0" font-family="Liberation Mono" font-size="12.5" fill="#ffffff" textLength="42.0" lengthAdjust="spacingAndGlyphs">-7500.0</text><text x="83.5" y="105.0" font-family="Liberation Mono" font-size="12.5" fill="#ffffff" textLength="42.0" lengthAdjust="spacingAndGlyphs" text-anchor="middle">-3803.2</text><text x="158.5" y="105.0" font-family="Liberation Mono" font-size="12.5" fill="#ffffff" textLength="36.0" lengthAdjust="spacingAndGlyphs" text-anchor="end">7500.0</text><rect x="9" y="108" width="151" height="14" fill="#f8d880"/><path d="M9,122 L9,108 L160,108 L158,110 L11,110 L11,120 Z" fill="#906810"/><rect x="11" y="110" width="147" height="10" fill="#c8961e"/><rect x="39.8" y="110" width="30" height="10" fill="#906810"/><rect x="39.8" y="110" width="29" height="9" fill="#f8d880"/><rect x="40.8" y="111" width="27" height="7" fill="#e8b02c"/><rect x="54.3" y="110" width="1" height="10" fill="#906810"/><rect x="55.3" y="110" width="1" height="10" fill="#f8d880"/></g><g transform="translate(2337,599.5)"><rect x="0" y="0" width="169" height="133" fill="#7b5126" rx="1"/><rect x="4.7" y="4.7" width="159.6" height="123.6" fill="#bbbbbb"/><rect x="4" y="7" width="72" height="23" fill="#3e2408"/><path d="M4,30 L4,7 L76,7 L74.5,8.5 L5.5,8.5 L5.5,28.5 Z" fill="#c8a878"/><rect x="5.5" y="8.5" width="69.0" height="20.0" fill="#7b5126"/><path d="M26.1,21.0 V12.1 H34.5 V15.0" stroke="#ffffff" stroke-width="1.3" fill="none"/><rect x="30.1" y="15.1" width="8.4" height="9" stroke="#ffffff" stroke-width="1.3" fill="none"/><text x="38.5" y="22.5" font-family="Liberation Mono" font-size="12.5" fill="#ffffff" textLength="18.0" lengthAdjust="spacingAndGlyphs">OM3</text><text x="80.0" y="25.0" font-family="Liberation Mono" font-size="12.5" fill="#000" textLength="18.0" lengthAdjust="spacingAndGlyphs">PIT</text><text x="159.0" y="20.0" font-family="Liberation Mono" font-size="12.5" fill="#000" textLength="42.0" lengthAdjust="spacingAndGlyphs" text-anchor="end">ALIGNED</text><rect x="9" y="36" width="151" height="30" fill="#7b5126"/><text x="10.0" y="49.0" font-family="Liberation Mono" font-size="12.5" fill="#ffffff" textLength="48.0" lengthAdjust="spacingAndGlyphs">-60000.0</text><text x="83.5" y="49.0" font-family="Liberation Mono" font-size="12.5" fill="#ffffff" textLength="42.0" lengthAdjust="spacingAndGlyphs" text-anchor="middle">-1095.0</text><text x="158.5" y="49.0" font-family="Liberation Mono" font-size="12.5" fill="#ffffff" textLength="42.0" lengthAdjust="spacingAndGlyphs" text-anchor="end">60000.0</text><rect x="9" y="52" width="151" height="14" fill="#c8a878"/><path d="M9,66 L9,52 L160,52 L158,54 L11,54 L11,64 Z" fill="#3e2408"/><rect x="11" y="54" width="147" height="10" fill="#6a4520"/><rect x="68.4" y="54" width="30" height="10" fill="#3e2408"/><rect x="68.4" y="54" width="29" height="9" fill="#c8a878"/><rect x="69.4" y="55" width="27" height="7" fill="#7b5126"/><rect x="82.9" y="54" width="1" height="10" fill="#3e2408"/><rect x="83.9" y="54" width="1" height="10" fill="#c8a878"/><text x="89.0" y="83.0" font-family="Liberation Mono" font-size="12.5" fill="#000" textLength="18.0" lengthAdjust="spacingAndGlyphs" text-anchor="middle">YAW</text><rect x="9" y="92" width="151" height="30" fill="#7b5126"/><text x="10.0" y="105.0" font-family="Liberation Mono" font-size="12.5" fill="#ffffff" textLength="48.0" lengthAdjust="spacingAndGlyphs">-60000.0</text><text x="83.5" y="105.0" font-family="Liberation Mono" font-size="12.5" fill="#ffffff" textLength="36.0" lengthAdjust="spacingAndGlyphs" text-anchor="middle">-212.0</text><text x="158.5" y="105.0" font-family="Liberation Mono" font-size="12.5" fill="#ffffff" textLength="42.0" lengthAdjust="spacingAndGlyphs" text-anchor="end">60000.0</text><rect x="9" y="108" width="151" height="14" fill="#c8a878"/><path d="M9,122 L9,108 L160,108 L158,110 L11,110 L11,120 Z" fill="#3e2408"/><rect x="11" y="110" width="147" height="10" fill="#6a4520"/><rect x="69.3" y="110" width="30" height="10" fill="#3e2408"/><rect x="69.3" y="110" width="29" height="9" fill="#c8a878"/><rect x="70.3" y="111" width="27" height="7" fill="#7b5126"/><rect x="83.8" y="110" width="1" height="10" fill="#3e2408"/><rect x="84.8" y="110" width="1" height="10" fill="#c8a878"/></g><g transform="translate(2511,599.5)"><rect x="0" y="0" width="169" height="133" fill="#5a3412" rx="1"/><rect x="4.7" y="4.7" width="159.6" height="123.6" fill="#bbbbbb"/><rect x="4" y="7" width="72" height="23" fill="#2a1404"/><path d="M4,30 L4,7 L76,7 L74.5,8.5 L5.5,8.5 L5.5,28.5 Z" fill="#987050"/><rect x="5.5" y="8.5" width="69.0" height="20.0" fill="#5a3412"/><path d="M26.1,21.0 V12.1 H34.5 V15.0" stroke="#ffffff" stroke-width="1.3" fill="none"/><rect x="30.1" y="15.1" width="8.4" height="9" stroke="#ffffff" stroke-width="1.3" fill="none"/><text x="38.5" y="22.5" font-family="Liberation Mono" font-size="12.5" fill="#ffffff" textLength="18.0" lengthAdjust="spacingAndGlyphs">OMC</text><text x="80.0" y="25.0" font-family="Liberation Mono" font-size="12.5" fill="#000" textLength="18.0" lengthAdjust="spacingAndGlyphs">PIT</text><text x="159.0" y="20.0" font-family="Liberation Mono" font-size="12.5" fill="#000" textLength="42.0" lengthAdjust="spacingAndGlyphs" text-anchor="end">ALIGNED</text><rect x="9" y="36" width="151" height="30" fill="#5a3412"/><text x="10.0" y="49.0" font-family="Liberation Mono" font-size="12.5" fill="#ffffff" textLength="42.0" lengthAdjust="spacingAndGlyphs">-6000.0</text><text x="83.5" y="49.0" font-family="Liberation Mono" font-size="12.5" fill="#ffffff" textLength="24.0" lengthAdjust="spacingAndGlyphs" text-anchor="middle">38.9</text><text x="158.5" y="49.0" font-family="Liberation Mono" font-size="12.5" fill="#ffffff" textLength="36.0" lengthAdjust="spacingAndGlyphs" text-anchor="end">6000.0</text><rect x="9" y="52" width="151" height="14" fill="#987050"/><path d="M9,66 L9,52 L160,52 L158,54 L11,54 L11,64 Z" fill="#2a1404"/><rect x="11" y="54" width="147" height="10" fill="#4a2a0c"/><rect x="69.9" y="54" width="30" height="10" fill="#2a1404"/><rect x="69.9" y="54" width="29" height="9" fill="#987050"/><rect x="70.9" y="55" width="27" height="7" fill="#5a3412"/><rect x="84.4" y="54" width="1" height="10" fill="#2a1404"/><rect x="85.4" y="54" width="1" height="10" fill="#987050"/><text x="89.0" y="83.0" font-family="Liberation Mono" font-size="12.5" fill="#000" textLength="18.0" lengthAdjust="spacingAndGlyphs" text-anchor="middle">YAW</text><rect x="9" y="92" width="151" height="30" fill="#5a3412"/><text x="10.0" y="105.0" font-family="Liberation Mono" font-size="12.5" fill="#ffffff" textLength="42.0" lengthAdjust="spacingAndGlyphs">-6000.0</text><text x="83.5" y="105.0" font-family="Liberation Mono" font-size="12.5" fill="#ffffff" textLength="18.0" lengthAdjust="spacingAndGlyphs" text-anchor="middle">6.8</text><text x="158.5" y="105.0" font-family="Liberation Mono" font-size="12.5" fill="#ffffff" textLength="36.0" lengthAdjust="spacingAndGlyphs" text-anchor="end">6000.0</text><rect x="9" y="108" width="151" height="14" fill="#987050"/><path d="M9,122 L9,108 L160,108 L158,110 L11,110 L11,120 Z" fill="#2a1404"/><rect x="11" y="110" width="147" height="10" fill="#4a2a0c"/><rect x="69.6" y="110" width="30" height="10" fill="#2a1404"/><rect x="69.6" y="110" width="29" height="9" fill="#987050"/><rect x="70.6" y="111" width="27" height="7" fill="#5a3412"/><rect x="84.1" y="110" width="1" height="10" fill="#2a1404"/><rect x="85.1" y="110" width="1" height="10" fill="#987050"/></g><g transform="translate(2685,599.5)"><rect x="0" y="0" width="169" height="133" fill="#5a9af4" rx="1"/><rect x="4.7" y="4.7" width="159.6" height="123.6" fill="#bbbbbb"/><rect x="4" y="7" width="72" height="23" fill="#204c98"/><path d="M4,30 L4,7 L76,7 L74.5,8.5 L5.5,8.5 L5.5,28.5 Z" fill="#9ac0ff"/><rect x="5.5" y="8.5" width="69.0" height="20.0" fill="#4a88e6"/><path d="M26.1,21.0 V12.1 H34.5 V15.0" stroke="#ffffff" stroke-width="1.3" fill="none"/><rect x="30.1" y="15.1" width="8.4" height="9" stroke="#ffffff" stroke-width="1.3" fill="none"/><text x="38.5" y="22.5" font-family="Liberation Mono" font-size="12.5" fill="#ffffff" textLength="18.0" lengthAdjust="spacingAndGlyphs">ZM2</text><text x="80.0" y="25.0" font-family="Liberation Mono" font-size="12.5" fill="#000" textLength="18.0" lengthAdjust="spacingAndGlyphs">PIT</text><text x="159.0" y="20.0" font-family="Liberation Mono" font-size="12.5" fill="#000" textLength="42.0" lengthAdjust="spacingAndGlyphs" text-anchor="end">ALIGNED</text><rect x="9" y="36" width="151" height="30" fill="#4a88e6"/><text x="10.0" y="49.0" font-family="Liberation Mono" font-size="12.5" fill="#ffffff" textLength="42.0" lengthAdjust="spacingAndGlyphs">-6000.0</text><text x="83.5" y="49.0" font-family="Liberation Mono" font-size="12.5" fill="#ffffff" textLength="36.0" lengthAdjust="spacingAndGlyphs" text-anchor="middle">-434.0</text><text x="158.5" y="49.0" font-family="Liberation Mono" font-size="12.5" fill="#ffffff" textLength="36.0" lengthAdjust="spacingAndGlyphs" text-anchor="end">6000.0</text><rect x="9" y="52" width="151" height="14" fill="#9ac0ff"/><path d="M9,66 L9,52 L160,52 L158,54 L11,54 L11,64 Z" fill="#204c98"/><rect x="11" y="54" width="147" height="10" fill="#3a70c8"/><rect x="65.3" y="54" width="30" height="10" fill="#204c98"/><rect x="65.3" y="54" width="29" height="9" fill="#9ac0ff"/><rect x="66.3" y="55" width="27" height="7" fill="#4a88e6"/><rect x="79.8" y="54" width="1" height="10" fill="#204c98"/><rect x="80.8" y="54" width="1" height="10" fill="#9ac0ff"/><text x="89.0" y="83.0" font-family="Liberation Mono" font-size="12.5" fill="#000" textLength="18.0" lengthAdjust="spacingAndGlyphs" text-anchor="middle">YAW</text><rect x="9" y="92" width="151" height="30" fill="#4a88e6"/><text x="10.0" y="105.0" font-family="Liberation Mono" font-size="12.5" fill="#ffffff" textLength="42.0" lengthAdjust="spacingAndGlyphs">-6000.0</text><text x="83.5" y="105.0" font-family="Liberation Mono" font-size="12.5" fill="#ffffff" textLength="36.0" lengthAdjust="spacingAndGlyphs" text-anchor="middle">-146.0</text><text x="158.5" y="105.0" font-family="Liberation Mono" font-size="12.5" fill="#ffffff" textLength="36.0" lengthAdjust="spacingAndGlyphs" text-anchor="end">6000.0</text><rect x="9" y="108" width="151" height="14" fill="#9ac0ff"/><path d="M9,122 L9,108 L160,108 L158,110 L11,110 L11,120 Z" fill="#204c98"/><rect x="11" y="110" width="147" height="10" fill="#3a70c8"/><rect x="68.1" y="110" width="30" height="10" fill="#204c98"/><rect x="68.1" y="110" width="29" height="9" fill="#9ac0ff"/><rect x="69.1" y="111" width="27" height="7" fill="#4a88e6"/><rect x="82.6" y="110" width="1" height="10" fill="#204c98"/><rect x="83.6" y="110" width="1" height="10" fill="#9ac0ff"/></g><g transform="translate(2859,599.5)"><rect x="0" y="0" width="169" height="133" fill="#5a9af4" rx="1"/><rect x="4.7" y="4.7" width="159.6" height="123.6" fill="#bbbbbb"/><rect x="4" y="7" width="72" height="23" fill="#204c98"/><path d="M4,30 L4,7 L76,7 L74.5,8.5 L5.5,8.5 L5.5,28.5 Z" fill="#9ac0ff"/><rect x="5.5" y="8.5" width="69.0" height="20.0" fill="#4a88e6"/><path d="M26.1,21.0 V12.1 H34.5 V15.0" stroke="#ffffff" stroke-width="1.3" fill="none"/><rect x="30.1" y="15.1" width="8.4" height="9" stroke="#ffffff" stroke-width="1.3" fill="none"/><text x="38.5" y="22.5" font-family="Liberation Mono" font-size="12.5" fill="#ffffff" textLength="18.0" lengthAdjust="spacingAndGlyphs">ZM4</text><text x="80.0" y="25.0" font-family="Liberation Mono" font-size="12.5" fill="#000" textLength="18.0" lengthAdjust="spacingAndGlyphs">PIT</text><text x="159.0" y="20.0" font-family="Liberation Mono" font-size="12.5" fill="#000" textLength="42.0" lengthAdjust="spacingAndGlyphs" text-anchor="end">ALIGNED</text><rect x="9" y="36" width="151" height="30" fill="#4a88e6"/><text x="10.0" y="49.0" font-family="Liberation Mono" font-size="12.5" fill="#ffffff" textLength="42.0" lengthAdjust="spacingAndGlyphs">-6000.0</text><text x="83.5" y="49.0" font-family="Liberation Mono" font-size="12.5" fill="#ffffff" textLength="36.0" lengthAdjust="spacingAndGlyphs" text-anchor="middle">-453.4</text><text x="158.5" y="49.0" font-family="Liberation Mono" font-size="12.5" fill="#ffffff" textLength="36.0" lengthAdjust="spacingAndGlyphs" text-anchor="end">6000.0</text><rect x="9" y="52" width="151" height="14" fill="#9ac0ff"/><path d="M9,66 L9,52 L160,52 L158,54 L11,54 L11,64 Z" fill="#204c98"/><rect x="11" y="54" width="147" height="10" fill="#3a70c8"/><rect x="65.1" y="54" width="30" height="10" fill="#204c98"/><rect x="65.1" y="54" width="29" height="9" fill="#9ac0ff"/><rect x="66.1" y="55" width="27" height="7" fill="#4a88e6"/><rect x="79.6" y="54" width="1" height="10" fill="#204c98"/><rect x="80.6" y="54" width="1" height="10" fill="#9ac0ff"/><text x="89.0" y="83.0" font-family="Liberation Mono" font-size="12.5" fill="#000" textLength="18.0" lengthAdjust="spacingAndGlyphs" text-anchor="middle">YAW</text><rect x="9" y="92" width="151" height="30" fill="#4a88e6"/><text x="10.0" y="105.0" font-family="Liberation Mono" font-size="12.5" fill="#ffffff" textLength="42.0" lengthAdjust="spacingAndGlyphs">-6000.0</text><text x="83.5" y="105.0" font-family="Liberation Mono" font-size="12.5" fill="#ffffff" textLength="42.0" lengthAdjust="spacingAndGlyphs" text-anchor="middle">-1275.0</text><text x="158.5" y="105.0" font-family="Liberation Mono" font-size="12.5" fill="#ffffff" textLength="36.0" lengthAdjust="spacingAndGlyphs" text-anchor="end">6000.0</text><rect x="9" y="108" width="151" height="14" fill="#9ac0ff"/><path d="M9,122 L9,108 L160,108 L158,110 L11,110 L11,120 Z" fill="#204c98"/><rect x="11" y="110" width="147" height="10" fill="#3a70c8"/><rect x="57.1" y="110" width="30" height="10" fill="#204c98"/><rect x="57.1" y="110" width="29" height="9" fill="#9ac0ff"/><rect x="58.1" y="111" width="27" height="7" fill="#4a88e6"/><rect x="71.6" y="110" width="1" height="10" fill="#204c98"/><rect x="72.6" y="110" width="1" height="10" fill="#9ac0ff"/></g><g transform="translate(3033,599.5)"><rect x="0" y="0" width="169" height="133" fill="#5a9af4" rx="1"/><rect x="4.7" y="4.7" width="159.6" height="123.6" fill="#bbbbbb"/><rect x="4" y="7" width="72" height="23" fill="#204c98"/><path d="M4,30 L4,7 L76,7 L74.5,8.5 L5.5,8.5 L5.5,28.5 Z" fill="#9ac0ff"/><rect x="5.5" y="8.5" width="69.0" height="20.0" fill="#4a88e6"/><path d="M26.1,21.0 V12.1 H34.5 V15.0" stroke="#ffffff" stroke-width="1.3" fill="none"/><rect x="30.1" y="15.1" width="8.4" height="9" stroke="#ffffff" stroke-width="1.3" fill="none"/><text x="38.5" y="22.5" font-family="Liberation Mono" font-size="12.5" fill="#ffffff" textLength="18.0" lengthAdjust="spacingAndGlyphs">ZM6</text><text x="80.0" y="25.0" font-family="Liberation Mono" font-size="12.5" fill="#000" textLength="18.0" lengthAdjust="spacingAndGlyphs">PIT</text><text x="159.0" y="20.0" font-family="Liberation Mono" font-size="12.5" fill="#000" textLength="42.0" lengthAdjust="spacingAndGlyphs" text-anchor="end">ALIGNED</text><rect x="9" y="36" width="151" height="30" fill="#4a88e6"/><text x="10.0" y="49.0" font-family="Liberation Mono" font-size="12.5" fill="#ffffff" textLength="42.0" lengthAdjust="spacingAndGlyphs">-6000.0</text><text x="83.5" y="49.0" font-family="Liberation Mono" font-size="12.5" fill="#ffffff" textLength="30.0" lengthAdjust="spacingAndGlyphs" text-anchor="middle">518.2</text><text x="158.5" y="49.0" font-family="Liberation Mono" font-size="12.5" fill="#ffffff" textLength="36.0" lengthAdjust="spacingAndGlyphs" text-anchor="end">6000.0</text><rect x="9" y="52" width="151" height="14" fill="#9ac0ff"/><path d="M9,66 L9,52 L160,52 L158,54 L11,54 L11,64 Z" fill="#204c98"/><rect x="11" y="54" width="147" height="10" fill="#3a70c8"/><rect x="74.6" y="54" width="30" height="10" fill="#204c98"/><rect x="74.6" y="54" width="29" height="9" fill="#9ac0ff"/><rect x="75.6" y="55" width="27" height="7" fill="#4a88e6"/><rect x="89.1" y="54" width="1" height="10" fill="#204c98"/><rect x="90.1" y="54" width="1" height="10" fill="#9ac0ff"/><text x="89.0" y="83.0" font-family="Liberation Mono" font-size="12.5" fill="#000" textLength="18.0" lengthAdjust="spacingAndGlyphs" text-anchor="middle">YAW</text><rect x="9" y="92" width="151" height="30" fill="#4a88e6"/><text x="10.0" y="105.0" font-family="Liberation Mono" font-size="12.5" fill="#ffffff" textLength="42.0" lengthAdjust="spacingAndGlyphs">-6000.0</text><text x="83.5" y="105.0" font-family="Liberation Mono" font-size="12.5" fill="#ffffff" textLength="36.0" lengthAdjust="spacingAndGlyphs" text-anchor="middle">-239.2</text><text x="158.5" y="105.0" font-family="Liberation Mono" font-size="12.5" fill="#ffffff" textLength="36.0" lengthAdjust="spacingAndGlyphs" text-anchor="end">6000.0</text><rect x="9" y="108" width="151" height="14" fill="#9ac0ff"/><path d="M9,122 L9,108 L160,108 L158,110 L11,110 L11,120 Z" fill="#204c98"/><rect x="11" y="110" width="147" height="10" fill="#3a70c8"/><rect x="67.2" y="110" width="30" height="10" fill="#204c98"/><rect x="67.2" y="110" width="29" height="9" fill="#9ac0ff"/><rect x="68.2" y="111" width="27" height="7" fill="#4a88e6"/><rect x="81.7" y="110" width="1" height="10" fill="#204c98"/><rect x="82.7" y="110" width="1" height="10" fill="#9ac0ff"/></g><g transform="translate(1988,54)"><rect x="1" y="1" width="163" height="125" fill="none" stroke="#d2c278" stroke-width="2"/><text x="6.0" y="16.0" font-family="Liberation Mono" font-size="12.5" fill="#000" textLength="42.0" lengthAdjust="spacingAndGlyphs">JAC PZT</text><text x="54.0" y="27.0" font-family="Liberation Mono" font-size="12.5" fill="#000" textLength="18.0" lengthAdjust="spacingAndGlyphs">PIT</text><rect x="4" y="35" width="157" height="35" fill="#c8b870"/><text x="5.0" y="53.0" font-family="Liberation Mono" font-size="12.5" fill="#000" textLength="48.0" lengthAdjust="spacingAndGlyphs">-30000.0</text><text x="83.0" y="53.0" font-family="Liberation Mono" font-size="12.5" fill="#000" textLength="36.0" lengthAdjust="spacingAndGlyphs" text-anchor="middle">6427.5</text><text x="160.0" y="53.0" font-family="Liberation Mono" font-size="12.5" fill="#000" textLength="42.0" lengthAdjust="spacingAndGlyphs" text-anchor="end">30000.0</text><rect x="4" y="54" width="157" height="15" fill="#f0e8b8"/><path d="M4,69 L4,54 L161,54 L159,56 L6,56 L6,67 Z" fill="#706428"/><rect x="6" y="56" width="153" height="11" fill="#a89c5c"/><rect x="80.7" y="56" width="30" height="11" fill="#706428"/><rect x="80.7" y="56" width="29" height="10" fill="#f0e8b8"/><rect x="81.7" y="57" width="27" height="8" fill="#c8b870"/><rect x="95.2" y="56" width="1" height="11" fill="#706428"/><rect x="96.2" y="56" width="1" height="11" fill="#f0e8b8"/><text x="69.0" y="86.0" font-family="Liberation Mono" font-size="12.5" fill="#000" textLength="18.0" lengthAdjust="spacingAndGlyphs" text-anchor="middle">YAW</text><rect x="5" y="88" width="157" height="34" fill="#c8b870"/><text x="6.0" y="106.0" font-family="Liberation Mono" font-size="12.5" fill="#000" textLength="48.0" lengthAdjust="spacingAndGlyphs">-30000.0</text><text x="85.0" y="106.0" font-family="Liberation Mono" font-size="12.5" fill="#000" textLength="42.0" lengthAdjust="spacingAndGlyphs" text-anchor="middle">25805.0</text><text x="161.0" y="106.0" font-family="Liberation Mono" font-size="12.5" fill="#000" textLength="42.0" lengthAdjust="spacingAndGlyphs" text-anchor="end">30000.0</text><rect x="5" y="107" width="157" height="15" fill="#f0e8b8"/><path d="M5,122 L5,107 L162,107 L160,109 L7,109 L7,120 Z" fill="#706428"/><rect x="7" y="109" width="153" height="11" fill="#a89c5c"/><rect x="121.4" y="109" width="30" height="11" fill="#706428"/><rect x="121.4" y="109" width="29" height="10" fill="#f0e8b8"/><rect x="122.4" y="110" width="27" height="8" fill="#c8b870"/><rect x="135.9" y="109" width="1" height="11" fill="#706428"/><rect x="136.9" y="109" width="1" height="11" fill="#f0e8b8"/></g><g transform="translate(2928,325.5)"><rect width="98" height="64" fill="#5a3412"/><rect x="4" y="4" width="90" height="56" fill="#bbbbbb"/><rect x="10" y="10" width="79" height="22" fill="#2a1404"/><path d="M10,32 L10,10 L89,10 L87.5,11.5 L11.5,11.5 L11.5,30.5 Z" fill="#a08060"/><rect x="11.5" y="11.5" width="76.0" height="19.0" fill="#5a3010"/><path d="M31.6,24.0 V15.1 H40 V18.0" stroke="#fff" stroke-width="1.3" fill="none"/><rect x="35.6" y="18.1" width="8.4" height="9" stroke="#fff" stroke-width="1.3" fill="none"/><text x="46.0" y="26.0" font-family="Liberation Mono" font-size="12.5" fill="#fff" textLength="18.0" lengthAdjust="spacingAndGlyphs">OFI</text><text x="49.0" y="52.0" font-family="Liberation Mono" font-size="12.5" fill="#000" textLength="42.0" lengthAdjust="spacingAndGlyphs" text-anchor="middle">ALIGNED</text></g><g transform="translate(2928,394)"><rect width="98" height="63" fill="#5aa2ff"/><rect x="4" y="4" width="90" height="55" fill="#bbbbbb"/><rect x="10" y="9" width="80" height="24" fill="#2050a0"/><path d="M10,33 L10,9 L90,9 L88.5,10.5 L11.5,10.5 L11.5,31.5 Z" fill="#a8d0ff"/><rect x="11.5" y="10.5" width="77.0" height="21.0" fill="#4a90f0"/><path d="M31.6,23.5 V14.6 H40 V17.5" stroke="#fff" stroke-width="1.3" fill="none"/><rect x="35.6" y="17.6" width="8.4" height="9" stroke="#fff" stroke-width="1.3" fill="none"/><text x="46.0" y="26.0" font-family="Liberation Mono" font-size="12.5" fill="#fff" textLength="18.0" lengthAdjust="spacingAndGlyphs">OPO</text><text x="50.0" y="52.0" font-family="Liberation Mono" font-size="12.5" fill="#000" textLength="42.0" lengthAdjust="spacingAndGlyphs" text-anchor="middle">ALIGNED</text></g><rect x="2905" y="67" width="79" height="23" fill="#7a7a7a"/><path d="M2905,90 L2905,67 L2984,67 L2982.5,68.5 L2906.5,68.5 L2906.5,88.5 Z" fill="#e4e4e4"/><rect x="2906.5" y="68.5" width="76.0" height="20.0" fill="#b8b8b8"/><path d="M2911.6,81.0 V72.1 H2920 V75.0" stroke="#f0f0f0" stroke-width="1.3" fill="none"/><rect x="2915.6" y="75.1" width="8.4" height="9" stroke="#f0f0f0" stroke-width="1.3" fill="none"/><text x="2925.0" y="84.0" font-family="Liberation Mono" font-size="12.5" fill="#f0f0f0" textLength="42.0" lengthAdjust="spacingAndGlyphs">Locking</text><rect x="2905" y="116" width="79" height="22" fill="#30003e"/><path d="M2905,138 L2905,116 L2984,116 L2982.5,117.5 L2906.5,117.5 L2906.5,136.5 Z" fill="#b070c8"/><rect x="2906.5" y="117.5" width="76.0" height="19.0" fill="#5a0a78"/><path d="M2909.6,130.0 V121.1 H2918 V124.0" stroke="#fff" stroke-width="1.3" fill="none"/><rect x="2913.6" y="124.1" width="8.4" height="9" stroke="#fff" stroke-width="1.3" fill="none"/><text x="2922.0" y="133.0" font-family="Liberation Mono" font-size="12.5" fill="#fff" textLength="60.0" lengthAdjust="spacingAndGlyphs">Satur. mon</text><rect x="2905" y="154" width="79" height="22" fill="#30003e"/><path d="M2905,176 L2905,154 L2984,154 L2982.5,155.5 L2906.5,155.5 L2906.5,174.5 Z" fill="#b070c8"/><rect x="2906.5" y="155.5" width="76.0" height="19.0" fill="#5a0a78"/><path d="M2910.6,168.0 V159.1 H2919 V162.0" stroke="#fff" stroke-width="1.3" fill="none"/><rect x="2914.6" y="162.1" width="8.4" height="9" stroke="#fff" stroke-width="1.3" fill="none"/><text x="2923.0" y="171.0" font-family="Liberation Mono" font-size="12.5" fill="#fff" textLength="54.0" lengthAdjust="spacingAndGlyphs">Drift mon</text><rect x="2903" y="190" width="84" height="18" fill="#707070"/><path d="M2903,208 L2903,190 L2987,190 L2985.5,191.5 L2904.5,191.5 L2904.5,206.5 Z" fill="#e8e8e8"/><rect x="2904.5" y="191.5" width="81.0" height="15.0" fill="#bbbbbb"/><text x="2909.0" y="203.0" font-family="Liberation Mono" font-size="12.5" fill="#000" textLength="78.0" lengthAdjust="spacingAndGlyphs">! Misaligned?</text><rect x="2912" y="225" width="64" height="17" fill="#707070"/><path d="M2912,242 L2912,225 L2976,225 L2974.5,226.5 L2913.5,226.5 L2913.5,240.5 Z" fill="#e8e8e8"/><rect x="2913.5" y="226.5" width="61.0" height="14.0" fill="#bbbbbb"/><text x="2918.0" y="238.0" font-family="Liberation Mono" font-size="12.5" fill="#000" textLength="54.0" lengthAdjust="spacingAndGlyphs">! Restore</text><rect x="2896" y="264" width="99" height="19" fill="#905098"/><path d="M2896,283 L2896,264 L2995,264 L2993.5,265.5 L2897.5,265.5 L2897.5,281.5 Z" fill="#f8c0f8"/><rect x="2897.5" y="265.5" width="96.0" height="16.0" fill="#e080e8"/><text x="2902.0" y="278.0" font-family="Liberation Mono" font-size="12.5" fill="#000" textLength="90.0" lengthAdjust="spacingAndGlyphs">! Slider Scopes</text><text x="3203.0" y="60.0" font-family="Liberation Mono" font-size="12.5" fill="#000" textLength="144.0" lengthAdjust="spacingAndGlyphs" text-anchor="end">Wed Apr  1 12:19:12 2026</text></svg><div style="position:absolute;left:0;top:0;width:528px;height:605px;background:#efedeb"><div style="position:absolute;left:3px;top:3px;width:521px;height:19px;background:#c2c0c0;font:15px 'Liberation Sans',sans-serif;color:#202020;text-align:center;line-height:19px">/bin/bash 67x32</div><div style="position:absolute;left:3px;top:22px;width:507px;height:581px;background:#000"></div><div style="position:absolute;left:510px;top:22px;width:14px;height:581px;background:#e4e4e4"><div style="position:absolute;left:2px;top:3px;width:9px;height:576px;border-radius:5px;background:#c4c4c4"></div></div><pre style="position:absolute;left:4px;top:25px;margin:0;font:15px/18.1px 'Liberation Mono',monospace;color:#b6b6b6;letter-spacing:0px">r@cdsws39:~/ndscope/SQZ$ ndscope H1:SYS-MOTION_C_PICO_A_
OSITION H1:SYS-MOTION_C_PICO_A_MOTOR_8_Y_POSITION -t now
rs ago"
r@cdsws39:~/ndscope/SQZ$ ndscope H1:SYS-MOTION_C_PICO_A_
OSITION H1:SYS-MOTION_C_PICO_A_MOTOR_8_Y_POSITION H1:SUS
ICALIGN_P_OFFSET H1:SUS-PR3_M1_OPTICALIGN_Y_OFFSET  -t n
ears ago"
r@cdsws39:~/ndscope/SQZ$ ndscope H1:ASC-AS_A_DC_NSUM_OUT</pre></div><div style="position:absolute;left:713px;top:1150px;width:816px;height:183px;background:#f4f3f1;border:1px solid #8c8c8c;box-sizing:border-box"></div><div style="position:absolute;left:717px;top:1213px;width:806px;height:56px;background:#000;font:16.3px 'Liberation Sans',sans-serif;color:#fff;text-align:center;line-height:66px"><span style="position:relative;left:-3px">t0 = Wed Apr 01 2026 19:19:12 UTC [1459106370.1250]</span></div><div style="position:absolute;left:717px;top:1269px;width:808px;height:30px;background:#efefef"></div><div style="position:absolute;left:719.5px;top:1272px;width:99px;height:24px;box-sizing:border-box;border:1px solid #b4b4b4;border-radius:3px;background:linear-gradient(#f6f6f6,#e2e2e2);font:12.5px 'Liberation Sans',sans-serif;color:#b8b8b8;text-align:center;line-height:22px;white-space:nowrap"><svg width="12" height="12" style="display:inline-block;vertical-align:-1px;margin-right:6px"><path d="M2,1 L10,6 L2,11 Z" fill="none" stroke="#c4c4c4" stroke-width="1"/></svg>start online</div><div style="position:absolute;left:821.5px;top:1272px;width:99px;height:24px;box-sizing:border-box;border:1px solid #b4b4b4;border-radius:3px;background:linear-gradient(#f6f6f6,#e2e2e2);font:12.5px 'Liberation Sans',sans-serif;color:#1e1e1e;text-align:center;line-height:22px;white-space:nowrap"><svg width="12" height="12" style="display:inline-block;vertical-align:-1px;margin-right:6px"><rect x="1.5" y="1.5" width="8" height="8" fill="#fff" stroke="#555" stroke-width="1"/></svg>stop online</div><div style="position:absolute;left:923.5px;top:1272px;width:99px;height:24px;box-sizing:border-box;border:1px solid #b4b4b4;border-radius:3px;background:linear-gradient(#f6f6f6,#e2e2e2);font:12.5px 'Liberation Sans',sans-serif;color:#1e1e1e;text-align:center;line-height:22px;white-space:nowrap">reset</div><div style="position:absolute;left:1025.5px;top:1272px;width:99px;height:24px;box-sizing:border-box;border:1px solid #b4b4b4;border-radius:3px;background:linear-gradient(#f6f6f6,#e2e2e2);font:12.5px 'Liberation Sans',sans-serif;color:#1e1e1e;text-align:center;line-height:22px;white-space:nowrap">add channels</div><div style="position:absolute;left:1413px;top:1272px;width:79px;height:24px;box-sizing:border-box;border:1px solid #c4c4c4;border-radius:3px;background:linear-gradient(#f4f4f4,#dedede);font:12.5px 'Liberation Sans',sans-serif;color:#b8b8b8;text-align:center;line-height:22px">snapshot</div><svg style="position:absolute;left:1500px;top:1277px" width="16" height="14"><path d="M2,11 L8,4 L14,11 Z" fill="#222"/></svg><div style="position:absolute;left:716px;top:1299px;width:810px;height:30px;background:#8fb891;font:12.5px 'Liberation Sans',sans-serif;color:#1a1a1a;line-height:31px;text-indent:6px">Retrieving raw ...</div><div style="position:absolute;left:572px;top:41px;width:1013px;height:1172px;background:#f4f3f1;border:1px solid #8c8c8c;border-radius:5px 5px 0 0;box-sizing:border-box"></div><div style="position:absolute;left:577px;top:46px;width:20px;height:18px;border:1px solid #a8a8a8;border-radius:3px;background:linear-gradient(#ffffff,#dfe2df);box-sizing:border-box"><div style="position:absolute;left:1px;right:1px;top:1px;height:2px;background:#4a78c0"></div></div><div style="position:absolute;left:572px;top:45px;width:1013px;text-align:center;font:bold 12px 'Liberation Sans',sans-serif;color:#8a8e8e;line-height:20px;letter-spacing:-0.35px"><span style="position:relative;left:-34px;top:1px">ndscope: H1:ASC-AS_A_DC_NSUM_OUT_DQ</span></div><svg style="position:absolute;left:1480px;top:45px" width="100" height="22" viewBox="1480 45 100 22"><path d="M1497.3,58.5 L1501.5,54.3 L1505.7,58.5" stroke="#7c8284" stroke-width="2" fill="none"/><path d="M1520.0,59.0 L1529.0,59.0" stroke="#7c8284" stroke-width="2" fill="none"/><rect x="1544.0" y="52.0" width="7.5" height="7.5" stroke="#7c8284" stroke-width="2" fill="none"/><path d="M1566.5,51.7 L1574.5,59.7 M1574.5,51.7 L1566.5,59.7" stroke="#7c8284" stroke-width="2" fill="none"/></svg><div style="position:absolute;left:576px;top:70px;width:1005px;height:1140px;background:#efefef"></div><svg style="position:absolute;left:578px;top:71px" width="1001" height="1079" viewBox="578 71 1001 1079"><rect x="578" y="71" width="1001" height="1079" fill="#000"/><text x="1106" y="110.5" fill="#fff" font-family="Liberation Sans" font-size="12" text-anchor="middle">H1:ASC-AS_A_DC_NSUM_OUT_DQ</text><path d="M700.5,120 L700.5,1073 M786.5,120 L786.5,1073 M872.5,120 L872.5,1073 M958.5,120 L958.5,1073 M1044.5,120 L1044.5,1073 M1130.5,120 L1130.5,1073 M1216.5,120 L1216.5,1073 M1302.5,120 L1302.5,1073 M1388.5,120 L1388.5,1073 M1474.5,120 L1474.5,1073 M652,120.5 L1560,120.5 M652,193.5 L1560,193.5 M652,266.5 L1560,266.5 M652,339.5 L1560,339.5 M652,413.5 L1560,413.5 M652,486.5 L1560,486.5 M652,559.5 L1560,559.5 M652,632.5 L1560,632.5 M652,705.5 L1560,705.5 M652,778.5 L1560,778.5 M652,852.5 L1560,852.5 M652,925.5 L1560,925.5 M652,998.5 L1560,998.5 M652,1071.5 L1560,1071.5" stroke="#1f1f1f" stroke-width="1" fill="none"/><path d="M652.5,120 L652.5,1073.5 L1560,1073.5" stroke="#c8c8c8" stroke-width="1" fill="none"/><text x="647" y="124.5" fill="#fff" font-family="Liberation Sans" font-size="13" text-anchor="end">1400</text><text x="647" y="271.1" fill="#fff" font-family="Liberation Sans" font-size="13" text-anchor="end">1200</text><text x="647" y="417.5" fill="#fff" font-family="Liberation Sans" font-size="13" text-anchor="end">1000</text><text x="647" y="564.5" fill="#fff" font-family="Liberation Sans" font-size="13" text-anchor="end">800</text><text x="647" y="710.5" fill="#fff" font-family="Liberation Sans" font-size="13" text-anchor="end">600</text><text x="647" y="856.5" fill="#fff" font-family="Liberation Sans" font-size="13" text-anchor="end">400</text><text x="647" y="1003.5" fill="#fff" font-family="Liberation Sans" font-size="13" text-anchor="end">200</text><rect x="578" y="71" width="80" height="49" fill="#000"/><text x="0" y="0" transform="translate(608,597) rotate(-90)" fill="#fff" font-family="Liberation Sans" font-size="13" text-anchor="middle">counts</text><text x="700" y="1091" fill="#fff" font-family="Liberation Sans" font-size="13" text-anchor="middle">-2s,500ms</text><text x="872" y="1091" fill="#fff" font-family="Liberation Sans" font-size="13" text-anchor="middle">-2s</text><text x="1044" y="1091" fill="#fff" font-family="Liberation Sans" font-size="13" text-anchor="middle">-1s,500ms</text><text x="1216" y="1091" fill="#fff" font-family="Liberation Sans" font-size="13" text-anchor="middle">-1s</text><text x="1388" y="1091" fill="#fff" font-family="Liberation Sans" font-size="13" text-anchor="middle">-500ms</text><text x="1562" y="1091" fill="#fff" font-family="Liberation Sans" font-size="13" text-anchor="middle">0</text><svg x="652" y="120" width="908" height="953" viewBox="652 120 908 953"><path d="M652.8,517.7 L653.4,515.7 L654.1,511.9 L654.9,508.9 L655.9,504.4 L656.9,500.7 L658.0,496.6 L659.1,491.0 L660.3,486.1 L661.5,482.2 L662.7,476.9 L663.8,473.3 L665.0,469.9 L665.9,467.0 L666.8,464.9 L667.7,462.8 L668.6,459.9 L669.5,457.2 L670.5,456.0 L671.4,454.0 L672.4,451.5 L673.4,449.3 L674.4,446.6 L675.4,445.6 L676.5,444.0 L677.6,440.9 L678.8,439.1 L680.0,437.4 L680.9,436.1 L681.8,436.0 L682.7,433.8 L683.6,433.6 L684.6,431.2 L685.6,429.5 L686.6,429.7 L687.7,427.8 L688.7,426.8 L689.8,425.9 L690.8,424.0 L691.9,422.3 L692.9,421.7 L694.0,420.3 L695.1,420.2 L696.1,418.9 L697.1,418.3 L698.1,417.4 L699.1,416.3 L700.1,416.7 L701.1,416.3 L702.0,416.6 L703.1,415.4 L704.2,415.5 L705.2,414.9 L706.2,415.4 L707.2,415.1 L708.2,414.0 L709.2,414.2 L710.2,414.1 L711.1,415.5 L712.1,415.9 L713.0,415.4 L714.0,417.4 L715.0,417.5 L715.9,420.4 L716.9,422.1 L717.9,423.8 L719.0,427.5 L720.0,430.4 L721.0,434.0 L721.9,436.5 L722.9,441.9 L723.9,445.3 L725.0,449.7 L726.0,455.4 L727.0,460.5 L728.0,466.7 L729.1,471.5 L730.1,477.4 L731.2,483.6 L732.2,489.9 L733.2,496.3 L734.2,502.6 L735.2,508.1 L736.2,514.7 L737.2,521.3 L738.2,527.9 L739.1,533.3 L740.0,539.6 L741.1,547.7 L742.2,556.1 L743.2,563.4 L744.2,571.5 L745.2,579.8 L746.2,588.5 L747.1,597.3 L748.1,605.6 L749.0,612.8 L750.0,622.3 L750.9,629.6 L751.9,638.5 L752.9,645.8 L753.9,653.9 L754.9,661.1 L756.0,668.5 L756.9,675.1 L757.9,681.1 L758.8,686.1 L759.8,693.1 L760.8,697.7 L761.8,703.6 L762.8,710.0 L763.8,715.1 L764.8,719.7 L765.8,725.0 L766.8,731.1 L767.9,735.4 L768.9,740.4 L769.9,746.1 L770.9,750.7 L772.0,755.3 L773.0,760.4 L774.0,765.4 L775.0,769.6 L776.0,774.0 L777.0,779.5 L777.9,783.2 L778.9,788.0 L779.8,791.6 L780.8,796.3 L781.7,799.9 L782.6,803.4 L783.6,807.6 L784.5,812.4 L785.5,815.2 L786.5,818.7 L787.5,823.6 L788.5,826.0 L789.5,829.5 L790.6,833.2 L791.7,836.1 L792.8,839.0 L794.0,842.3 L794.9,845.4 L795.7,847.9 L796.6,850.1 L797.5,851.8 L798.4,854.5 L799.3,855.5 L800.3,858.9 L801.2,860.7 L802.1,861.8 L803.1,864.3 L804.0,866.7 L805.0,868.2 L806.0,870.2 L807.0,871.3 L808.0,872.9 L809.0,875.3 L810.1,877.1 L811.1,878.5 L812.2,880.1 L813.2,881.9 L814.3,882.5 L815.4,885.0 L816.6,886.0 L817.7,887.8 L818.8,889.0 L820.0,890.4 L820.9,890.2 L821.8,892.1 L822.7,892.6 L823.6,894.3 L824.6,893.6 L825.5,895.1 L826.5,895.5 L827.5,896.1 L828.5,898.2 L829.5,898.8 L830.5,898.4 L831.5,899.5 L832.6,900.1 L833.6,900.5 L834.6,900.6 L835.7,902.5 L836.7,903.1 L837.8,903.8 L838.8,903.3 L839.9,903.3 L840.9,904.1 L842.0,904.4 L843.0,905.0 L844.1,906.2 L845.1,906.2 L846.1,907.0 L847.2,906.9 L848.2,907.3 L849.2,906.7 L850.2,907.3 L851.2,908.3 L852.1,907.8 L853.1,907.3 L854.1,907.9 L855.0,907.9 L856.1,907.8 L857.2,908.2 L858.2,908.5 L859.3,907.9 L860.3,908.8 L861.4,908.6 L862.4,907.7 L863.5,908.4 L864.5,908.2 L865.6,907.2 L866.6,907.7 L867.6,907.7 L868.6,906.6 L869.6,907.0 L870.6,906.1 L871.6,905.4 L872.6,904.3 L873.6,904.1 L874.6,904.2 L875.6,903.6 L876.5,902.1 L877.5,901.9 L878.4,901.0 L879.4,901.2 L880.3,900.5 L881.3,898.6 L882.2,897.9 L883.2,896.6 L884.1,896.3 L885.0,895.0 L886.1,894.2 L887.2,891.9 L888.3,890.6 L889.3,889.3 L890.4,886.7 L891.5,884.9 L892.5,884.2 L893.5,882.0 L894.6,880.3 L895.6,877.9 L896.6,875.2 L897.6,872.9 L898.6,871.8 L899.6,869.3 L900.6,866.3 L901.6,863.7 L902.5,861.7 L903.5,859.9 L904.5,857.8 L905.4,854.5 L906.3,852.0 L907.3,849.7 L908.2,848.3 L909.1,846.0 L910.0,843.7 L911.1,839.9 L912.2,837.8 L913.3,834.7 L914.4,831.3 L915.4,828.5 L916.4,824.6 L917.4,821.6 L918.5,819.3 L919.5,815.2 L920.4,812.7 L921.4,809.4 L922.4,806.3 L923.3,803.0 L924.3,799.6 L925.3,795.8 L926.2,793.1 L927.2,789.7 L928.1,787.3 L929.1,783.8 L930.0,779.3 L931.0,777.2 L932.0,773.7 L933.0,769.2 L934.0,767.0 L934.9,762.5 L935.8,759.2 L936.7,756.5 L937.6,753.2 L938.6,750.0 L939.5,745.4 L940.4,742.8 L941.4,738.8 L942.4,734.9 L943.4,731.0 L944.5,727.0 L945.6,722.2 L946.8,718.5 L948.0,713.8 L948.8,710.7 L949.7,707.6 L950.6,703.2 L951.5,700.1 L952.4,696.0 L953.4,692.1 L954.3,688.3 L955.3,684.7 L956.3,681.4 L957.3,677.1 L958.3,672.3 L959.3,668.8 L960.3,664.1 L961.3,660.2 L962.4,654.9 L963.4,651.9 L964.5,647.5 L965.5,643.4 L966.6,639.0 L967.6,635.0 L968.7,631.2 L969.8,627.3 L970.8,623.1 L971.9,620.1 L972.9,616.9 L974.0,613.2 L975.0,610.7 L976.0,607.4 L976.9,603.6 L977.9,601.1 L978.9,598.8 L979.9,594.5 L980.9,592.9 L981.9,589.3 L982.9,585.9 L984.0,582.7 L985.0,580.9 L986.0,577.3 L987.0,574.4 L988.0,572.6 L989.1,569.9 L990.1,566.6 L991.1,565.0 L992.1,563.3 L993.1,560.0 L994.1,558.0 L995.2,556.6 L996.2,554.4 L997.2,552.2 L998.2,551.1 L999.2,548.9 L1000.1,547.5 L1001.1,546.7 L1002.1,546.4 L1003.0,544.9 L1004.0,544.6 L1005.1,545.2 L1006.1,544.3 L1007.1,544.6 L1008.1,545.4 L1009.2,544.8 L1010.2,545.0 L1011.2,546.4 L1012.2,546.7 L1013.1,549.3 L1014.1,549.9 L1015.1,551.8 L1016.1,552.1 L1017.1,555.0 L1018.0,555.5 L1019.0,558.6 L1020.0,559.8 L1021.0,562.1 L1022.0,564.9 L1022.9,567.3 L1023.9,569.8 L1024.9,571.4 L1025.9,575.1 L1026.9,576.5 L1027.9,580.0 L1029.0,581.8 L1030.0,585.2 L1031.0,587.9 L1031.9,590.3 L1032.9,593.5 L1033.9,596.1 L1034.9,599.3 L1035.9,601.7 L1036.9,605.1 L1037.9,608.7 L1038.9,612.7 L1039.9,616.3 L1040.9,618.8 L1041.9,623.0 L1042.9,627.5 L1043.9,630.1 L1045.0,635.3 L1046.0,637.9 L1047.0,643.0 L1048.0,646.7 L1049.0,650.7 L1050.0,655.0 L1051.0,658.0 L1052.0,662.7 L1053.0,667.6 L1054.0,670.5 L1055.0,675.2 L1056.0,679.7 L1057.0,684.3 L1058.0,688.4 L1059.0,691.6 L1060.0,696.4 L1061.0,701.2 L1062.0,705.9 L1063.0,710.4 L1064.0,715.2 L1065.0,721.1 L1066.0,726.0 L1067.0,731.4 L1067.9,735.4 L1068.9,740.8 L1069.9,745.7 L1070.9,751.6 L1071.9,756.1 L1072.8,761.8 L1073.8,766.1 L1074.8,771.2 L1075.8,776.4 L1076.8,781.3 L1077.8,786.9 L1078.8,792.6 L1079.8,796.1 L1080.8,800.9 L1081.9,806.7 L1082.9,810.3 L1083.9,815.4 L1085.0,820.3 L1086.0,824.2 L1086.9,827.8 L1087.9,832.6 L1088.9,835.7 L1089.9,840.3 L1090.9,844.3 L1091.9,847.9 L1092.9,851.0 L1093.9,855.7 L1095.0,859.6 L1096.0,862.7 L1097.0,867.5 L1098.1,870.0 L1099.1,874.0 L1100.1,878.9 L1101.2,881.2 L1102.2,885.5 L1103.2,889.0 L1104.2,893.0 L1105.3,895.7 L1106.3,898.7 L1107.3,902.3 L1108.3,905.1 L1109.3,908.6 L1110.3,911.2 L1111.2,914.7 L1112.2,918.5 L1113.1,920.2 L1114.1,923.2 L1115.0,926.5 L1116.1,929.0 L1117.2,931.5 L1118.2,934.5 L1119.2,938.0 L1120.2,940.0 L1121.2,943.1 L1122.2,944.7 L1123.2,946.4 L1124.2,949.0 L1125.1,951.4 L1126.1,953.8 L1127.0,954.7 L1128.0,957.9 L1128.9,958.5 L1129.9,961.0 L1130.8,962.7 L1131.8,963.6 L1132.8,965.3 L1133.8,966.5 L1134.8,968.7 L1135.8,970.1 L1136.8,971.7 L1137.8,972.0 L1138.9,973.8 L1140.0,974.9 L1140.9,976.1 L1141.9,976.9 L1142.8,977.8 L1143.8,977.8 L1144.8,979.4 L1145.8,980.4 L1146.8,980.6 L1147.8,981.7 L1148.8,981.3 L1149.8,982.9 L1150.8,982.9 L1151.9,983.6 L1152.9,984.4 L1154.0,984.2 L1155.0,984.6 L1156.0,984.7 L1157.1,986.0 L1158.1,985.7 L1159.2,986.2 L1160.2,985.9 L1161.2,986.5 L1162.2,985.7 L1163.2,987.2 L1164.2,986.0 L1165.2,987.5 L1166.2,987.1 L1167.2,987.6 L1168.1,987.2 L1169.1,987.3 L1170.0,987.3 L1171.1,987.4 L1172.2,987.4 L1173.2,987.2 L1174.3,986.9 L1175.4,986.4 L1176.4,985.9 L1177.4,985.7 L1178.4,986.9 L1179.5,986.1 L1180.5,986.5 L1181.5,985.6 L1182.4,984.2 L1183.4,984.0 L1184.4,983.5 L1185.4,983.0 L1186.4,983.4 L1187.3,982.8 L1188.3,982.1 L1189.2,980.9 L1190.2,979.8 L1191.2,979.6 L1192.1,978.8 L1193.1,976.7 L1194.0,976.2 L1195.0,974.9 L1196.0,973.1 L1197.1,972.0 L1198.1,970.9 L1199.1,969.8 L1200.2,967.6 L1201.2,966.1 L1202.2,963.7 L1203.2,962.9 L1204.2,960.4 L1205.2,958.0 L1206.2,956.3 L1207.2,954.5 L1208.2,951.7 L1209.2,950.1 L1210.2,946.5 L1211.1,945.3 L1212.1,942.5 L1213.1,940.1 L1214.1,936.9 L1215.1,934.0 L1216.0,932.4 L1217.0,928.8 L1218.0,926.5 L1219.0,923.3 L1220.1,920.3 L1221.1,916.3 L1222.1,912.5 L1223.2,909.3 L1224.2,905.8 L1225.2,901.7 L1226.3,898.0 L1227.3,895.3 L1228.3,891.0 L1229.4,887.6 L1230.4,883.4 L1231.4,879.4 L1232.4,874.4 L1233.4,870.0 L1234.4,866.3 L1235.4,862.8 L1236.3,857.2 L1237.3,853.0 L1238.2,849.2 L1239.1,844.8 L1240.0,840.7 L1241.1,833.6 L1242.3,828.7 L1243.4,822.4 L1244.4,815.8 L1245.5,808.5 L1246.5,803.0 L1247.6,795.5 L1248.6,789.4 L1249.6,783.0 L1250.5,775.1 L1251.5,768.6 L1252.4,762.7 L1253.4,754.5 L1254.3,748.7 L1255.2,741.0 L1256.1,734.3 L1257.0,727.3 L1258.1,717.1 L1259.2,707.8 L1260.3,699.1 L1261.3,688.6 L1262.3,678.4 L1263.3,668.4 L1264.2,659.5 L1265.2,648.9 L1266.1,640.1 L1267.1,628.7 L1268.0,619.9 L1269.0,610.2 L1270.0,600.5 L1271.0,589.7 L1272.0,580.4 L1273.0,570.5 L1274.0,560.2 L1275.0,550.1 L1275.9,540.3 L1276.9,529.4 L1277.9,520.4 L1278.9,511.1 L1279.9,501.3 L1280.9,493.0 L1282.0,483.7 L1283.0,475.2 L1284.0,468.9 L1284.9,461.5 L1285.9,456.0 L1286.8,448.8 L1287.8,442.7 L1288.7,436.3 L1289.7,432.0 L1290.7,426.0 L1291.7,420.3 L1292.7,415.3 L1293.7,410.7 L1294.8,407.5 L1295.9,403.8 L1297.0,399.3 L1297.9,397.2 L1298.8,395.4 L1299.7,392.7 L1300.7,391.8 L1301.7,389.6 L1302.6,388.2 L1303.6,387.5 L1304.6,385.9 L1305.6,385.5 L1306.6,384.8 L1307.7,383.0 L1308.7,384.0 L1309.7,382.5 L1310.8,382.7 L1311.8,381.8 L1312.9,383.3 L1313.9,383.3 L1315.0,383.6 L1316.0,383.6 L1317.0,384.1 L1318.0,385.4 L1319.0,385.1 L1320.0,387.5 L1321.1,387.7 L1322.2,388.8 L1323.2,390.6 L1324.3,393.0 L1325.4,394.2 L1326.4,395.3 L1327.5,397.5 L1328.5,399.4 L1329.5,400.5 L1330.5,402.5 L1331.5,403.5 L1332.4,405.9 L1333.3,407.0 L1334.2,408.2 L1335.0,409.3 L1336.2,411.4 L1337.2,413.4 L1338.0,416.0 L1338.6,418.3 L1339.3,420.0 L1339.9,421.8 L1340.6,423.8 L1341.4,425.2 L1342.4,426.4 L1343.6,428.1 L1345.1,429.7 L1347.0,431.4 L1347.7,431.3 L1348.4,431.9 L1349.2,431.7 L1350.0,432.8 L1350.9,433.6 L1351.8,434.1 L1352.7,432.9 L1353.7,434.7 L1354.7,434.4 L1355.7,434.7 L1356.8,435.3 L1357.9,435.0 L1359.0,435.8 L1360.1,435.2 L1361.2,436.2 L1362.3,437.1 L1363.5,437.4 L1364.7,436.4 L1365.8,437.2 L1367.0,438.0 L1368.1,438.4 L1369.3,438.0 L1370.4,437.8 L1371.6,438.4 L1372.7,439.1 L1373.8,438.9 L1374.9,438.7 L1376.0,440.1 L1377.0,439.8 L1378.1,440.6 L1379.0,441.0 L1380.0,441.7 L1380.9,441.7 L1381.8,442.3 L1382.7,441.9 L1383.5,443.4 L1384.3,442.9 L1385.0,444.1 L1386.6,444.5 L1388.1,446.4 L1389.3,447.0 L1390.4,447.6 L1391.4,448.6 L1392.2,450.3 L1393.0,450.8 L1393.7,451.6 L1394.5,453.1 L1395.2,455.1 L1396.0,456.8 L1396.8,460.4 L1397.7,462.6 L1398.8,465.4 L1400.0,469.8 L1400.8,472.4 L1401.7,475.3 L1402.6,478.4 L1403.6,482.3 L1404.6,486.5 L1405.6,489.6 L1406.6,493.2 L1407.7,497.7 L1408.8,502.3 L1409.9,506.0 L1411.0,511.3 L1412.1,514.8 L1413.2,519.6 L1414.3,524.6 L1415.3,528.7 L1416.4,533.8 L1417.5,538.3 L1418.5,543.5 L1419.5,548.3 L1420.5,553.0 L1421.4,558.1 L1422.3,563.9 L1423.2,567.6 L1424.0,573.3 L1425.3,581.6 L1426.5,590.1 L1427.7,598.9 L1428.8,606.7 L1429.8,616.1 L1430.8,625.8 L1431.8,635.2 L1432.7,643.9 L1433.6,653.1 L1434.4,662.1 L1435.3,671.7 L1436.2,681.9 L1437.1,691.2 L1438.0,699.6 L1439.1,711.5 L1440.1,722.3 L1441.1,733.4 L1442.0,744.5 L1443.0,756.7 L1443.9,767.6 L1444.9,778.1 L1445.9,790.3 L1446.8,800.3 L1447.8,810.5 L1448.9,820.9 L1450.0,829.6 L1450.9,838.0 L1451.9,843.8 L1452.9,851.1 L1453.9,858.3 L1455.0,864.4 L1456.0,871.5 L1457.1,877.1 L1458.2,883.1 L1459.2,889.6 L1460.3,895.1 L1461.3,901.6 L1462.3,905.3 L1463.2,911.7 L1464.1,915.0 L1465.0,920.1 L1466.2,926.2 L1467.2,931.4 L1468.1,934.8 L1468.9,940.1 L1469.8,943.6 L1470.6,945.6 L1471.5,949.6 L1472.5,951.7 L1473.7,954.7 L1475.0,957.8 L1475.8,959.3 L1476.6,961.9 L1477.4,963.8 L1478.3,964.9 L1479.2,966.8 L1480.1,968.3 L1481.0,969.5 L1482.0,972.2 L1483.0,973.9 L1484.0,975.0 L1485.0,976.7 L1486.1,978.4 L1487.2,979.2 L1488.3,980.0 L1489.4,981.9 L1490.5,982.9 L1491.7,983.5 L1492.8,983.2 L1494.0,984.7 L1494.9,984.0 L1495.8,983.6 L1496.8,983.8 L1497.8,984.2 L1498.8,984.2 L1499.8,984.3 L1500.9,984.7 L1502.0,983.2 L1503.1,983.1 L1504.2,983.1 L1505.3,982.3 L1506.4,981.6 L1507.6,981.8 L1508.7,981.0 L1509.8,980.6 L1510.8,980.2 L1511.9,978.5 L1513.0,978.2 L1514.0,978.0 L1514.9,976.3 L1515.9,975.4 L1516.8,975.6 L1517.7,974.6 L1518.5,973.7 L1519.3,971.5 L1520.0,970.7 L1521.6,968.6 L1523.0,964.9 L1524.2,963.0 L1525.2,959.5 L1526.0,955.3 L1526.8,952.3 L1527.5,948.1 L1528.3,941.8 L1529.1,936.1 L1530.0,929.7 L1531.0,922.9 L1532.0,916.6 L1532.9,910.0 L1533.9,901.8 L1534.9,894.0 L1535.9,884.4 L1536.9,874.0 L1537.9,860.3 L1538.9,846.8 L1540.0,829.9 L1540.9,813.7 L1541.9,795.4 L1543.0,774.8 L1544.0,753.6 L1545.1,730.9 L1546.1,708.0 L1547.2,685.0 L1548.2,661.1 L1549.2,637.3 L1550.2,614.3 L1551.1,593.7 L1552.0,572.7 L1553.2,544.0 L1554.5,513.9 L1555.6,483.3 L1556.8,455.4 L1557.8,428.6 L1558.7,405.1 L1559.4,384.8 L1560.0,370.4" stroke="#2b7bc0" stroke-width="1.6" fill="none" stroke-linejoin="round"/><path d="M652.8,518.0 L652.8,539.6 M653.4,515.6 L653.4,515.7 M654.1,512.6 L654.1,512.8 M655.9,505.0 L655.9,514.6 M656.9,500.6 L656.9,557.8 M658.0,496.0 L658.0,496.9 M661.5,482.0 L661.5,499.4 M662.7,477.6 L662.7,490.6 M665.0,470.0 L665.0,488.8 M667.7,462.4 L667.7,530.2 M669.5,457.8 L669.5,457.8 M671.4,453.4 L671.4,468.4 M672.4,451.3 L672.4,474.2 M676.5,443.5 L676.5,447.8 M677.6,441.6 L677.6,443.2 M680.0,438.0 L680.0,442.5 M680.9,436.8 L680.9,446.2 M682.7,434.2 L682.7,437.9 M683.6,432.9 L683.6,433.7 M684.6,431.6 L684.6,442.9 M685.6,430.3 L685.6,434.4 M688.7,426.5 L688.7,455.6 M690.8,424.1 L690.8,424.4 M691.9,423.0 L691.9,425.6 M692.9,421.9 L692.9,421.9 M694.0,420.9 L694.0,420.9 M695.1,420.0 L695.1,421.8 M696.1,419.1 L696.1,445.4 M697.1,418.4 L697.1,418.7 M698.1,417.7 L698.1,472.7 M700.1,416.6 L700.1,438.4 M703.1,415.7 L703.1,416.5 M705.2,415.1 L705.2,439.2 M709.2,414.4 L709.2,414.4 M711.1,414.8 L711.1,447.8 M712.1,415.2 L712.1,416.6 M713.0,415.9 L713.0,429.4 M714.0,416.9 L714.0,431.7 M716.9,421.7 L716.9,422.5 M719.0,426.8 L719.0,431.7 M720.0,430.0 L720.0,430.9 M725.0,450.3 L725.0,481.9 M728.0,466.2 L728.0,467.7 M730.1,477.8 L730.1,478.2 M731.2,483.9 L731.2,492.9 M734.2,502.6 L734.2,512.4 M736.2,515.2 L736.2,527.9 M740.0,540.0 L740.0,552.7 M742.2,555.4 L742.2,562.4 M747.1,596.6 L747.1,600.9 M748.1,605.1 L748.1,605.2 M749.0,613.5 L749.0,613.5 M751.9,638.3 L751.9,646.0 M753.9,654.1 L753.9,662.1 M754.9,661.7 L754.9,663.4 M756.0,669.0 L756.0,675.9 M756.9,675.0 L756.9,675.0 M760.8,698.3 L760.8,698.3 M761.8,703.9 L761.8,704.5 M762.8,709.5 L762.8,709.5 M764.8,720.3 L764.8,721.4 M769.9,746.1 L769.9,746.8 M770.9,751.1 L770.9,751.7 M772.0,755.9 L772.0,755.9 M773.0,760.7 L773.0,762.1 M774.0,765.4 L774.0,765.9 M775.0,770.0 L775.0,771.3 M776.0,774.5 L776.0,779.3 M777.0,779.0 L777.0,779.5 M781.7,800.1 L781.7,800.1 M783.6,808.0 L783.6,808.0 M785.5,815.5 L785.5,815.7 M786.5,819.2 L786.5,819.3 M789.5,829.8 L789.5,829.8 M792.8,839.8 L792.8,839.8 M794.0,843.0 L794.0,843.2 M797.5,852.0 L797.5,857.3 M807.0,871.7 L807.0,871.8 M811.1,878.5 L811.1,881.6 M813.2,881.7 L813.2,884.2 M814.3,883.2 L814.3,885.7 M816.6,886.0 L816.6,887.0 M818.8,888.7 L818.8,888.8 M820.0,890.0 L820.0,893.2 M820.9,890.9 L820.9,893.0 M821.8,891.8 L821.8,893.0 M822.7,892.7 L822.7,901.3 M824.6,894.4 L824.6,897.6 M825.5,895.2 L825.5,895.3 M828.5,897.4 L828.5,900.7 M831.5,899.5 L831.5,899.5 M832.6,900.2 L832.6,900.2 M835.7,901.9 L835.7,906.2 M836.7,902.5 L836.7,903.1 M838.8,903.5 L838.8,904.1 M842.0,904.8 L842.0,907.4 M847.2,906.6 L847.2,909.1 M849.2,907.1 L849.2,916.4 M850.2,907.3 L850.2,907.7 M851.2,907.5 L851.2,909.5 M852.1,907.7 L852.1,907.9 M854.1,907.9 L854.1,911.9 M855.0,908.0 L855.0,908.3 M856.1,908.1 L856.1,908.3 M858.2,908.1 L858.2,908.8 M859.3,908.1 L859.3,908.1 M860.3,908.1 L860.3,909.2 M861.4,908.0 L861.4,908.3 M862.4,907.9 L862.4,912.4 M863.5,907.8 L863.5,907.8 M864.5,907.6 L864.5,911.0 M867.6,906.9 L867.6,907.0 M874.6,904.0 L874.6,904.0 M876.5,902.7 L876.5,904.0 M877.5,902.1 L877.5,905.7 M878.4,901.4 L878.4,905.9 M879.4,900.6 L879.4,900.8 M881.3,898.9 L881.3,900.0 M882.2,898.0 L882.2,900.1 M883.2,897.1 L883.2,897.5 M884.1,896.1 L884.1,899.1 M885.0,895.0 L885.0,899.7 M886.1,893.6 L886.1,893.8 M888.3,890.6 L888.3,890.8 M890.4,887.3 L890.4,887.4 M891.5,885.5 L891.5,885.5 M894.6,879.6 L894.6,879.7 M895.6,877.5 L895.6,879.6 M896.6,875.4 L896.6,875.6 M897.6,873.2 L897.6,883.2 M898.6,871.0 L898.6,871.5 M899.6,868.8 L899.6,868.8 M901.6,864.1 L901.6,872.8 M903.5,859.5 L903.5,859.5 M904.5,857.1 L904.5,858.4 M905.4,854.7 L905.4,857.0 M907.3,850.0 L907.3,850.0 M909.1,845.3 L909.1,845.4 M911.1,840.1 L911.1,840.5 M912.2,837.2 L912.2,838.7 M914.4,831.2 L914.4,831.4 M915.4,828.1 L915.4,828.2 M916.4,825.0 L916.4,825.0 M919.5,815.6 L919.5,815.6 M920.4,812.4 L920.4,812.5 M923.3,802.7 L923.3,804.4 M924.3,799.5 L924.3,802.3 M925.3,796.2 L925.3,796.3 M926.2,793.0 L926.2,793.3 M927.2,789.7 L927.2,791.3 M928.1,786.5 L928.1,787.0 M930.0,780.0 L930.0,780.1 M932.0,773.0 L932.0,774.8 M934.0,766.3 L934.0,767.1 M934.9,762.9 L934.9,763.0 M936.7,756.3 L936.7,756.3 M937.6,753.0 L937.6,753.2 M939.5,746.1 L939.5,746.4 M940.4,742.6 L940.4,742.6 M941.4,738.9 L941.4,739.1 M943.4,731.3 L943.4,733.1 M944.5,727.2 L944.5,728.5 M948.8,710.8 L948.8,710.8 M952.4,696.5 L952.4,697.5 M953.4,692.7 L953.4,695.2 M954.3,688.8 L954.3,692.3 M955.3,684.8 L955.3,688.5 M957.3,676.6 L957.3,679.8 M959.3,668.2 L959.3,668.5 M960.3,664.0 L960.3,664.1 M963.4,651.4 L963.4,664.2 M965.5,643.2 L965.5,644.6 M967.6,635.1 L967.6,635.1 M968.7,631.2 L968.7,637.3 M969.8,627.4 L969.8,632.3 M970.8,623.7 L970.8,623.7 M971.9,620.1 L971.9,630.2 M974.0,613.2 L974.0,616.2 M975.0,610.0 L975.0,619.8 M978.9,598.2 L978.9,607.2 M979.9,595.2 L979.9,613.8 M980.9,592.2 L980.9,614.7 M982.9,586.4 L982.9,590.1 M984.0,583.5 L984.0,583.8 M988.0,572.4 L988.0,586.1 M991.1,564.8 L991.1,576.6 M994.1,558.1 L994.1,581.3 M995.2,556.1 L995.2,563.8 M997.2,552.5 L997.2,552.6 M998.2,551.0 L998.2,555.8 M999.2,549.5 L999.2,567.9 M1000.1,548.3 L1000.1,548.4 M1002.1,546.3 L1002.1,554.0 M1004.0,545.0 L1004.0,545.1 M1006.1,544.5 L1006.1,544.5 M1007.1,544.5 L1007.1,552.9 M1011.2,546.6 L1011.2,546.6 M1013.1,548.6 L1013.1,549.2 M1015.1,551.3 L1015.1,552.9 M1019.0,558.2 L1019.0,568.7 M1020.0,560.2 L1020.0,562.0 M1022.9,566.9 L1022.9,572.1 M1025.9,574.3 L1025.9,604.6 M1026.9,576.9 L1026.9,586.3 M1027.9,579.6 L1027.9,592.8 M1034.9,599.2 L1034.9,599.7 M1036.9,605.6 L1036.9,605.7 M1037.9,609.0 L1037.9,609.0 M1046.0,638.5 L1046.0,638.7 M1049.0,650.5 L1049.0,650.7 M1050.0,654.6 L1050.0,655.3 M1051.0,658.7 L1051.0,659.2 M1052.0,662.9 L1052.0,669.5 M1054.0,671.2 L1054.0,672.2 M1056.0,679.6 L1056.0,687.6 M1057.0,683.8 L1057.0,683.8 M1059.0,692.4 L1059.0,693.2 M1060.0,696.9 L1060.0,697.3 M1062.0,706.2 L1062.0,708.1 M1066.0,725.8 L1066.0,726.1 M1067.0,730.8 L1067.0,735.1 M1067.9,735.9 L1067.9,737.9 M1069.9,746.1 L1069.9,746.7 M1071.9,756.4 L1071.9,756.4 M1073.8,766.7 L1073.8,768.1 M1074.8,771.8 L1074.8,773.7 M1075.8,776.9 L1075.8,778.0 M1076.8,781.9 L1076.8,782.0 M1077.8,786.9 L1077.8,787.4 M1080.8,801.6 L1080.8,804.0 M1081.9,806.3 L1081.9,806.4 M1082.9,811.0 L1082.9,811.7 M1086.0,824.0 L1086.0,824.0 M1087.9,831.9 L1087.9,832.6 M1088.9,835.9 L1088.9,837.1 M1091.9,847.7 L1091.9,847.9 M1092.9,851.6 L1092.9,853.1 M1093.9,855.5 L1093.9,855.9 M1095.0,859.4 L1095.0,860.4 M1097.0,867.0 L1097.0,868.0 M1109.3,908.9 L1109.3,909.2 M1110.3,911.9 L1110.3,912.7 M1111.2,914.9 L1111.2,915.1 M1114.1,923.4 L1114.1,923.4 M1120.2,940.0 L1120.2,943.0 M1121.2,942.5 L1121.2,946.0 M1122.2,944.9 L1122.2,946.6 M1124.2,949.4 L1124.2,949.7 M1126.1,953.5 L1126.1,957.7 M1129.9,960.8 L1129.9,960.8 M1130.8,962.5 L1130.8,962.5 M1132.8,965.6 L1132.8,969.6 M1140.9,976.0 L1140.9,976.4 M1141.9,976.9 L1141.9,979.0 M1142.8,977.8 L1142.8,979.1 M1146.8,980.8 L1146.8,990.9 M1151.9,983.6 L1151.9,992.3 M1155.0,984.8 L1155.0,986.0 M1156.0,985.1 L1156.0,985.9 M1157.1,985.4 L1157.1,988.7 M1158.1,985.7 L1158.1,986.8 M1160.2,986.1 L1160.2,986.5 M1164.2,986.7 L1164.2,986.7 M1170.0,987.0 L1170.0,989.1 M1171.1,987.0 L1171.1,987.2 M1173.2,986.9 L1173.2,990.2 M1174.3,986.8 L1174.3,987.2 M1175.4,986.7 L1175.4,988.6 M1177.4,986.4 L1177.4,989.6 M1178.4,986.2 L1178.4,986.2 M1180.5,985.7 L1180.5,987.3 M1181.5,985.4 L1181.5,985.6 M1185.4,983.6 L1185.4,986.0 M1186.4,983.0 L1186.4,983.1 M1188.3,981.7 L1188.3,983.5 M1191.2,979.3 L1191.2,979.3 M1192.1,978.3 L1192.1,978.7 M1194.0,976.2 L1194.0,976.7 M1198.1,970.7 L1198.1,971.3 M1200.2,967.5 L1200.2,967.5 M1204.2,960.2 L1204.2,961.0 M1207.2,954.1 L1207.2,954.1 M1212.1,942.3 L1212.1,945.9 M1214.1,937.2 L1214.1,938.5 M1216.0,931.7 L1216.0,933.4 M1217.0,928.9 L1217.0,929.1 M1218.0,926.0 L1218.0,926.0 M1219.0,922.9 L1219.0,924.4 M1222.1,913.0 L1222.1,913.1 M1225.2,902.3 L1225.2,907.3 M1227.3,894.8 L1227.3,896.4 M1228.3,890.9 L1228.3,890.9 M1229.4,887.0 L1229.4,888.4 M1230.4,883.0 L1230.4,887.4 M1232.4,874.8 L1232.4,875.1 M1233.4,870.6 L1233.4,872.0 M1235.4,862.1 L1235.4,863.7 M1239.1,844.5 L1239.1,845.4 M1241.1,834.1 L1241.1,834.2 M1243.4,821.9 L1243.4,823.3 M1245.5,809.2 L1245.5,810.5 M1246.5,802.7 L1246.5,803.5 M1247.6,796.1 L1247.6,796.4 M1248.6,789.4 L1248.6,789.7 M1249.6,782.7 L1249.6,785.3 M1253.4,755.1 L1253.4,755.1 M1255.2,741.1 L1255.2,742.7 M1256.1,734.1 L1256.1,734.3 M1259.2,708.2 L1259.2,708.3 M1260.3,698.6 L1260.3,698.7 M1264.2,659.2 L1264.2,660.7 M1265.2,649.3 L1265.2,650.2 M1267.1,629.4 L1267.1,649.0 M1268.0,619.5 L1268.0,645.9 M1269.0,609.7 L1269.0,610.1 M1271.0,590.2 L1271.0,603.5 M1272.0,580.3 L1272.0,580.7 M1273.0,570.2 L1273.0,570.4 M1274.0,560.1 L1274.0,561.2 M1276.9,529.8 L1276.9,541.8 M1277.9,520.1 L1277.9,535.8 M1279.9,501.3 L1279.9,523.5 M1280.9,492.4 L1280.9,493.1 M1282.0,484.0 L1282.0,487.3 M1289.7,431.3 L1289.7,439.6 M1290.7,425.9 L1290.7,460.1 M1291.7,420.8 L1291.7,422.6 M1292.7,416.0 L1292.7,454.0 M1295.9,403.5 L1295.9,432.6 M1297.0,400.0 L1297.0,408.5 M1297.9,397.5 L1297.9,409.7 M1300.7,391.4 L1300.7,418.4 M1301.7,389.8 L1301.7,417.9 M1303.6,387.1 L1303.6,388.9 M1309.7,382.9 L1309.7,398.3 M1310.8,382.7 L1310.8,389.4 M1311.8,382.6 L1311.8,422.0 M1315.0,383.0 L1315.0,398.9 M1316.0,383.4 L1316.0,394.3 M1317.0,383.9 L1317.0,393.9 M1318.0,384.7 L1318.0,387.8 M1321.1,388.1 L1321.1,411.0 M1322.2,389.4 L1322.2,392.2 M1323.2,390.9 L1323.2,391.1 M1328.5,399.2 L1328.5,402.3 M1331.5,404.3 L1331.5,432.7 M1332.4,405.9 L1332.4,408.3 M1334.2,408.7 L1334.2,437.5 M1335.0,410.0 L1335.0,416.4 M1336.2,412.0 L1336.2,447.1 M1337.2,413.9 L1337.2,417.8 M1339.9,421.4 L1339.9,443.3 M1340.6,423.1 L1340.6,483.3 M1343.6,428.0 L1343.6,449.4 M1345.1,429.5 L1345.1,435.9 M1347.0,431.0 L1347.0,435.6 M1347.7,431.4 L1347.7,452.7 M1348.4,431.9 L1348.4,432.7 M1350.0,432.6 L1350.0,462.6 M1351.8,433.4 L1351.8,438.9 M1352.7,433.7 L1352.7,443.9 M1356.8,435.0 L1356.8,438.7 M1360.1,435.8 L1360.1,440.6 M1362.3,436.4 L1362.3,442.2 M1363.5,436.6 L1363.5,445.4 M1364.7,436.9 L1364.7,470.6 M1365.8,437.2 L1365.8,464.9 M1368.1,437.7 L1368.1,438.3 M1370.4,438.3 L1370.4,451.1 M1372.7,438.9 L1372.7,443.9 M1374.9,439.5 L1374.9,463.6 M1376.0,439.9 L1376.0,447.4 M1379.0,440.9 L1379.0,441.7 M1380.0,441.3 L1380.0,441.8 M1382.7,442.6 L1382.7,462.1 M1383.5,443.0 L1383.5,443.7 M1385.0,444.0 L1385.0,450.0 M1390.4,448.0 L1390.4,477.0 M1392.2,449.8 L1392.2,460.9 M1393.7,452.0 L1393.7,468.2 M1396.0,457.2 L1396.0,464.8 M1396.8,459.7 L1396.8,479.8 M1397.7,462.6 L1397.7,472.2 M1400.0,470.0 L1400.0,470.8 M1400.8,472.8 L1400.8,485.4 M1402.6,479.0 L1402.6,523.6 M1404.6,486.0 L1404.6,489.0 M1407.7,497.7 L1407.7,508.4 M1408.8,501.9 L1408.8,523.5 M1409.9,506.2 L1409.9,515.2 M1411.0,510.7 L1411.0,516.7 M1414.3,524.5 L1414.3,531.3 M1419.5,548.7 L1419.5,550.3 M1421.4,558.5 L1421.4,574.8 M1423.2,568.2 L1423.2,568.2 M1424.0,573.0 L1424.0,575.6 M1425.3,581.3 L1425.3,593.3 M1426.5,589.9 L1426.5,590.0 M1428.8,607.4 L1428.8,608.0 M1429.8,616.5 L1429.8,616.5 M1430.8,625.6 L1430.8,633.6 M1431.8,634.8 L1431.8,636.5 M1432.7,644.1 L1432.7,650.5 M1433.6,653.4 L1433.6,659.3 M1434.4,662.8 L1434.4,662.9 M1436.2,681.5 L1436.2,683.6 M1438.0,700.0 L1438.0,703.5 M1441.1,733.2 L1441.1,733.2 M1443.0,756.0 L1443.0,759.0 M1446.8,800.2 L1446.8,800.2 M1447.8,810.6 L1447.8,811.0 M1450.0,830.0 L1450.0,830.6 M1450.9,837.3 L1450.9,837.4 M1456.0,871.4 L1456.0,874.2 M1457.1,877.7 L1457.1,878.2 M1458.2,883.8 L1458.2,883.9 M1459.2,889.7 L1459.2,890.1 M1460.3,895.3 L1460.3,895.4 M1464.1,915.6 L1464.1,917.3 M1465.0,920.0 L1465.0,924.2 M1467.2,931.1 L1467.2,931.6 M1468.9,939.5 L1468.9,939.6 M1472.5,952.0 L1472.5,955.3 M1475.8,959.7 L1475.8,961.1 M1478.3,964.9 L1478.3,965.0 M1479.2,966.7 L1479.2,971.5 M1481.0,970.1 L1481.0,971.9 M1482.0,971.8 L1482.0,975.2 M1483.0,973.4 L1483.0,973.7 M1484.0,975.0 L1484.0,975.4 M1486.1,977.8 L1486.1,978.1 M1487.2,979.1 L1487.2,979.4 M1488.3,980.3 L1488.3,984.9 M1491.7,983.0 L1491.7,985.1 M1494.0,984.0 L1494.0,985.9 M1495.8,984.4 L1495.8,986.5 M1499.8,984.2 L1499.8,984.3 M1503.1,983.5 L1503.1,984.7 M1507.6,981.7 L1507.6,983.2 M1510.8,979.8 L1510.8,984.7 M1513.0,978.3 L1513.0,982.9 M1514.0,977.5 L1514.0,983.8 M1514.9,976.7 L1514.9,976.7 M1515.9,975.8 L1515.9,978.2 M1523.0,965.5 L1523.0,968.1 M1524.2,962.6 L1524.2,966.2 M1526.8,952.0 L1526.8,952.1 M1528.3,942.4 L1528.3,942.5 M1531.0,923.1 L1531.0,926.8 M1532.9,909.3 L1532.9,910.3 M1534.9,893.5 L1534.9,893.6 M1535.9,884.1 L1535.9,886.3 M1536.9,873.4 L1536.9,877.1 M1537.9,861.0 L1537.9,861.2 M1538.9,846.6 L1538.9,846.7 M1540.9,813.9 L1540.9,813.9 M1541.9,795.6 L1541.9,796.1 M1543.0,775.5 L1543.0,776.6 M1547.2,684.2 L1547.2,685.5 M1550.2,614.5 L1550.2,622.5 M1554.5,513.7 L1554.5,520.6 M1555.6,484.0 L1555.6,486.5 M1556.8,455.4 L1556.8,456.9 M1557.8,428.9 L1557.8,428.9 M1558.7,405.2 L1558.7,416.6 M1559.4,385.3 L1559.4,388.3" stroke="#2b7bc0" stroke-width="1" fill="none"/></svg><rect x="1560" y="1075" width="20" height="30" fill="#000"/><text x="1078" y="1131.5" fill="#fff" font-family="Liberation Sans" font-size="16.3" text-anchor="middle">t0 = Wed Apr 01 2026 19:19:12 UTC [1459106370.1250]</text></svg><div style="position:absolute;left:578px;top:1152px;width:99px;height:24px;box-sizing:border-box;border:1px solid #b4b4b4;border-radius:3px;background:linear-gradient(#f6f6f6,#e2e2e2);font:12.5px 'Liberation Sans',sans-serif;color:#b8b8b8;text-align:center;line-height:22px;white-space:nowrap"><svg width="12" height="12" style="display:inline-block;vertical-align:-1px;margin-right:6px"><path d="M2,1 L10,6 L2,11 Z" fill="none" stroke="#c4c4c4" stroke-width="1"/></svg>start online</div><div style="position:absolute;left:680px;top:1152px;width:99px;height:24px;box-sizing:border-box;border:1px solid #b4b4b4;border-radius:3px;background:linear-gradient(#f6f6f6,#e2e2e2);font:12.5px 'Liberation Sans',sans-serif;color:#1e1e1e;text-align:center;line-height:22px;white-space:nowrap"><svg width="12" height="12" style="display:inline-block;vertical-align:-1px;margin-right:6px"><rect x="1.5" y="1.5" width="8" height="8" fill="#fff" stroke="#555" stroke-width="1"/></svg>stop online</div><div style="position:absolute;left:782px;top:1152px;width:99px;height:24px;box-sizing:border-box;border:1px solid #b4b4b4;border-radius:3px;background:linear-gradient(#f6f6f6,#e2e2e2);font:12.5px 'Liberation Sans',sans-serif;color:#1e1e1e;text-align:center;line-height:22px;white-space:nowrap">reset</div><div style="position:absolute;left:884px;top:1152px;width:99px;height:24px;box-sizing:border-box;border:1px solid #b4b4b4;border-radius:3px;background:linear-gradient(#f6f6f6,#e2e2e2);font:12.5px 'Liberation Sans',sans-serif;color:#1e1e1e;text-align:center;line-height:22px;white-space:nowrap">add channels</div><div style="position:absolute;left:1469px;top:1152px;width:79px;height:24px;box-sizing:border-box;border:1px solid #c4c4c4;border-radius:3px;background:linear-gradient(#f4f4f4,#dedede);font:12.5px 'Liberation Sans',sans-serif;color:#b8b8b8;text-align:center;line-height:22px">snapshot</div><svg style="position:absolute;left:1557px;top:1157px" width="16" height="14"><path d="M2,11 L8,4 L14,11 Z" fill="#222"/></svg><div style="position:absolute;left:576px;top:1179px;width:1004px;height:30px;background:#8fb891;font:12.5px 'Liberation Sans',sans-serif;color:#1a1a1a;line-height:31px;text-indent:6px">Retrieving raw ...</div><div style="position:absolute;left:15px;top:604.5px;width:508px;height:533px;background:#eeeeee;border:1px solid #8c8c8c;border-radius:5px 5px 0 0;box-sizing:border-box;overflow:hidden"><div style="height:28px;background:#f4f3f1"></div></div><div style="position:absolute;left:20px;top:611px;width:20px;height:18px;border:1px solid #a8a8a8;border-radius:3px;background:linear-gradient(#ffffff,#dfe2df);box-sizing:border-box"><div style="position:absolute;left:1px;right:1px;top:1px;height:2px;background:#4a78c0"></div></div><div style="position:absolute;left:15px;top:609px;width:508px;text-align:center;font:bold 12px 'Liberation Sans',sans-serif;color:#8a8e8e;line-height:20px"><span style="position:relative;left:-34px;top:1px">GigE Camera - AS AIR ISCT6</span></div><svg style="position:absolute;left:420px;top:609px" width="100" height="22" viewBox="420 609 100 22"><path d="M434.8,622.5 L439,618.3 L443.2,622.5" stroke="#7c8284" stroke-width="2" fill="none"/><path d="M457.5,623.0 L466.5,623.0" stroke="#7c8284" stroke-width="2" fill="none"/><rect x="481.5" y="616.0" width="7.5" height="7.5" stroke="#7c8284" stroke-width="2" fill="none"/><path d="M504,615.7 L512,623.7 M512,615.7 L504,623.7" stroke="#7c8284" stroke-width="2" fill="none"/></svg><div style="position:absolute;left:15px;top:640px;width:508px;text-align:center;font:18.5px 'Liberation Mono',monospace;color:#222;line-height:24px"><span style="position:relative;left:-1px">AS AIR ISCT6</span></div><svg style="position:absolute;left:28px;top:670px" width="482" height="360" viewBox="28 670 482 360"><defs><radialGradient id="spot" cx="50%" cy="50%" r="50%"><stop offset="0" stop-color="#fff"/><stop offset="0.66" stop-color="#fff"/><stop offset="0.78" stop-color="#b0b0b0"/><stop offset="0.9" stop-color="#404040"/><stop offset="1" stop-color="#000"/></radialGradient></defs><rect x="28" y="670" width="482" height="360" fill="#000"/><ellipse cx="272" cy="807" rx="70" ry="68" fill="url(#spot)"/><text x="84" y="706" fill="#fff" font-family="Liberation Mono" font-size="17.5">ISCT6 AS AIR (16)</text><text x="57" y="728" fill="#fff" font-family="Liberation Mono" font-size="17.5">2026-04-01 12:19:12 PDT</text></svg><div style="position:absolute;left:28px;top:1094px;width:36px;height:30px;box-sizing:border-box;border:1px solid #b8b8b8;border-radius:3px;background:linear-gradient(#f8f8f8,#e4e4e4)"><svg width="34" height="28" style="position:absolute;left:0;top:0"><rect x="8" y="9" width="19" height="12" rx="2" fill="#3a3a3a"/><rect x="13" y="6" width="8" height="4" fill="#3a3a3a"/><circle cx="17.5" cy="15" r="4.5" fill="#bbb" stroke="#222" stroke-width="1.5"/></svg></div></body></html>
